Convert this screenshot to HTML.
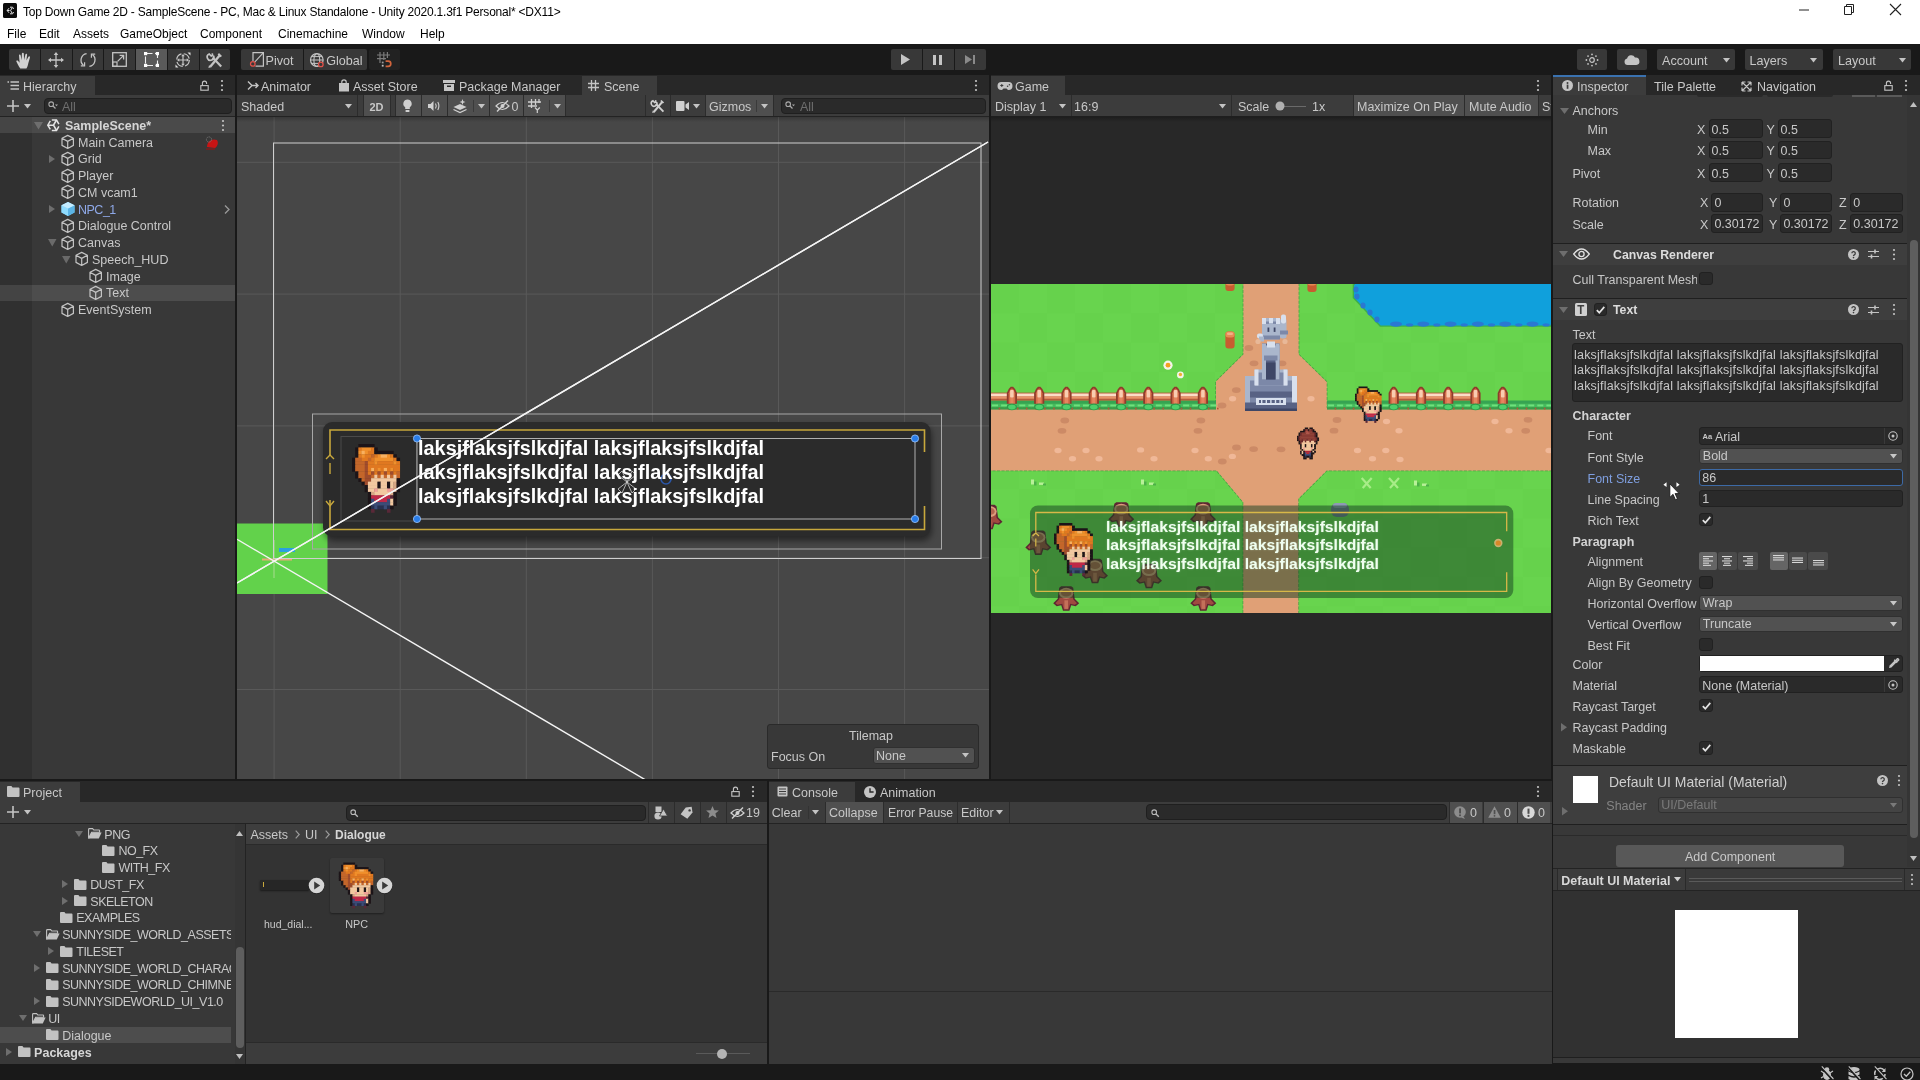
<!DOCTYPE html>
<html><head><meta charset="utf-8"><title>Unity</title>
<style>
html,body{margin:0;padding:0;background:#191919;}
body{width:1920px;height:1080px;position:relative;overflow:hidden;font-family:"Liberation Sans",sans-serif;font-size:13px;color:#c8c8c8;}
.a{position:absolute;box-sizing:border-box;}
.t{position:absolute;white-space:nowrap;line-height:16px;height:16px;transform:scaleY(1.045);transform-origin:0 50%;}
svg{overflow:visible}
</style></head><body>
<div class="a" style="left:0px;top:0px;width:1920px;height:44px;background:#ffffff;"></div>
<svg class="a" style="left:3px;top:3px;" width="14" height="15" viewBox="0 0 14 15"><rect width="14" height="15" rx="1.5" fill="#0c0c0c"/><path d="M4.2 7.5H6.6 M7.6 7.5L9 5 M7.6 7.5L9 10 M6 5.2L4.2 7.5L6 9.8 M7 4.2H9.6L10.6 6 M7 10.8H9.6L10.6 9" fill="none" stroke="#e8e8e8" stroke-width="1"/></svg>
<div class="t" style="left:23px;top:3.50px;font-size:12px;color:#000;letter-spacing:-0.21px;">Top Down Game 2D - SampleScene - PC, Mac &amp; Linux Standalone - Unity 2020.1.3f1 Personal* &lt;DX11&gt;</div>
<svg class="a" style="left:1799px;top:5px;" width="10" height="10" viewBox="0 0 10 10"><path d="M0 5H10" stroke="#222" stroke-width="1"/></svg>
<svg class="a" style="left:1844px;top:4px;" width="10" height="11" viewBox="0 0 10 11"><path d="M0.5 2.5H7.5V10.5H0.5Z M2.5 2.5V0.5H9.5V8.5H7.5" fill="none" stroke="#222" stroke-width="1"/></svg>
<svg class="a" style="left:1890px;top:4px;" width="11" height="11" viewBox="0 0 11 11"><path d="M0 0L11 11M11 0L0 11" stroke="#222" stroke-width="1.1"/></svg>
<div class="t" style="left:7px;top:25.50px;font-size:12px;color:#000;">File</div>
<div class="t" style="left:39px;top:25.50px;font-size:12px;color:#000;">Edit</div>
<div class="t" style="left:73px;top:25.50px;font-size:12px;color:#000;">Assets</div>
<div class="t" style="left:120px;top:25.50px;font-size:12px;color:#000;">GameObject</div>
<div class="t" style="left:200px;top:25.50px;font-size:12px;color:#000;">Component</div>
<div class="t" style="left:278px;top:25.50px;font-size:12px;color:#000;">Cinemachine</div>
<div class="t" style="left:362px;top:25.50px;font-size:12px;color:#000;">Window</div>
<div class="t" style="left:420px;top:25.50px;font-size:12px;color:#000;">Help</div>
<div class="a" style="left:0px;top:44px;width:1920px;height:31px;background:#191919;"></div>
<div class="a" style="left:9.0px;top:49px;width:30.75px;height:21px;background:#383838;border-radius:2px 0 0 2px"></div>
<div class="a" style="left:40.75px;top:49px;width:30.75px;height:21px;background:#383838;border-radius:0"></div>
<div class="a" style="left:72.5px;top:49px;width:30.75px;height:21px;background:#383838;border-radius:0"></div>
<div class="a" style="left:104.25px;top:49px;width:30.75px;height:21px;background:#383838;border-radius:0"></div>
<div class="a" style="left:136.0px;top:49px;width:30.75px;height:21px;background:#5a5a5a;border-radius:0"></div>
<div class="a" style="left:167.75px;top:49px;width:30.75px;height:21px;background:#383838;border-radius:0"></div>
<div class="a" style="left:199.5px;top:49px;width:30.75px;height:21px;background:#383838;border-radius:0 2px 2px 0"></div>
<div class="a" style="left:241px;top:49px;width:62px;height:21px;background:#383838;border-radius:2px 0 0 2px"></div>
<div class="a" style="left:304px;top:49px;width:63px;height:21px;background:#383838;border-radius:0 2px 2px 0"></div>
<div class="a" style="left:368.6px;top:49px;width:31.4px;height:21px;background:#222222;border-radius:2px"></div>
<div class="t" style="left:265.5px;top:52.50px;font-size:12.6px;color:#c8c8c8;">Pivot</div>
<div class="t" style="left:326.2px;top:52.50px;font-size:12.6px;color:#c8c8c8;">Global</div>
<div class="a" style="left:890.5px;top:49px;width:31px;height:21px;background:#383838;border-radius:2px 0 0 2px"></div>
<div class="a" style="left:922.5px;top:49px;width:31px;height:21px;background:#383838;border-radius:0"></div>
<div class="a" style="left:954.5px;top:49px;width:31px;height:21px;background:#383838;border-radius:0 2px 2px 0"></div>
<svg class="a" style="left:900px;top:54px;" width="11" height="11" viewBox="0 0 11 11"><path d="M1 0L10 5.5L1 11Z" fill="#c4c4c4"/></svg>
<svg class="a" style="left:933px;top:54.5px;" width="9" height="10" viewBox="0 0 9 10"><path d="M0 0H3V10H0ZM6 0H9V10H6Z" fill="#c4c4c4"/></svg>
<svg class="a" style="left:965px;top:55px;" width="10" height="9" viewBox="0 0 10 9"><path d="M0 0L7 4.5L0 9Z" fill="#8a8a8a"/><rect x="8" y="0" width="2" height="9" fill="#8a8a8a"/></svg>
<div class="a" style="left:1577px;top:49px;width:30px;height:21px;background:#383838;border-radius:2px"></div>
<div class="a" style="left:1617px;top:49px;width:30px;height:21px;background:#383838;border-radius:2px"></div>
<div class="a" style="left:1657px;top:49px;width:78px;height:21px;background:#383838;border-radius:2px"></div>
<div class="t" style="left:1662px;top:53.10px;font-size:12.6px;color:#c8c8c8;">Account</div>
<svg class="a" style="left:1722.5px;top:57.75px;" width="7" height="4.5" viewBox="0 0 7 4.5"><path d="M0 0H7L3.5 4.5Z" fill="#c4c4c4"/></svg>
<div class="a" style="left:1744.5px;top:49px;width:78px;height:21px;background:#383838;border-radius:2px"></div>
<div class="t" style="left:1749.5px;top:53.10px;font-size:12.6px;color:#c8c8c8;">Layers</div>
<svg class="a" style="left:1810.0px;top:57.75px;" width="7" height="4.5" viewBox="0 0 7 4.5"><path d="M0 0H7L3.5 4.5Z" fill="#c4c4c4"/></svg>
<div class="a" style="left:1833px;top:49px;width:78px;height:21px;background:#383838;border-radius:2px"></div>
<div class="t" style="left:1838px;top:53.10px;font-size:12.6px;color:#c8c8c8;">Layout</div>
<svg class="a" style="left:1898.5px;top:57.75px;" width="7" height="4.5" viewBox="0 0 7 4.5"><path d="M0 0H7L3.5 4.5Z" fill="#c4c4c4"/></svg>
<svg class="a" style="left:1584px;top:52px;" width="16" height="16" viewBox="0 0 16 16"><circle cx="8" cy="8" r="2.3" fill="none" stroke="#c4c4c4" stroke-width="1.2"/><circle cx="13.60" cy="8.00" r="0.9" fill="#c4c4c4"/><circle cx="11.96" cy="11.96" r="0.9" fill="#c4c4c4"/><circle cx="8.00" cy="13.60" r="0.9" fill="#c4c4c4"/><circle cx="4.04" cy="11.96" r="0.9" fill="#c4c4c4"/><circle cx="2.40" cy="8.00" r="0.9" fill="#c4c4c4"/><circle cx="4.04" cy="4.04" r="0.9" fill="#c4c4c4"/><circle cx="8.00" cy="2.40" r="0.9" fill="#c4c4c4"/><circle cx="11.96" cy="4.04" r="0.9" fill="#c4c4c4"/></svg>
<svg class="a" style="left:1624px;top:54px;" width="16" height="11" viewBox="0 0 16 11"><path d="M3.5 11a3.3 3.3 0 0 1-.4-6.5A4.2 4.2 0 0 1 11 3.6a3.7 3.7 0 0 1 1.3 7.4Z" fill="#c4c4c4"/></svg>
<div class="a" style="left:0px;top:1062px;width:1920px;height:18px;background:#191919;"></div>
<svg class="a" style="left:16.4px;top:51.5px;" width="16" height="17" viewBox="0 0 16 17"><path d="M4.3 16.5C2.6 14.2 1.2 11.6 0.4 9.6C0 8.6 1.2 7.9 2 8.8L3.6 10.8L3 3.6C2.9 2.4 4.5 2.2 4.7 3.4L5.6 8.2L5.9 1.6C6 0.3 7.7 0.3 7.8 1.6L8.1 8.1L9.4 2.4C9.7 1.2 11.3 1.5 11.1 2.8L10.4 8.6L12.3 4.9C12.9 3.8 14.3 4.5 13.9 5.7L12.3 11.2C11.9 13.4 11.3 15 10.4 16.5Z" fill="#d2d2d2"/></svg>
<svg class="a" style="left:48.15px;top:51.5px;" width="16" height="16" viewBox="0 0 16 16"><path d="M8 1V15M1 8H15" stroke="#c4c4c4" stroke-width="1.3" fill="none"/><path d="M8 0L10.3 3H5.7Z M8 16L10.3 13H5.7Z M0 8L3 5.7V10.3Z M16 8L13 5.7V10.3Z" fill="#c4c4c4"/></svg>
<svg class="a" style="left:79.9px;top:51.5px;" width="16" height="16" viewBox="0 0 16 16"><path d="M3.4 13.2A6.6 6.6 0 0 1 6.6 1.6 M12.6 2.8A6.6 6.6 0 0 1 9.4 14.4" fill="none" stroke="#c4c4c4" stroke-width="1.3"/><path d="M0.8 13.9H4.6V10.2" fill="none" stroke="#c4c4c4" stroke-width="1.2"/><path d="M15.2 2.1H11.4V5.8" fill="none" stroke="#c4c4c4" stroke-width="1.2"/></svg>
<svg class="a" style="left:112.15px;top:52px;" width="15" height="15" viewBox="0 0 15 15"><rect x="0.7" y="0.7" width="13.6" height="13.6" fill="none" stroke="#c4c4c4" stroke-width="1.3"/><rect x="0.7" y="10" width="4.3" height="4.3" fill="none" stroke="#c4c4c4" stroke-width="1.2"/><path d="M5.6 9.4L11.4 3.6 M7.6 3.4H11.6V7.4" fill="none" stroke="#c4c4c4" stroke-width="1.3"/></svg>
<svg class="a" style="left:143.9px;top:52px;" width="15" height="15" viewBox="0 0 15 15"><path d="M1.5 1.5H13.5V13.5H1.5Z" fill="none" stroke="#f0f0f0" stroke-width="1.1" stroke-dasharray="7 2.5 0 0"/><rect x="0" y="0" width="3.2" height="3.2" fill="#fff"/><rect x="11.8" y="0" width="3.2" height="3.2" fill="#fff"/><rect x="0" y="11.8" width="3.2" height="3.2" fill="#fff"/><rect x="11.8" y="11.8" width="3.2" height="3.2" fill="#fff"/></svg>
<svg class="a" style="left:175.15px;top:51.5px;" width="16" height="16" viewBox="0 0 16 16"><circle cx="8" cy="8" r="6.3" fill="none" stroke="#c4c4c4" stroke-width="1.2" stroke-dasharray="7.5 2.4"/><path d="M8 3.4V12.6M3.4 8H12.6" stroke="#c4c4c4" stroke-width="1.2"/><path d="M8 2L9.8 4.3H6.2Z M8 14L9.8 11.7H6.2Z M2 8L4.3 6.2V9.8Z M14 8L11.7 6.2V9.8Z" fill="#c4c4c4"/><path d="M12.5 0.5H15.5V3.5Z M0.5 12.5V15.5H3.5Z" fill="#e0e0e0"/></svg>
<svg class="a" style="left:206.9px;top:51.5px;" width="16" height="16" viewBox="0 0 16 16"><path d="M3.2 14.8L12.6 3.6" stroke="#c4c4c4" stroke-width="2.4"/><path d="M12 1L15 4L13.4 5.2L10.6 2.4Z" fill="#c4c4c4"/><path d="M1.4 16L2 13.2L4.2 15.2Z" fill="#c4c4c4"/><path d="M5.6 5.6L14.2 14.4" stroke="#c4c4c4" stroke-width="2.2"/><path d="M6.6 3.8A3.3 3.3 0 1 1 2.2 2L4.2 4L5.6 3.4L5.2 1.4" fill="none" stroke="#c4c4c4" stroke-width="1.7"/></svg>
<svg class="a" style="left:250px;top:52px;" width="15" height="15" viewBox="0 0 15 15"><path d="M3 9V0.7H13.4V14.2H5.5" fill="none" stroke="#c4c4c4" stroke-width="1.2"/><path d="M4.4 10.4L13 1.2" stroke="#c4c4c4" stroke-width="1.1"/><circle cx="2.8" cy="11.9" r="2.3" fill="#383838" stroke="#e0524a" stroke-width="1.3"/></svg>
<svg class="a" style="left:310px;top:52.5px;" width="15" height="15" viewBox="0 0 15 15"><circle cx="6.8" cy="7" r="6.3" fill="none" stroke="#c4c4c4" stroke-width="1.2"/><ellipse cx="6.8" cy="7" rx="2.9" ry="6.3" fill="none" stroke="#c4c4c4" stroke-width="1.1"/><path d="M0.5 7H13.1M1.6 3.6H12M1.6 10.4H12" stroke="#c4c4c4" stroke-width="1"/><circle cx="10.8" cy="11.4" r="2.3" fill="#383838" stroke="#e0524a" stroke-width="1.3"/></svg>
<svg class="a" style="left:376.5px;top:52px;" width="15" height="16" viewBox="0 0 15 16"><path d="M3 0V11M6.8 0V8M10.4 0V6M0 3H13M0 6.6H9" stroke="#7c7c7c" stroke-width="1.2" fill="none"/><rect x="4.8" y="9.6" width="1.8" height="1.8" fill="#9a9a9a"/><rect x="4.8" y="12.8" width="1.8" height="1.8" fill="#c0c0c0"/><path d="M8.6 9.2H11.2A2.6 2.6 0 0 1 11.2 14.4H8.6" fill="none" stroke="#d0643c" stroke-width="1.7"/></svg>
<div class="a" style="left:0px;top:75px;width:235px;height:704px;background:#383838;"></div>
<div class="a" style="left:0px;top:75px;width:235px;height:20px;background:#282828;"></div>
<div class="a" style="left:0px;top:76px;width:95px;height:19px;background:#3c3c3c;"></div>
<svg class="a" style="left:7px;top:81px;" width="12" height="10" viewBox="0 0 12 10"><path d="M0.5 1H2 M3.5 1H12 M3.5 4.5H12 M3.5 8H12" stroke="#c4c4c4" stroke-width="1.4"/></svg>
<div class="t" style="left:23px;top:79.00px;font-size:12.5px;color:#c8c8c8;">Hierarchy</div>
<svg class="a" style="left:200.0px;top:80.0px;" width="9" height="11" viewBox="0 0 9 11"><rect x="0.8" y="5.6" width="7.4" height="4.6" fill="none" stroke="#c4c4c4" stroke-width="1.1"/><path d="M2.4 5.6V3.2a2.1 2.1 0 0 1 4.2 0V4" fill="none" stroke="#c4c4c4" stroke-width="1.1"/></svg>
<svg class="a" style="left:220px;top:79.0px;" width="4" height="13.0" viewBox="0 0 4 13.0"><circle cx="2" cy="2.0" r="1.1" fill="#c4c4c4"/><circle cx="2" cy="6.5" r="1.1" fill="#c4c4c4"/><circle cx="2" cy="11.0" r="1.1" fill="#c4c4c4"/></svg>
<div class="a" style="left:0px;top:95px;width:235px;height:21.5px;background:#3c3c3c;"></div>
<div class="a" style="left:0px;top:116px;width:235px;height:1px;background:#232323;"></div>
<svg class="a" style="left:7px;top:100px;" width="12" height="12" viewBox="0 0 12 12"><path d="M6 0V12M0 6H12" stroke="#c4c4c4" stroke-width="1.6"/></svg>
<svg class="a" style="left:23.5px;top:103.75px;" width="7" height="4.5" viewBox="0 0 7 4.5"><path d="M0 0H7L3.5 4.5Z" fill="#c4c4c4"/></svg>
<div class="a" style="left:44px;top:97.5px;width:188px;height:16.5px;background:#2a2a2a;border-radius:4px;border:1px solid #1f1f1f;"></div>
<svg class="a" style="left:48px;top:101px;" width="10" height="9" viewBox="0 0 10 9"><circle cx="3.2" cy="3.2" r="2.3" fill="none" stroke="#aaa" stroke-width="1.1"/><path d="M5 5L7.5 7.5" stroke="#aaa" stroke-width="1.2"/><path d="M7 3.5H10L8.5 5.2Z" fill="#aaa"/></svg>
<div class="t" style="left:62px;top:98.50px;font-size:12.5px;color:#6e6e6e;">All</div>
<div class="a" style="left:0px;top:133px;width:32px;height:646px;background:#303030;"></div>
<div class="a" style="left:0px;top:117px;width:235px;height:16px;background:#4a4a4a;"></div>
<div class="a" style="left:0px;top:117px;width:32px;height:16px;background:#454545;"></div>
<svg class="a" style="left:34.0px;top:122.05px;" width="9" height="7.5" viewBox="0 0 9 7.5"><path d="M0 0H9L4.5 7.5Z" fill="#6e6e6e"/></svg>
<svg class="a" style="left:47.2px;top:119.2px;" width="13" height="12.4" viewBox="0 0 13 12.4"><path d="M6.5 6.2L0.8 6.2 M6.5 6.2L9.5 1 M6.5 6.2L9.5 11.4" fill="none" stroke="#e4e4e4" stroke-width="1.6"/><path d="M3.3 1.9L0.8 6.2L3.3 10.5 M4.8 1H9.5L11.9 5.1 M4.8 11.4H9.5L11.9 7.3" fill="none" stroke="#e4e4e4" stroke-width="1.5" stroke-linejoin="miter"/></svg>
<div class="t" style="left:65px;top:117.80px;font-size:12.5px;color:#d6d6d6;font-weight:700;">SampleScene*</div>
<svg class="a" style="left:221px;top:119.0px;" width="4" height="13.0" viewBox="0 0 4 13.0"><circle cx="2" cy="2.0" r="1.1" fill="#c4c4c4"/><circle cx="2" cy="6.5" r="1.1" fill="#c4c4c4"/><circle cx="2" cy="11.0" r="1.1" fill="#c4c4c4"/></svg>
<svg class="a" style="left:60px;top:134.2px;" width="16" height="16" viewBox="0 0 16 16"><path d="M7.7 1.4L13.4 4.3V11.4L7.7 14.5 2 11.4V4.3Z M7.7 7.4V14.5 M7.7 7.4L2 4.3 M7.7 7.4L13.4 4.3" fill="none" stroke="#c4c4c4" stroke-width="1.2" stroke-linejoin="round"/></svg>
<div class="t" style="left:78px;top:134.70px;font-size:12.5px;color:#c8c8c8;">Main Camera</div>
<svg class="a" style="left:60px;top:150.92999999999998px;" width="16" height="16" viewBox="0 0 16 16"><path d="M7.7 1.4L13.4 4.3V11.4L7.7 14.5 2 11.4V4.3Z M7.7 7.4V14.5 M7.7 7.4L2 4.3 M7.7 7.4L13.4 4.3" fill="none" stroke="#c4c4c4" stroke-width="1.2" stroke-linejoin="round"/></svg>
<div class="t" style="left:78px;top:151.43px;font-size:12.5px;color:#c8c8c8;">Grid</div>
<svg class="a" style="left:49.0px;top:154.92999999999998px;" width="6" height="8" viewBox="0 0 6 8"><path d="M0 0L6 4.0L0 8Z" fill="#6e6e6e"/></svg>
<svg class="a" style="left:60px;top:167.66px;" width="16" height="16" viewBox="0 0 16 16"><path d="M7.7 1.4L13.4 4.3V11.4L7.7 14.5 2 11.4V4.3Z M7.7 7.4V14.5 M7.7 7.4L2 4.3 M7.7 7.4L13.4 4.3" fill="none" stroke="#c4c4c4" stroke-width="1.2" stroke-linejoin="round"/></svg>
<div class="t" style="left:78px;top:168.16px;font-size:12.5px;color:#c8c8c8;">Player</div>
<svg class="a" style="left:60px;top:184.39px;" width="16" height="16" viewBox="0 0 16 16"><path d="M7.7 1.4L13.4 4.3V11.4L7.7 14.5 2 11.4V4.3Z M7.7 7.4V14.5 M7.7 7.4L2 4.3 M7.7 7.4L13.4 4.3" fill="none" stroke="#c4c4c4" stroke-width="1.2" stroke-linejoin="round"/></svg>
<div class="t" style="left:78px;top:184.89px;font-size:12.5px;color:#c8c8c8;">CM vcam1</div>
<svg class="a" style="left:60px;top:201.12px;" width="16" height="16" viewBox="0 0 16 16"><path d="M8 1L14.5 4.2V11.6L8 15 1.5 11.6V4.2Z" fill="#7fd6fd"/><path d="M8 7.6L14.5 4.2V11.6L8 15Z" fill="#5bb4e6"/><path d="M8 7.6L1.5 4.2V11.6L8 15Z" fill="#8fdcff"/><path d="M8 1L14.5 4.2 8 7.6 1.5 4.2Z" fill="#c4ecff"/></svg>
<div class="t" style="left:78px;top:201.62px;font-size:12.5px;color:#8ea8e8;letter-spacing:-0.5px;">NPC_1</div>
<svg class="a" style="left:49.0px;top:205.12px;" width="6" height="8" viewBox="0 0 6 8"><path d="M0 0L6 4.0L0 8Z" fill="#6e6e6e"/></svg>
<svg class="a" style="left:60px;top:217.85px;" width="16" height="16" viewBox="0 0 16 16"><path d="M7.7 1.4L13.4 4.3V11.4L7.7 14.5 2 11.4V4.3Z M7.7 7.4V14.5 M7.7 7.4L2 4.3 M7.7 7.4L13.4 4.3" fill="none" stroke="#c4c4c4" stroke-width="1.2" stroke-linejoin="round"/></svg>
<div class="t" style="left:78px;top:218.35px;font-size:12.5px;color:#c8c8c8;">Dialogue Control</div>
<svg class="a" style="left:60px;top:234.57999999999998px;" width="16" height="16" viewBox="0 0 16 16"><path d="M7.7 1.4L13.4 4.3V11.4L7.7 14.5 2 11.4V4.3Z M7.7 7.4V14.5 M7.7 7.4L2 4.3 M7.7 7.4L13.4 4.3" fill="none" stroke="#c4c4c4" stroke-width="1.2" stroke-linejoin="round"/></svg>
<div class="t" style="left:78px;top:235.08px;font-size:12.5px;color:#c8c8c8;">Canvas</div>
<svg class="a" style="left:47.75px;top:239.32999999999998px;" width="8.5" height="7.5" viewBox="0 0 8.5 7.5"><path d="M0 0H8.5L4.25 7.5Z" fill="#6a6a6a"/></svg>
<svg class="a" style="left:74px;top:251.31px;" width="16" height="16" viewBox="0 0 16 16"><path d="M7.7 1.4L13.4 4.3V11.4L7.7 14.5 2 11.4V4.3Z M7.7 7.4V14.5 M7.7 7.4L2 4.3 M7.7 7.4L13.4 4.3" fill="none" stroke="#c4c4c4" stroke-width="1.2" stroke-linejoin="round"/></svg>
<div class="t" style="left:92px;top:251.81px;font-size:12.5px;color:#c8c8c8;">Speech_HUD</div>
<svg class="a" style="left:61.75px;top:256.06px;" width="8.5" height="7.5" viewBox="0 0 8.5 7.5"><path d="M0 0H8.5L4.25 7.5Z" fill="#6a6a6a"/></svg>
<svg class="a" style="left:88px;top:268.03999999999996px;" width="16" height="16" viewBox="0 0 16 16"><path d="M7.7 1.4L13.4 4.3V11.4L7.7 14.5 2 11.4V4.3Z M7.7 7.4V14.5 M7.7 7.4L2 4.3 M7.7 7.4L13.4 4.3" fill="none" stroke="#c4c4c4" stroke-width="1.2" stroke-linejoin="round"/></svg>
<div class="t" style="left:106px;top:268.54px;font-size:12.5px;color:#c8c8c8;">Image</div>
<div class="a" style="left:0px;top:284.57px;width:235px;height:16.6px;background:#4d4d4d;"></div>
<div class="a" style="left:0px;top:284.57px;width:32px;height:16.6px;background:#444444;"></div>
<svg class="a" style="left:88px;top:284.77px;" width="16" height="16" viewBox="0 0 16 16"><path d="M7.7 1.4L13.4 4.3V11.4L7.7 14.5 2 11.4V4.3Z M7.7 7.4V14.5 M7.7 7.4L2 4.3 M7.7 7.4L13.4 4.3" fill="none" stroke="#c4c4c4" stroke-width="1.2" stroke-linejoin="round"/></svg>
<div class="t" style="left:106px;top:285.27px;font-size:12.5px;color:#c8c8c8;">Text</div>
<svg class="a" style="left:60px;top:301.5px;" width="16" height="16" viewBox="0 0 16 16"><path d="M7.7 1.4L13.4 4.3V11.4L7.7 14.5 2 11.4V4.3Z M7.7 7.4V14.5 M7.7 7.4L2 4.3 M7.7 7.4L13.4 4.3" fill="none" stroke="#c4c4c4" stroke-width="1.2" stroke-linejoin="round"/></svg>
<div class="t" style="left:78px;top:302.00px;font-size:12.5px;color:#c8c8c8;">EventSystem</div>
<svg class="a" style="left:224px;top:204.5px;" width="6" height="9" viewBox="0 0 6 9"><path d="M1 0.5L5 4.5L1 8.5" fill="none" stroke="#9a9a9a" stroke-width="1.3"/></svg>
<svg class="a" style="left:204px;top:135px;" width="16" height="15" viewBox="0 0 16 15"><path d="M3 12C3 6 8 3 13 5C15 8 13 12 11 13Z" fill="#c81414"/><path d="M2 14H11" stroke="#a01010" stroke-width="1"/><circle cx="5" cy="4.5" r="2.6" fill="none" stroke="#777" stroke-width="1" stroke-dasharray="1.3 1"/></svg>
<div class="a" style="left:237px;top:75px;width:752px;height:704px;background:#474747;"></div>
<div class="a" style="left:237px;top:75px;width:752px;height:20px;background:#282828;"></div>
<div class="a" style="left:581.5px;top:76px;width:75.5px;height:19px;background:#3c3c3c;"></div>
<svg class="a" style="left:247px;top:80px;" width="12" height="11" viewBox="0 0 12 11"><path d="M1 1.5L5 5.5L1 9.5 M5 5.5H11 M8.5 3L11 5.5L8.5 8" fill="none" stroke="#c4c4c4" stroke-width="1.4"/></svg>
<div class="t" style="left:261px;top:79.00px;font-size:12.5px;color:#c8c8c8;">Animator</div>
<svg class="a" style="left:338px;top:79px;" width="12" height="13" viewBox="0 0 12 13"><path d="M1 4H11V12.5H1Z" fill="#c4c4c4"/><path d="M3.8 5V3a2.2 2.2 0 0 1 4.4 0V5" fill="none" stroke="#c4c4c4" stroke-width="1.2"/></svg>
<div class="t" style="left:353px;top:79.00px;font-size:12.5px;color:#c8c8c8;">Asset Store</div>
<svg class="a" style="left:443px;top:80px;" width="12" height="11" viewBox="0 0 12 11"><path d="M0 0H12V3H0Z M1 4H11V11H1Z" fill="#c4c4c4"/><rect x="4" y="5.5" width="4" height="1.5" fill="#282828"/></svg>
<div class="t" style="left:459px;top:79.00px;font-size:12.5px;color:#c8c8c8;">Package Manager</div>
<svg class="a" style="left:588px;top:80px;" width="11" height="11" viewBox="0 0 11 11"><path d="M3.5 0V11 M7.5 0V11 M0 3.5H11 M0 7.5H11" stroke="#c4c4c4" stroke-width="1.3"/></svg>
<div class="t" style="left:604px;top:79.00px;font-size:12.5px;color:#c8c8c8;">Scene</div>
<svg class="a" style="left:974px;top:79.0px;" width="4" height="13.0" viewBox="0 0 4 13.0"><circle cx="2" cy="2.0" r="1.1" fill="#c4c4c4"/><circle cx="2" cy="6.5" r="1.1" fill="#c4c4c4"/><circle cx="2" cy="11.0" r="1.1" fill="#c4c4c4"/></svg>
<div class="a" style="left:237px;top:95px;width:752px;height:21.5px;background:#3c3c3c;"></div>
<div class="a" style="left:237px;top:116px;width:752px;height:1px;background:#232323;"></div>
<div class="t" style="left:241px;top:99.30px;font-size:12.5px;color:#c8c8c8;">Shaded</div>
<svg class="a" style="left:345.0px;top:103.75px;" width="7" height="4.5" viewBox="0 0 7 4.5"><path d="M0 0H7L3.5 4.5Z" fill="#c4c4c4"/></svg>
<div class="a" style="left:357px;top:95px;width:1px;height:21px;background:#2c2c2c;"></div>
<div class="a" style="left:364px;top:95px;width:25.5px;height:21px;background:#4f4f4f;"></div>
<div class="a" style="left:363px;top:95px;width:1px;height:21px;background:#2c2c2c;"></div>
<div class="a" style="left:389.5px;top:95px;width:1px;height:21px;background:#2c2c2c;"></div>
<div class="t" style="left:369.5px;top:99.30px;font-size:11px;color:#c8c8c8;font-weight:700;">2D</div>
<div class="a" style="left:396px;top:95px;width:25px;height:21px;background:#4f4f4f;"></div>
<div class="a" style="left:395px;top:95px;width:1px;height:21px;background:#2c2c2c;"></div>
<div class="a" style="left:421px;top:95px;width:1px;height:21px;background:#2c2c2c;"></div>
<svg class="a" style="left:402px;top:99px;" width="11" height="14" viewBox="0 0 11 14"><path d="M5.5 0.5a4.2 4.2 0 0 1 2.3 7.7V10H3.2V8.2A4.2 4.2 0 0 1 5.5 0.5Z" fill="#d0d0d0"/><rect x="3.6" y="11" width="3.8" height="2" fill="#d0d0d0"/></svg>
<div class="a" style="left:422px;top:95px;width:25px;height:21px;background:#4f4f4f;"></div>
<div class="a" style="left:447px;top:95px;width:1px;height:21px;background:#2c2c2c;"></div>
<svg class="a" style="left:428px;top:100px;" width="13" height="12" viewBox="0 0 13 12"><path d="M0 4H2.5L5.5 1V11L2.5 8H0Z" fill="#d0d0d0"/><path d="M7.5 3.5Q9 6 7.5 8.5 M9.8 2Q12 6 9.8 10" fill="none" stroke="#d0d0d0" stroke-width="1.1"/></svg>
<div class="a" style="left:448px;top:95px;width:41px;height:21px;background:#4f4f4f;"></div>
<div class="a" style="left:489px;top:95px;width:1px;height:21px;background:#2c2c2c;"></div>
<div class="a" style="left:473px;top:100px;width:1px;height:12px;background:#3a3a3a;"></div>
<svg class="a" style="left:453px;top:99px;" width="14" height="14" viewBox="0 0 14 14"><path d="M0.5 8L7 5 13.5 8 7 11Z" fill="#d0d0d0"/><path d="M0.5 10.5L7 13.5 13.5 10.5" fill="none" stroke="#d0d0d0" stroke-width="1.2"/><path d="M9.5 0L10.3 2.2 12.5 3 10.3 3.8 9.5 6 8.7 3.8 6.5 3 8.7 2.2Z" fill="#d0d0d0"/></svg>
<svg class="a" style="left:477.5px;top:103.75px;" width="7" height="4.5" viewBox="0 0 7 4.5"><path d="M0 0H7L3.5 4.5Z" fill="#c4c4c4"/></svg>
<div class="a" style="left:490px;top:95px;width:33px;height:21px;background:#4f4f4f;"></div>
<div class="a" style="left:523px;top:95px;width:1px;height:21px;background:#2c2c2c;"></div>
<svg class="a" style="left:495px;top:100px;" width="15" height="12" viewBox="0 0 15 12"><path d="M1 6Q7.5 -1 14 6Q7.5 13 1 6Z" fill="none" stroke="#d0d0d0" stroke-width="1.2"/><circle cx="7.5" cy="6" r="2" fill="#d0d0d0"/><path d="M2 11.5L13 0.5" stroke="#d0d0d0" stroke-width="1.4"/></svg>
<div class="t" style="left:511.5px;top:99.00px;font-size:12.5px;color:#c8c8c8;">0</div>
<div class="a" style="left:524px;top:95px;width:41px;height:21px;background:#4f4f4f;"></div>
<div class="a" style="left:565px;top:95px;width:1px;height:21px;background:#2c2c2c;"></div>
<div class="a" style="left:548.5px;top:100px;width:1px;height:12px;background:#3a3a3a;"></div>
<svg class="a" style="left:528px;top:99px;" width="13" height="14" viewBox="0 0 13 14"><path d="M3.5 0V9 M7.5 0V6 M11 0V4 M0 3H13 M0 7H9" stroke="#d0d0d0" stroke-width="1.3" fill="none"/><path d="M7 8.5L9.3 11V14 M11.8 8.5L9.4 11" stroke="#d0d0d0" stroke-width="1.2" fill="none"/></svg>
<svg class="a" style="left:553.5px;top:103.75px;" width="7" height="4.5" viewBox="0 0 7 4.5"><path d="M0 0H7L3.5 4.5Z" fill="#c4c4c4"/></svg>
<div class="a" style="left:644.5px;top:95px;width:1px;height:21px;background:#2c2c2c;"></div>
<div class="a" style="left:645.5px;top:95px;width:24.5px;height:21px;background:#3c3c3c;"></div>
<div class="a" style="left:670px;top:95px;width:1px;height:21px;background:#2c2c2c;"></div>
<svg class="a" style="left:650.5px;top:98.5px;" width="14" height="14" viewBox="0 0 16 16"><path d="M3.2 14.8L12.6 3.6" stroke="#d0d0d0" stroke-width="2.4"/><path d="M12 1L15 4L13.4 5.2L10.6 2.4Z" fill="#d0d0d0"/><path d="M1.4 16L2 13.2L4.2 15.2Z" fill="#d0d0d0"/><path d="M5.6 5.6L14.2 14.4" stroke="#d0d0d0" stroke-width="2.2"/><path d="M6.6 3.8A3.3 3.3 0 1 1 2.2 2L4.2 4L5.6 3.4L5.2 1.4" fill="none" stroke="#d0d0d0" stroke-width="1.7"/></svg>
<div class="a" style="left:671px;top:95px;width:34px;height:21px;background:#3c3c3c;"></div>
<div class="a" style="left:705px;top:95px;width:1px;height:21px;background:#2c2c2c;"></div>
<svg class="a" style="left:675.5px;top:101px;" width="14" height="10" viewBox="0 0 14 10"><rect x="0" y="0" width="8.5" height="10" rx="1" fill="#d0d0d0"/><path d="M9.5 3.5L13 1V9L9.5 6.5Z" fill="#d0d0d0"/></svg>
<svg class="a" style="left:693.0px;top:103.75px;" width="7" height="4.5" viewBox="0 0 7 4.5"><path d="M0 0H7L3.5 4.5Z" fill="#c4c4c4"/></svg>
<div class="a" style="left:706px;top:95px;width:67px;height:21px;background:#4f4f4f;"></div>
<div class="a" style="left:773px;top:95px;width:1px;height:21px;background:#2c2c2c;"></div>
<div class="a" style="left:755.5px;top:100px;width:1px;height:12px;background:#3a3a3a;"></div>
<div class="t" style="left:709px;top:99.40px;font-size:12.5px;color:#c8c8c8;">Gizmos</div>
<svg class="a" style="left:761.0px;top:103.75px;" width="7" height="4.5" viewBox="0 0 7 4.5"><path d="M0 0H7L3.5 4.5Z" fill="#c4c4c4"/></svg>
<div class="a" style="left:781px;top:97.5px;width:205px;height:16.5px;background:#2a2a2a;border-radius:4px;border:1px solid #1f1f1f;"></div>
<svg class="a" style="left:785px;top:101px;" width="10" height="9" viewBox="0 0 10 9"><circle cx="3.2" cy="3.2" r="2.3" fill="none" stroke="#aaa" stroke-width="1.1"/><path d="M5 5L7.5 7.5" stroke="#aaa" stroke-width="1.2"/><path d="M7 3.5H10L8.5 5.2Z" fill="#aaa"/></svg>
<div class="t" style="left:800px;top:98.50px;font-size:12.5px;color:#6e6e6e;">All</div>
<svg class="a" style="left:237px;top:117px;overflow:hidden;" width="752" height="662" viewBox="0 0 752 662"><path d="M37.10000000000002 0V662" stroke="#595959" stroke-width="1"/><path d="M163.2 0V662" stroke="#595959" stroke-width="1"/><path d="M289.29999999999995 0V662" stroke="#595959" stroke-width="1"/><path d="M415.4 0V662" stroke="#595959" stroke-width="1"/><path d="M541.5 0V662" stroke="#595959" stroke-width="1"/><path d="M667.6 0V662" stroke="#595959" stroke-width="1"/><path d="M0 45.30000000000001H752" stroke="#595959" stroke-width="1"/><path d="M0 177.10000000000002H752" stroke="#595959" stroke-width="1"/><path d="M0 308.9H752" stroke="#595959" stroke-width="1"/><path d="M0 440.70000000000005H752" stroke="#595959" stroke-width="1"/><path d="M0 572.5H752" stroke="#595959" stroke-width="1"/><rect x="0" y="406.5" width="90.5" height="70.5" rx="0" fill="#62d24b" stroke="none" stroke-width="0" /><rect x="42" y="431" width="16" height="4" fill="#2aa0e0"/><path d="M25 442.5H55" stroke="#e8a878" stroke-width="2"/><path d="M37 423V461" stroke="#a8dc90" stroke-width="1"/><rect x="36.5" y="26" width="707.5" height="415.5" rx="0" fill="none" stroke="#cfcfcf" stroke-width="1" /><rect x="75.5" y="297" width="629.0" height="135" rx="0" fill="none" stroke="#a8a8a8" stroke-width="1" /><defs><filter id="sh" x="-5%" y="-15%" width="110%" height="140%"><feGaussianBlur stdDeviation="3"/></filter></defs><rect x="87" y="308" width="608" height="116" rx="10" fill="rgba(0,0,0,0.45)" stroke="none" stroke-width="0" filter="url(#sh)"/><rect x="86" y="305" width="607.5" height="114.5" rx="9" fill="#2b2b2b" stroke="none" stroke-width="0" /><path d="M93 339V313H687.5V335 M687.5 389V412.5H93V383" fill="none" stroke="#c8a83c" stroke-width="1.6"/><path d="M89 342L93 338L97 342 M93 346V357 M89 384L93 389L97 384" fill="none" stroke="#c8a83c" stroke-width="1.4"/><rect x="104" y="319.5" width="75.5" height="84.5" rx="0" fill="none" stroke="#4a4a4a" stroke-width="1" /><rect x="121.36" y="327.00" width="16.25" height="3.77" fill="#1c1418"/><rect x="118.18" y="330.42" width="3.53" height="3.77" fill="#1c1418"/><rect x="121.36" y="330.42" width="3.53" height="3.77" fill="#e07820"/><rect x="124.54" y="330.42" width="9.89" height="3.77" fill="#f0902c"/><rect x="134.08" y="330.42" width="3.53" height="3.77" fill="#e07820"/><rect x="137.26" y="330.42" width="3.53" height="3.77" fill="#1c1418"/><rect x="118.18" y="333.84" width="3.53" height="3.77" fill="#1c1418"/><rect x="121.36" y="333.84" width="3.53" height="3.77" fill="#f0902c"/><rect x="124.54" y="333.84" width="3.53" height="3.77" fill="#f8b060"/><rect x="127.72" y="333.84" width="3.53" height="3.77" fill="#f0902c"/><rect x="130.90" y="333.84" width="6.71" height="3.77" fill="#e07820"/><rect x="137.26" y="333.84" width="19.43" height="3.77" fill="#1c1418"/><rect x="118.18" y="337.26" width="3.53" height="3.77" fill="#1c1418"/><rect x="121.36" y="337.26" width="3.53" height="3.77" fill="#e07820"/><rect x="124.54" y="337.26" width="3.53" height="3.77" fill="#f0902c"/><rect x="127.72" y="337.26" width="6.71" height="3.77" fill="#e07820"/><rect x="134.08" y="337.26" width="3.53" height="3.77" fill="#c4662a"/><rect x="137.26" y="337.26" width="3.53" height="3.77" fill="#e07820"/><rect x="140.44" y="337.26" width="3.53" height="3.77" fill="#f0902c"/><rect x="143.62" y="337.26" width="6.71" height="3.77" fill="#f8b060"/><rect x="149.98" y="337.26" width="3.53" height="3.77" fill="#f0902c"/><rect x="153.16" y="337.26" width="3.53" height="3.77" fill="#e07820"/><rect x="156.34" y="337.26" width="3.53" height="3.77" fill="#1c1418"/><rect x="115.00" y="340.68" width="3.53" height="3.77" fill="#1c1418"/><rect x="118.18" y="340.68" width="6.71" height="3.77" fill="#c4662a"/><rect x="124.54" y="340.68" width="6.71" height="3.77" fill="#e07820"/><rect x="130.90" y="340.68" width="3.53" height="3.77" fill="#c4662a"/><rect x="134.08" y="340.68" width="3.53" height="3.77" fill="#e07820"/><rect x="137.26" y="340.68" width="19.43" height="3.77" fill="#f0902c"/><rect x="156.34" y="340.68" width="3.53" height="3.77" fill="#e07820"/><rect x="159.52" y="340.68" width="3.53" height="3.77" fill="#1c1418"/><rect x="115.00" y="344.10" width="3.53" height="3.77" fill="#1c1418"/><rect x="118.18" y="344.10" width="9.89" height="3.77" fill="#c4662a"/><rect x="127.72" y="344.10" width="3.53" height="3.77" fill="#a04c2c"/><rect x="130.90" y="344.10" width="6.71" height="3.77" fill="#e07820"/><rect x="137.26" y="344.10" width="3.53" height="3.77" fill="#f0902c"/><rect x="140.44" y="344.10" width="16.25" height="3.77" fill="#e07820"/><rect x="156.34" y="344.10" width="3.53" height="3.77" fill="#f0902c"/><rect x="159.52" y="344.10" width="3.53" height="3.77" fill="#e07820"/><rect x="115.00" y="347.52" width="3.53" height="3.77" fill="#1c1418"/><rect x="118.18" y="347.52" width="9.89" height="3.77" fill="#c4662a"/><rect x="127.72" y="347.52" width="3.53" height="3.77" fill="#a04c2c"/><rect x="130.90" y="347.52" width="32.15" height="3.77" fill="#e07820"/><rect x="115.00" y="350.94" width="3.53" height="3.77" fill="#1c1418"/><rect x="118.18" y="350.94" width="9.89" height="3.77" fill="#c4662a"/><rect x="127.72" y="350.94" width="3.53" height="3.77" fill="#a04c2c"/><rect x="130.90" y="350.94" width="3.53" height="3.77" fill="#e07820"/><rect x="134.08" y="350.94" width="3.53" height="3.77" fill="#f8b060"/><rect x="137.26" y="350.94" width="3.53" height="3.77" fill="#e07820"/><rect x="140.44" y="350.94" width="3.53" height="3.77" fill="#f0902c"/><rect x="143.62" y="350.94" width="3.53" height="3.77" fill="#e07820"/><rect x="146.80" y="350.94" width="3.53" height="3.77" fill="#f8b060"/><rect x="149.98" y="350.94" width="3.53" height="3.77" fill="#e07820"/><rect x="153.16" y="350.94" width="3.53" height="3.77" fill="#f0902c"/><rect x="156.34" y="350.94" width="6.71" height="3.77" fill="#e07820"/><rect x="118.18" y="354.36" width="3.53" height="3.77" fill="#1c1418"/><rect x="121.36" y="354.36" width="6.71" height="3.77" fill="#c4662a"/><rect x="127.72" y="354.36" width="3.53" height="3.77" fill="#a04c2c"/><rect x="130.90" y="354.36" width="3.53" height="3.77" fill="#e07820"/><rect x="134.08" y="354.36" width="3.53" height="3.77" fill="#a04c2c"/><rect x="137.26" y="354.36" width="3.53" height="3.77" fill="#e07820"/><rect x="140.44" y="354.36" width="3.53" height="3.77" fill="#a04c2c"/><rect x="143.62" y="354.36" width="3.53" height="3.77" fill="#e07820"/><rect x="146.80" y="354.36" width="3.53" height="3.77" fill="#a04c2c"/><rect x="149.98" y="354.36" width="3.53" height="3.77" fill="#e07820"/><rect x="153.16" y="354.36" width="3.53" height="3.77" fill="#a04c2c"/><rect x="156.34" y="354.36" width="3.53" height="3.77" fill="#e07820"/><rect x="159.52" y="354.36" width="3.53" height="3.77" fill="#c4662a"/><rect x="118.18" y="357.78" width="3.53" height="3.77" fill="#1c1418"/><rect x="121.36" y="357.78" width="6.71" height="3.77" fill="#c4662a"/><rect x="127.72" y="357.78" width="6.71" height="3.77" fill="#a04c2c"/><rect x="134.08" y="357.78" width="3.53" height="3.77" fill="#c4662a"/><rect x="137.26" y="357.78" width="3.53" height="3.77" fill="#f2c8a0"/><rect x="140.44" y="357.78" width="3.53" height="3.77" fill="#c4662a"/><rect x="143.62" y="357.78" width="3.53" height="3.77" fill="#f2c8a0"/><rect x="146.80" y="357.78" width="3.53" height="3.77" fill="#c4662a"/><rect x="149.98" y="357.78" width="3.53" height="3.77" fill="#f2c8a0"/><rect x="153.16" y="357.78" width="3.53" height="3.77" fill="#c4662a"/><rect x="156.34" y="357.78" width="3.53" height="3.77" fill="#f2c8a0"/><rect x="159.52" y="357.78" width="3.53" height="3.77" fill="#c4662a"/><rect x="121.36" y="361.20" width="3.53" height="3.77" fill="#1c1418"/><rect x="124.54" y="361.20" width="3.53" height="3.77" fill="#c4662a"/><rect x="127.72" y="361.20" width="6.71" height="3.77" fill="#a04c2c"/><rect x="134.08" y="361.20" width="25.79" height="3.77" fill="#f2c8a0"/><rect x="159.52" y="361.20" width="3.53" height="3.77" fill="#1c1418"/><rect x="124.54" y="364.62" width="3.53" height="3.77" fill="#1c1418"/><rect x="127.72" y="364.62" width="3.53" height="3.77" fill="#a04c2c"/><rect x="130.90" y="364.62" width="9.89" height="3.77" fill="#f2c8a0"/><rect x="140.44" y="364.62" width="3.53" height="3.77" fill="#1e1418"/><rect x="143.62" y="364.62" width="6.71" height="3.77" fill="#f2c8a0"/><rect x="149.98" y="364.62" width="3.53" height="3.77" fill="#1e1418"/><rect x="153.16" y="364.62" width="3.53" height="3.77" fill="#f2c8a0"/><rect x="156.34" y="364.62" width="3.53" height="3.77" fill="#d8a684"/><rect x="159.52" y="364.62" width="3.53" height="3.77" fill="#1c1418"/><rect x="127.72" y="368.04" width="3.53" height="3.77" fill="#1c1418"/><rect x="130.90" y="368.04" width="9.89" height="3.77" fill="#f2c8a0"/><rect x="140.44" y="368.04" width="3.53" height="3.77" fill="#1e1418"/><rect x="143.62" y="368.04" width="6.71" height="3.77" fill="#f2c8a0"/><rect x="149.98" y="368.04" width="3.53" height="3.77" fill="#1e1418"/><rect x="153.16" y="368.04" width="3.53" height="3.77" fill="#f2c8a0"/><rect x="156.34" y="368.04" width="3.53" height="3.77" fill="#d8a684"/><rect x="159.52" y="368.04" width="3.53" height="3.77" fill="#1c1418"/><rect x="127.72" y="371.46" width="3.53" height="3.77" fill="#1c1418"/><rect x="130.90" y="371.46" width="6.71" height="3.77" fill="#f2c8a0"/><rect x="137.26" y="371.46" width="3.53" height="3.77" fill="#f0a098"/><rect x="140.44" y="371.46" width="9.89" height="3.77" fill="#f2c8a0"/><rect x="149.98" y="371.46" width="6.71" height="3.77" fill="#f0a098"/><rect x="156.34" y="371.46" width="3.53" height="3.77" fill="#d8a684"/><rect x="159.52" y="371.46" width="3.53" height="3.77" fill="#1c1418"/><rect x="130.90" y="374.88" width="3.53" height="3.77" fill="#1c1418"/><rect x="134.08" y="374.88" width="3.53" height="3.77" fill="#d8a684"/><rect x="137.26" y="374.88" width="16.25" height="3.77" fill="#f2c8a0"/><rect x="153.16" y="374.88" width="3.53" height="3.77" fill="#d8a684"/><rect x="156.34" y="374.88" width="3.53" height="3.77" fill="#1c1418"/><rect x="130.90" y="378.30" width="3.53" height="3.77" fill="#1c1418"/><rect x="134.08" y="378.30" width="19.43" height="3.77" fill="#c02848"/><rect x="153.16" y="378.30" width="3.53" height="3.77" fill="#5a2838"/><rect x="156.34" y="378.30" width="3.53" height="3.77" fill="#1c1418"/><rect x="130.90" y="381.72" width="3.53" height="3.77" fill="#1c1418"/><rect x="134.08" y="381.72" width="3.53" height="3.77" fill="#3c4c78"/><rect x="137.26" y="381.72" width="13.07" height="3.77" fill="#c02848"/><rect x="149.98" y="381.72" width="3.53" height="3.77" fill="#3c4c78"/><rect x="153.16" y="381.72" width="3.53" height="3.77" fill="#f2c8a0"/><rect x="156.34" y="381.72" width="3.53" height="3.77" fill="#1c1418"/><rect x="130.90" y="385.14" width="3.53" height="3.77" fill="#1c1418"/><rect x="134.08" y="385.14" width="19.43" height="3.77" fill="#3c4c78"/><rect x="153.16" y="385.14" width="3.53" height="3.77" fill="#f2c8a0"/><rect x="156.34" y="385.14" width="3.53" height="3.77" fill="#1c1418"/><rect x="130.90" y="388.56" width="3.53" height="3.77" fill="#1c1418"/><rect x="134.08" y="388.56" width="3.53" height="3.77" fill="#283050"/><rect x="137.26" y="388.56" width="3.53" height="3.77" fill="#3c4c78"/><rect x="140.44" y="388.56" width="6.71" height="3.77" fill="#283050"/><rect x="146.80" y="388.56" width="3.53" height="3.77" fill="#3c4c78"/><rect x="149.98" y="388.56" width="3.53" height="3.77" fill="#283050"/><rect x="153.16" y="388.56" width="3.53" height="3.77" fill="#1c1418"/><rect x="134.08" y="391.98" width="3.53" height="3.77" fill="#5a2838"/><rect x="149.98" y="391.98" width="3.53" height="3.77" fill="#5a2838"/><rect x="180" y="321.5" width="498" height="80.5" rx="0" fill="none" stroke="#b0b0b0" stroke-width="1" /><path d="M0 466L751 25" stroke="#f4f4f4" stroke-width="1.4"/><path d="M0 422.29999999999995L408 662.6" stroke="#f4f4f4" stroke-width="1.4"/><circle cx="180" cy="321.5" r="3.6" fill="#2a7de8" stroke="#9cc6ff" stroke-width="0.8"/><circle cx="678" cy="321.5" r="3.6" fill="#2a7de8" stroke="#9cc6ff" stroke-width="0.8"/><circle cx="180" cy="402" r="3.6" fill="#2a7de8" stroke="#9cc6ff" stroke-width="0.8"/><circle cx="678" cy="402" r="3.6" fill="#2a7de8" stroke="#9cc6ff" stroke-width="0.8"/><circle cx="429" cy="362" r="5" fill="none" stroke="#2a62c8" stroke-width="1.6" opacity="0.8"/><path d="M390 365L381 358L385 354Z M390 365L399 358L395 354Z M390 365L381 372L385 376Z M390 365L399 372L395 376Z" fill="none" stroke="#d8d8d8" stroke-width="0.9" opacity="0.85"/></svg>
<div class="t" style="left:418px;top:435.60px;font-size:19.9px;color:#ffffff;font-weight:700;line-height:24px;height:24px;">laksjflaksjfslkdjfal laksjflaksjfslkdjfal</div>
<div class="t" style="left:418px;top:459.70px;font-size:19.9px;color:#ffffff;font-weight:700;line-height:24px;height:24px;">laksjflaksjfslkdjfal laksjflaksjfslkdjfal</div>
<div class="t" style="left:418px;top:483.70px;font-size:19.9px;color:#ffffff;font-weight:700;line-height:24px;height:24px;">laksjflaksjfslkdjfal laksjflaksjfslkdjfal</div>
<svg class="a" style="left:237px;top:117px;overflow:hidden;" width="752" height="662" viewBox="0 0 752 662"><path d="M0 466L751 25" stroke="#f4f4f4" stroke-width="1.4"/></svg>
<div class="a" style="left:767px;top:723.5px;width:211.5px;height:45px;background:#383838;border-radius:3px;border:1px solid #2a2a2a;"></div>
<div class="t" style="left:849px;top:728.00px;font-size:12.5px;color:#c8c8c8;">Tilemap</div>
<div class="t" style="left:771px;top:748.50px;font-size:12.5px;color:#c8c8c8;">Focus On</div>
<div class="a" style="left:872.5px;top:747px;width:102px;height:17px;background:#515151;border-radius:3px;border:1px solid #303030;"></div>
<div class="t" style="left:876px;top:748.00px;font-size:12.5px;color:#c8c8c8;">None</div>
<svg class="a" style="left:961.5px;top:753.25px;" width="7" height="4.5" viewBox="0 0 7 4.5"><path d="M0 0H7L3.5 4.5Z" fill="#c4c4c4"/></svg>
<div class="a" style="left:991px;top:75px;width:560px;height:704px;background:#282828;"></div>
<div class="a" style="left:991px;top:75px;width:560px;height:20px;background:#282828;"></div>
<div class="a" style="left:991px;top:76px;width:73.5px;height:19px;background:#3c3c3c;"></div>
<svg class="a" style="left:998px;top:81px;" width="14" height="10" viewBox="0 0 14 10"><path d="M3.5 1H10.5a3.5 3.5 0 0 1 0 8H10L8.5 7.5H5.5L4 9H3.5a3.5 3.5 0 0 1 0-8Z" fill="#c4c4c4"/><path d="M3.8 3V6M2.3 4.5H5.3" stroke="#3c3c3c" stroke-width="1"/><circle cx="9.6" cy="5.2" r="0.8" fill="#3c3c3c"/><circle cx="11.4" cy="3.8" r="0.8" fill="#3c3c3c"/></svg>
<div class="t" style="left:1015px;top:79.00px;font-size:12.5px;color:#c8c8c8;">Game</div>
<svg class="a" style="left:1536px;top:79.0px;" width="4" height="13.0" viewBox="0 0 4 13.0"><circle cx="2" cy="2.0" r="1.1" fill="#c4c4c4"/><circle cx="2" cy="6.5" r="1.1" fill="#c4c4c4"/><circle cx="2" cy="11.0" r="1.1" fill="#c4c4c4"/></svg>
<div class="a" style="left:991px;top:95px;width:560px;height:21.5px;background:#3c3c3c;"></div>
<div class="a" style="left:991px;top:116px;width:560px;height:1px;background:#1e1e1e;"></div>
<div class="t" style="left:995px;top:99.40px;font-size:12.5px;color:#c8c8c8;">Display 1</div>
<svg class="a" style="left:1059.0px;top:103.75px;" width="7" height="4.5" viewBox="0 0 7 4.5"><path d="M0 0H7L3.5 4.5Z" fill="#c4c4c4"/></svg>
<div class="a" style="left:1070.5px;top:95px;width:1px;height:21px;background:#2c2c2c;"></div>
<div class="t" style="left:1074px;top:99.40px;font-size:12.5px;color:#c8c8c8;">16:9</div>
<svg class="a" style="left:1219.0px;top:103.75px;" width="7" height="4.5" viewBox="0 0 7 4.5"><path d="M0 0H7L3.5 4.5Z" fill="#c4c4c4"/></svg>
<div class="a" style="left:1231px;top:95px;width:1px;height:21px;background:#2c2c2c;"></div>
<div class="t" style="left:1238px;top:99.40px;font-size:12.5px;color:#c8c8c8;">Scale</div>
<div class="a" style="left:1276px;top:105.5px;width:30px;height:1.5px;background:#6a6a6a;"></div>
<svg class="a" style="left:1275px;top:101px;" width="10" height="10" viewBox="0 0 10 10"><circle cx="5" cy="5" r="4.5" fill="#b0b0b0"/></svg>
<div class="t" style="left:1312px;top:99.40px;font-size:12.5px;color:#c8c8c8;">1x</div>
<div class="a" style="left:1353px;top:95px;width:1px;height:21px;background:#2c2c2c;"></div>
<div class="a" style="left:1354px;top:95px;width:110px;height:21px;background:#4f4f4f;"></div>
<div class="a" style="left:1464px;top:95px;width:1px;height:21px;background:#2c2c2c;"></div>
<div class="t" style="left:1357px;top:99.40px;font-size:12.5px;color:#c8c8c8;">Maximize On Play</div>
<div class="a" style="left:1465px;top:95px;width:72.5px;height:21px;background:#4f4f4f;"></div>
<div class="a" style="left:1537.5px;top:95px;width:1px;height:21px;background:#2c2c2c;"></div>
<div class="t" style="left:1469px;top:99.40px;font-size:12.5px;color:#c8c8c8;">Mute Audio</div>
<div class="a" style="left:1542px;top:96px;width:9px;height:20px;overflow:hidden;"><div class="t" style="left:0px;top:2.9px;font-size:12.5px;color:#c8c8c8;">Stats</div></div>
<svg class="a" style="left:991px;top:283.5px;overflow:hidden;" width="560.3" height="329.8" viewBox="0 0 560.3 329.8"><rect x="0.00" y="0.00" width="560.30" height="329.80" rx="0" fill="#68d44e" /><rect x="0.00" y="0.00" width="28.00" height="29.30" rx="0" fill="#66d24c" /><rect x="0.00" y="58.60" width="28.00" height="29.30" rx="0" fill="#66d24c" /><rect x="0.00" y="117.20" width="28.00" height="29.30" rx="0" fill="#66d24c" /><rect x="0.00" y="175.80" width="28.00" height="29.30" rx="0" fill="#66d24c" /><rect x="0.00" y="234.40" width="28.00" height="29.30" rx="0" fill="#66d24c" /><rect x="0.00" y="293.00" width="28.00" height="29.30" rx="0" fill="#66d24c" /><rect x="28.00" y="29.30" width="28.00" height="29.30" rx="0" fill="#66d24c" /><rect x="28.00" y="87.90" width="28.00" height="29.30" rx="0" fill="#66d24c" /><rect x="28.00" y="146.50" width="28.00" height="29.30" rx="0" fill="#66d24c" /><rect x="28.00" y="205.10" width="28.00" height="29.30" rx="0" fill="#66d24c" /><rect x="28.00" y="263.70" width="28.00" height="29.30" rx="0" fill="#66d24c" /><rect x="28.00" y="322.30" width="28.00" height="29.30" rx="0" fill="#66d24c" /><rect x="56.00" y="0.00" width="28.00" height="29.30" rx="0" fill="#66d24c" /><rect x="56.00" y="58.60" width="28.00" height="29.30" rx="0" fill="#66d24c" /><rect x="56.00" y="117.20" width="28.00" height="29.30" rx="0" fill="#66d24c" /><rect x="56.00" y="175.80" width="28.00" height="29.30" rx="0" fill="#66d24c" /><rect x="56.00" y="234.40" width="28.00" height="29.30" rx="0" fill="#66d24c" /><rect x="56.00" y="293.00" width="28.00" height="29.30" rx="0" fill="#66d24c" /><rect x="84.00" y="29.30" width="28.00" height="29.30" rx="0" fill="#66d24c" /><rect x="84.00" y="87.90" width="28.00" height="29.30" rx="0" fill="#66d24c" /><rect x="84.00" y="146.50" width="28.00" height="29.30" rx="0" fill="#66d24c" /><rect x="84.00" y="205.10" width="28.00" height="29.30" rx="0" fill="#66d24c" /><rect x="84.00" y="263.70" width="28.00" height="29.30" rx="0" fill="#66d24c" /><rect x="84.00" y="322.30" width="28.00" height="29.30" rx="0" fill="#66d24c" /><rect x="112.00" y="0.00" width="28.00" height="29.30" rx="0" fill="#66d24c" /><rect x="112.00" y="58.60" width="28.00" height="29.30" rx="0" fill="#66d24c" /><rect x="112.00" y="117.20" width="28.00" height="29.30" rx="0" fill="#66d24c" /><rect x="112.00" y="175.80" width="28.00" height="29.30" rx="0" fill="#66d24c" /><rect x="112.00" y="234.40" width="28.00" height="29.30" rx="0" fill="#66d24c" /><rect x="112.00" y="293.00" width="28.00" height="29.30" rx="0" fill="#66d24c" /><rect x="140.00" y="29.30" width="28.00" height="29.30" rx="0" fill="#66d24c" /><rect x="140.00" y="87.90" width="28.00" height="29.30" rx="0" fill="#66d24c" /><rect x="140.00" y="146.50" width="28.00" height="29.30" rx="0" fill="#66d24c" /><rect x="140.00" y="205.10" width="28.00" height="29.30" rx="0" fill="#66d24c" /><rect x="140.00" y="263.70" width="28.00" height="29.30" rx="0" fill="#66d24c" /><rect x="140.00" y="322.30" width="28.00" height="29.30" rx="0" fill="#66d24c" /><rect x="168.00" y="0.00" width="28.00" height="29.30" rx="0" fill="#66d24c" /><rect x="168.00" y="58.60" width="28.00" height="29.30" rx="0" fill="#66d24c" /><rect x="168.00" y="117.20" width="28.00" height="29.30" rx="0" fill="#66d24c" /><rect x="168.00" y="175.80" width="28.00" height="29.30" rx="0" fill="#66d24c" /><rect x="168.00" y="234.40" width="28.00" height="29.30" rx="0" fill="#66d24c" /><rect x="168.00" y="293.00" width="28.00" height="29.30" rx="0" fill="#66d24c" /><rect x="196.00" y="29.30" width="28.00" height="29.30" rx="0" fill="#66d24c" /><rect x="196.00" y="87.90" width="28.00" height="29.30" rx="0" fill="#66d24c" /><rect x="196.00" y="146.50" width="28.00" height="29.30" rx="0" fill="#66d24c" /><rect x="196.00" y="205.10" width="28.00" height="29.30" rx="0" fill="#66d24c" /><rect x="196.00" y="263.70" width="28.00" height="29.30" rx="0" fill="#66d24c" /><rect x="196.00" y="322.30" width="28.00" height="29.30" rx="0" fill="#66d24c" /><rect x="224.00" y="0.00" width="28.00" height="29.30" rx="0" fill="#66d24c" /><rect x="224.00" y="58.60" width="28.00" height="29.30" rx="0" fill="#66d24c" /><rect x="224.00" y="117.20" width="28.00" height="29.30" rx="0" fill="#66d24c" /><rect x="224.00" y="175.80" width="28.00" height="29.30" rx="0" fill="#66d24c" /><rect x="224.00" y="234.40" width="28.00" height="29.30" rx="0" fill="#66d24c" /><rect x="224.00" y="293.00" width="28.00" height="29.30" rx="0" fill="#66d24c" /><rect x="252.00" y="29.30" width="28.00" height="29.30" rx="0" fill="#66d24c" /><rect x="252.00" y="87.90" width="28.00" height="29.30" rx="0" fill="#66d24c" /><rect x="252.00" y="146.50" width="28.00" height="29.30" rx="0" fill="#66d24c" /><rect x="252.00" y="205.10" width="28.00" height="29.30" rx="0" fill="#66d24c" /><rect x="252.00" y="263.70" width="28.00" height="29.30" rx="0" fill="#66d24c" /><rect x="252.00" y="322.30" width="28.00" height="29.30" rx="0" fill="#66d24c" /><rect x="280.00" y="0.00" width="28.00" height="29.30" rx="0" fill="#66d24c" /><rect x="280.00" y="58.60" width="28.00" height="29.30" rx="0" fill="#66d24c" /><rect x="280.00" y="117.20" width="28.00" height="29.30" rx="0" fill="#66d24c" /><rect x="280.00" y="175.80" width="28.00" height="29.30" rx="0" fill="#66d24c" /><rect x="280.00" y="234.40" width="28.00" height="29.30" rx="0" fill="#66d24c" /><rect x="280.00" y="293.00" width="28.00" height="29.30" rx="0" fill="#66d24c" /><rect x="308.00" y="29.30" width="28.00" height="29.30" rx="0" fill="#66d24c" /><rect x="308.00" y="87.90" width="28.00" height="29.30" rx="0" fill="#66d24c" /><rect x="308.00" y="146.50" width="28.00" height="29.30" rx="0" fill="#66d24c" /><rect x="308.00" y="205.10" width="28.00" height="29.30" rx="0" fill="#66d24c" /><rect x="308.00" y="263.70" width="28.00" height="29.30" rx="0" fill="#66d24c" /><rect x="308.00" y="322.30" width="28.00" height="29.30" rx="0" fill="#66d24c" /><rect x="336.00" y="0.00" width="28.00" height="29.30" rx="0" fill="#66d24c" /><rect x="336.00" y="58.60" width="28.00" height="29.30" rx="0" fill="#66d24c" /><rect x="336.00" y="117.20" width="28.00" height="29.30" rx="0" fill="#66d24c" /><rect x="336.00" y="175.80" width="28.00" height="29.30" rx="0" fill="#66d24c" /><rect x="336.00" y="234.40" width="28.00" height="29.30" rx="0" fill="#66d24c" /><rect x="336.00" y="293.00" width="28.00" height="29.30" rx="0" fill="#66d24c" /><rect x="364.00" y="29.30" width="28.00" height="29.30" rx="0" fill="#66d24c" /><rect x="364.00" y="87.90" width="28.00" height="29.30" rx="0" fill="#66d24c" /><rect x="364.00" y="146.50" width="28.00" height="29.30" rx="0" fill="#66d24c" /><rect x="364.00" y="205.10" width="28.00" height="29.30" rx="0" fill="#66d24c" /><rect x="364.00" y="263.70" width="28.00" height="29.30" rx="0" fill="#66d24c" /><rect x="364.00" y="322.30" width="28.00" height="29.30" rx="0" fill="#66d24c" /><rect x="392.00" y="0.00" width="28.00" height="29.30" rx="0" fill="#66d24c" /><rect x="392.00" y="58.60" width="28.00" height="29.30" rx="0" fill="#66d24c" /><rect x="392.00" y="117.20" width="28.00" height="29.30" rx="0" fill="#66d24c" /><rect x="392.00" y="175.80" width="28.00" height="29.30" rx="0" fill="#66d24c" /><rect x="392.00" y="234.40" width="28.00" height="29.30" rx="0" fill="#66d24c" /><rect x="392.00" y="293.00" width="28.00" height="29.30" rx="0" fill="#66d24c" /><rect x="420.00" y="29.30" width="28.00" height="29.30" rx="0" fill="#66d24c" /><rect x="420.00" y="87.90" width="28.00" height="29.30" rx="0" fill="#66d24c" /><rect x="420.00" y="146.50" width="28.00" height="29.30" rx="0" fill="#66d24c" /><rect x="420.00" y="205.10" width="28.00" height="29.30" rx="0" fill="#66d24c" /><rect x="420.00" y="263.70" width="28.00" height="29.30" rx="0" fill="#66d24c" /><rect x="420.00" y="322.30" width="28.00" height="29.30" rx="0" fill="#66d24c" /><rect x="448.00" y="0.00" width="28.00" height="29.30" rx="0" fill="#66d24c" /><rect x="448.00" y="58.60" width="28.00" height="29.30" rx="0" fill="#66d24c" /><rect x="448.00" y="117.20" width="28.00" height="29.30" rx="0" fill="#66d24c" /><rect x="448.00" y="175.80" width="28.00" height="29.30" rx="0" fill="#66d24c" /><rect x="448.00" y="234.40" width="28.00" height="29.30" rx="0" fill="#66d24c" /><rect x="448.00" y="293.00" width="28.00" height="29.30" rx="0" fill="#66d24c" /><rect x="476.00" y="29.30" width="28.00" height="29.30" rx="0" fill="#66d24c" /><rect x="476.00" y="87.90" width="28.00" height="29.30" rx="0" fill="#66d24c" /><rect x="476.00" y="146.50" width="28.00" height="29.30" rx="0" fill="#66d24c" /><rect x="476.00" y="205.10" width="28.00" height="29.30" rx="0" fill="#66d24c" /><rect x="476.00" y="263.70" width="28.00" height="29.30" rx="0" fill="#66d24c" /><rect x="476.00" y="322.30" width="28.00" height="29.30" rx="0" fill="#66d24c" /><rect x="504.00" y="0.00" width="28.00" height="29.30" rx="0" fill="#66d24c" /><rect x="504.00" y="58.60" width="28.00" height="29.30" rx="0" fill="#66d24c" /><rect x="504.00" y="117.20" width="28.00" height="29.30" rx="0" fill="#66d24c" /><rect x="504.00" y="175.80" width="28.00" height="29.30" rx="0" fill="#66d24c" /><rect x="504.00" y="234.40" width="28.00" height="29.30" rx="0" fill="#66d24c" /><rect x="504.00" y="293.00" width="28.00" height="29.30" rx="0" fill="#66d24c" /><rect x="532.00" y="29.30" width="28.00" height="29.30" rx="0" fill="#66d24c" /><rect x="532.00" y="87.90" width="28.00" height="29.30" rx="0" fill="#66d24c" /><rect x="532.00" y="146.50" width="28.00" height="29.30" rx="0" fill="#66d24c" /><rect x="532.00" y="205.10" width="28.00" height="29.30" rx="0" fill="#66d24c" /><rect x="532.00" y="263.70" width="28.00" height="29.30" rx="0" fill="#66d24c" /><rect x="532.00" y="322.30" width="28.00" height="29.30" rx="0" fill="#66d24c" /><polygon points="252.4,0.0 307.6,0.0 307.6,70.5 335.7,98.0 335.7,124.0 560.3,124.0 560.3,186.5 335.7,186.5 307.3,214.8 307.3,329.8 252.3,329.8 252.3,218.2 225.7,186.5 0.0,186.5 0.0,124.0 225.0,124.0 225.0,97.5 252.4,70.5" fill="#e0a076" stroke="#46a444" stroke-width="1.6" stroke-dasharray="3 1.5"/><polygon points="252.4,0.0 307.6,0.0 307.6,70.5 335.7,98.0 335.7,124.0 560.3,124.0 560.3,186.5 335.7,186.5 307.3,214.8 307.3,329.8 252.3,329.8 252.3,218.2 225.7,186.5 0.0,186.5 0.0,124.0 225.0,124.0 225.0,97.5 252.4,70.5" fill="#e0a076" /><rect x="0.00" y="116.50" width="225.00" height="3.40" rx="0" fill="#36a452" /><rect x="0.00" y="119.80" width="225.00" height="3.50" rx="0" fill="#46ba5e" /><rect x="0.00" y="123.20" width="225.00" height="2.40" rx="0" fill="#3a9c4a" /><rect x="1.00" y="120.50" width="6.00" height="1.90" rx="0" fill="#6ee27c" /><rect x="7.60" y="123.70" width="1.60" height="1.70" rx="0" fill="#b4543a" /><rect x="10.10" y="120.50" width="6.00" height="1.90" rx="0" fill="#6ee27c" /><rect x="16.70" y="123.70" width="1.60" height="1.70" rx="0" fill="#b4543a" /><rect x="19.20" y="120.50" width="6.00" height="1.90" rx="0" fill="#6ee27c" /><rect x="25.80" y="123.70" width="1.60" height="1.70" rx="0" fill="#b4543a" /><rect x="28.30" y="120.50" width="6.00" height="1.90" rx="0" fill="#6ee27c" /><rect x="34.90" y="123.70" width="1.60" height="1.70" rx="0" fill="#b4543a" /><rect x="37.40" y="120.50" width="6.00" height="1.90" rx="0" fill="#6ee27c" /><rect x="44.00" y="123.70" width="1.60" height="1.70" rx="0" fill="#b4543a" /><rect x="46.50" y="120.50" width="6.00" height="1.90" rx="0" fill="#6ee27c" /><rect x="53.10" y="123.70" width="1.60" height="1.70" rx="0" fill="#b4543a" /><rect x="55.60" y="120.50" width="6.00" height="1.90" rx="0" fill="#6ee27c" /><rect x="62.20" y="123.70" width="1.60" height="1.70" rx="0" fill="#b4543a" /><rect x="64.70" y="120.50" width="6.00" height="1.90" rx="0" fill="#6ee27c" /><rect x="71.30" y="123.70" width="1.60" height="1.70" rx="0" fill="#b4543a" /><rect x="73.80" y="120.50" width="6.00" height="1.90" rx="0" fill="#6ee27c" /><rect x="80.40" y="123.70" width="1.60" height="1.70" rx="0" fill="#b4543a" /><rect x="82.90" y="120.50" width="6.00" height="1.90" rx="0" fill="#6ee27c" /><rect x="89.50" y="123.70" width="1.60" height="1.70" rx="0" fill="#b4543a" /><rect x="92.00" y="120.50" width="6.00" height="1.90" rx="0" fill="#6ee27c" /><rect x="98.60" y="123.70" width="1.60" height="1.70" rx="0" fill="#b4543a" /><rect x="101.10" y="120.50" width="6.00" height="1.90" rx="0" fill="#6ee27c" /><rect x="107.70" y="123.70" width="1.60" height="1.70" rx="0" fill="#b4543a" /><rect x="110.20" y="120.50" width="6.00" height="1.90" rx="0" fill="#6ee27c" /><rect x="116.80" y="123.70" width="1.60" height="1.70" rx="0" fill="#b4543a" /><rect x="119.30" y="120.50" width="6.00" height="1.90" rx="0" fill="#6ee27c" /><rect x="125.90" y="123.70" width="1.60" height="1.70" rx="0" fill="#b4543a" /><rect x="128.40" y="120.50" width="6.00" height="1.90" rx="0" fill="#6ee27c" /><rect x="135.00" y="123.70" width="1.60" height="1.70" rx="0" fill="#b4543a" /><rect x="137.50" y="120.50" width="6.00" height="1.90" rx="0" fill="#6ee27c" /><rect x="144.10" y="123.70" width="1.60" height="1.70" rx="0" fill="#b4543a" /><rect x="146.60" y="120.50" width="6.00" height="1.90" rx="0" fill="#6ee27c" /><rect x="153.20" y="123.70" width="1.60" height="1.70" rx="0" fill="#b4543a" /><rect x="155.70" y="120.50" width="6.00" height="1.90" rx="0" fill="#6ee27c" /><rect x="162.30" y="123.70" width="1.60" height="1.70" rx="0" fill="#b4543a" /><rect x="164.80" y="120.50" width="6.00" height="1.90" rx="0" fill="#6ee27c" /><rect x="171.40" y="123.70" width="1.60" height="1.70" rx="0" fill="#b4543a" /><rect x="173.90" y="120.50" width="6.00" height="1.90" rx="0" fill="#6ee27c" /><rect x="180.50" y="123.70" width="1.60" height="1.70" rx="0" fill="#b4543a" /><rect x="183.00" y="120.50" width="6.00" height="1.90" rx="0" fill="#6ee27c" /><rect x="189.60" y="123.70" width="1.60" height="1.70" rx="0" fill="#b4543a" /><rect x="192.10" y="120.50" width="6.00" height="1.90" rx="0" fill="#6ee27c" /><rect x="198.70" y="123.70" width="1.60" height="1.70" rx="0" fill="#b4543a" /><rect x="201.20" y="120.50" width="6.00" height="1.90" rx="0" fill="#6ee27c" /><rect x="207.80" y="123.70" width="1.60" height="1.70" rx="0" fill="#b4543a" /><rect x="210.30" y="120.50" width="6.00" height="1.90" rx="0" fill="#6ee27c" /><rect x="216.90" y="123.70" width="1.60" height="1.70" rx="0" fill="#b4543a" /><rect x="219.40" y="120.50" width="6.00" height="1.90" rx="0" fill="#6ee27c" /><rect x="226.00" y="123.70" width="1.60" height="1.70" rx="0" fill="#b4543a" /><rect x="336.00" y="116.50" width="224.30" height="3.40" rx="0" fill="#36a452" /><rect x="336.00" y="119.80" width="224.30" height="3.50" rx="0" fill="#46ba5e" /><rect x="336.00" y="123.20" width="224.30" height="2.40" rx="0" fill="#3a9c4a" /><rect x="337.00" y="120.50" width="6.00" height="1.90" rx="0" fill="#6ee27c" /><rect x="343.60" y="123.70" width="1.60" height="1.70" rx="0" fill="#b4543a" /><rect x="346.10" y="120.50" width="6.00" height="1.90" rx="0" fill="#6ee27c" /><rect x="352.70" y="123.70" width="1.60" height="1.70" rx="0" fill="#b4543a" /><rect x="355.20" y="120.50" width="6.00" height="1.90" rx="0" fill="#6ee27c" /><rect x="361.80" y="123.70" width="1.60" height="1.70" rx="0" fill="#b4543a" /><rect x="364.30" y="120.50" width="6.00" height="1.90" rx="0" fill="#6ee27c" /><rect x="370.90" y="123.70" width="1.60" height="1.70" rx="0" fill="#b4543a" /><rect x="373.40" y="120.50" width="6.00" height="1.90" rx="0" fill="#6ee27c" /><rect x="380.00" y="123.70" width="1.60" height="1.70" rx="0" fill="#b4543a" /><rect x="382.50" y="120.50" width="6.00" height="1.90" rx="0" fill="#6ee27c" /><rect x="389.10" y="123.70" width="1.60" height="1.70" rx="0" fill="#b4543a" /><rect x="391.60" y="120.50" width="6.00" height="1.90" rx="0" fill="#6ee27c" /><rect x="398.20" y="123.70" width="1.60" height="1.70" rx="0" fill="#b4543a" /><rect x="400.70" y="120.50" width="6.00" height="1.90" rx="0" fill="#6ee27c" /><rect x="407.30" y="123.70" width="1.60" height="1.70" rx="0" fill="#b4543a" /><rect x="409.80" y="120.50" width="6.00" height="1.90" rx="0" fill="#6ee27c" /><rect x="416.40" y="123.70" width="1.60" height="1.70" rx="0" fill="#b4543a" /><rect x="418.90" y="120.50" width="6.00" height="1.90" rx="0" fill="#6ee27c" /><rect x="425.50" y="123.70" width="1.60" height="1.70" rx="0" fill="#b4543a" /><rect x="428.00" y="120.50" width="6.00" height="1.90" rx="0" fill="#6ee27c" /><rect x="434.60" y="123.70" width="1.60" height="1.70" rx="0" fill="#b4543a" /><rect x="437.10" y="120.50" width="6.00" height="1.90" rx="0" fill="#6ee27c" /><rect x="443.70" y="123.70" width="1.60" height="1.70" rx="0" fill="#b4543a" /><rect x="446.20" y="120.50" width="6.00" height="1.90" rx="0" fill="#6ee27c" /><rect x="452.80" y="123.70" width="1.60" height="1.70" rx="0" fill="#b4543a" /><rect x="455.30" y="120.50" width="6.00" height="1.90" rx="0" fill="#6ee27c" /><rect x="461.90" y="123.70" width="1.60" height="1.70" rx="0" fill="#b4543a" /><rect x="464.40" y="120.50" width="6.00" height="1.90" rx="0" fill="#6ee27c" /><rect x="471.00" y="123.70" width="1.60" height="1.70" rx="0" fill="#b4543a" /><rect x="473.50" y="120.50" width="6.00" height="1.90" rx="0" fill="#6ee27c" /><rect x="480.10" y="123.70" width="1.60" height="1.70" rx="0" fill="#b4543a" /><rect x="482.60" y="120.50" width="6.00" height="1.90" rx="0" fill="#6ee27c" /><rect x="489.20" y="123.70" width="1.60" height="1.70" rx="0" fill="#b4543a" /><rect x="491.70" y="120.50" width="6.00" height="1.90" rx="0" fill="#6ee27c" /><rect x="498.30" y="123.70" width="1.60" height="1.70" rx="0" fill="#b4543a" /><rect x="500.80" y="120.50" width="6.00" height="1.90" rx="0" fill="#6ee27c" /><rect x="507.40" y="123.70" width="1.60" height="1.70" rx="0" fill="#b4543a" /><rect x="509.90" y="120.50" width="6.00" height="1.90" rx="0" fill="#6ee27c" /><rect x="516.50" y="123.70" width="1.60" height="1.70" rx="0" fill="#b4543a" /><rect x="519.00" y="120.50" width="6.00" height="1.90" rx="0" fill="#6ee27c" /><rect x="525.60" y="123.70" width="1.60" height="1.70" rx="0" fill="#b4543a" /><rect x="528.10" y="120.50" width="6.00" height="1.90" rx="0" fill="#6ee27c" /><rect x="534.70" y="123.70" width="1.60" height="1.70" rx="0" fill="#b4543a" /><rect x="537.20" y="120.50" width="6.00" height="1.90" rx="0" fill="#6ee27c" /><rect x="543.80" y="123.70" width="1.60" height="1.70" rx="0" fill="#b4543a" /><rect x="546.30" y="120.50" width="6.00" height="1.90" rx="0" fill="#6ee27c" /><rect x="552.90" y="123.70" width="1.60" height="1.70" rx="0" fill="#b4543a" /><rect x="555.40" y="120.50" width="6.00" height="1.90" rx="0" fill="#6ee27c" /><rect x="562.00" y="123.70" width="1.60" height="1.70" rx="0" fill="#b4543a" /><ellipse cx="73.8" cy="136.5" rx="4.4" ry="2.9" fill="#cc8a66"/><ellipse cx="71.0" cy="146.8" rx="4.4" ry="2.9" fill="#cc8a66"/><ellipse cx="209.9" cy="136.5" rx="4.4" ry="2.9" fill="#cc8a66"/><ellipse cx="207.0" cy="146.8" rx="4.4" ry="2.9" fill="#cc8a66"/><ellipse cx="257.9" cy="64.0" rx="4.4" ry="2.9" fill="#cc8a66"/><ellipse cx="263.0" cy="79.3" rx="4.4" ry="2.9" fill="#cc8a66"/><ellipse cx="291.0" cy="79.3" rx="4.4" ry="2.9" fill="#cc8a66"/><ellipse cx="245.3" cy="106.1" rx="4.4" ry="2.9" fill="#cc8a66"/><ellipse cx="231.0" cy="121.5" rx="4.4" ry="2.9" fill="#cc8a66"/><ellipse cx="245.5" cy="163.5" rx="4.4" ry="2.9" fill="#cc8a66"/><ellipse cx="262.6" cy="165.1" rx="4.4" ry="2.9" fill="#cc8a66"/><ellipse cx="290.0" cy="165.3" rx="4.4" ry="2.9" fill="#cc8a66"/><ellipse cx="231.3" cy="177.5" rx="4.4" ry="2.9" fill="#cc8a66"/><ellipse cx="346.0" cy="136.0" rx="4.4" ry="2.9" fill="#cc8a66"/><ellipse cx="343.0" cy="146.7" rx="4.4" ry="2.9" fill="#cc8a66"/><ellipse cx="537.0" cy="135.8" rx="4.4" ry="2.9" fill="#cc8a66"/><ellipse cx="534.7" cy="146.8" rx="4.4" ry="2.9" fill="#cc8a66"/><ellipse cx="67.0" cy="166.5" rx="3.6" ry="2.7" fill="#f0b898"/><ellipse cx="95.0" cy="166.5" rx="3.6" ry="2.7" fill="#f0b898"/><ellipse cx="81.5" cy="174.8" rx="3.6" ry="2.7" fill="#f0b898"/><ellipse cx="108.0" cy="174.8" rx="3.6" ry="2.7" fill="#f0b898"/><ellipse cx="149.6" cy="165.9" rx="3.6" ry="2.7" fill="#f0b898"/><ellipse cx="163.0" cy="174.8" rx="3.6" ry="2.7" fill="#f0b898"/><ellipse cx="204.0" cy="166.5" rx="3.6" ry="2.7" fill="#f0b898"/><ellipse cx="217.3" cy="174.8" rx="3.6" ry="2.7" fill="#f0b898"/><ellipse cx="241.4" cy="172.4" rx="3.6" ry="2.7" fill="#f0b898"/><ellipse cx="241.6" cy="114.7" rx="3.6" ry="2.7" fill="#f0b898"/><ellipse cx="320.0" cy="114.7" rx="3.6" ry="2.7" fill="#f0b898"/><ellipse cx="366.5" cy="166.5" rx="3.6" ry="2.7" fill="#f0b898"/><ellipse cx="394.8" cy="166.5" rx="3.6" ry="2.7" fill="#f0b898"/><ellipse cx="381.5" cy="174.8" rx="3.6" ry="2.7" fill="#f0b898"/><ellipse cx="409.0" cy="175.5" rx="3.6" ry="2.7" fill="#f0b898"/><ellipse cx="395.5" cy="137.5" rx="3.6" ry="2.7" fill="#f0b898"/><ellipse cx="408.0" cy="146.8" rx="3.6" ry="2.7" fill="#f0b898"/><ellipse cx="504.0" cy="137.5" rx="3.6" ry="2.7" fill="#f0b898"/><ellipse cx="518.0" cy="146.8" rx="3.6" ry="2.7" fill="#f0b898"/><ellipse cx="558.0" cy="166.5" rx="3.6" ry="2.7" fill="#f0b898"/><polygon points="362.4,0.0 362.4,13.8 389.2,42.1 560.3,42.1 560.3,0.0" fill="#10a0dc" stroke="#3fae4a" stroke-width="1.4" /><polygon points="364.0,0.0 364.0,13.1 390.0,40.5 560.3,40.5 560.3,0.0" fill="#10a0dc" /><ellipse cx="405.0" cy="40.1" rx="6" ry="2.6" fill="#2a78d2"/><ellipse cx="432.3" cy="40.1" rx="6" ry="2.6" fill="#2a78d2"/><ellipse cx="459.6" cy="40.1" rx="6" ry="2.6" fill="#2a78d2"/><ellipse cx="486.9" cy="40.1" rx="6" ry="2.6" fill="#2a78d2"/><ellipse cx="514.2" cy="40.1" rx="6" ry="2.6" fill="#2a78d2"/><ellipse cx="541.5" cy="40.1" rx="6" ry="2.6" fill="#2a78d2"/><ellipse cx="568.8" cy="40.1" rx="6" ry="2.6" fill="#2a78d2"/><ellipse cx="418.6" cy="40.9" rx="3.6" ry="1.6" fill="#2a78d2"/><ellipse cx="445.9" cy="40.9" rx="3.6" ry="1.6" fill="#2a78d2"/><ellipse cx="473.2" cy="40.9" rx="3.6" ry="1.6" fill="#2a78d2"/><ellipse cx="500.5" cy="40.9" rx="3.6" ry="1.6" fill="#2a78d2"/><ellipse cx="527.8" cy="40.9" rx="3.6" ry="1.6" fill="#2a78d2"/><ellipse cx="555.1" cy="40.9" rx="3.6" ry="1.6" fill="#2a78d2"/><ellipse cx="365" cy="5.5" rx="2.6" ry="3" fill="#2a78d2"/><ellipse cx="366" cy="12.5" rx="2.6" ry="3" fill="#2a78d2"/><ellipse cx="372" cy="21.5" rx="2.6" ry="3" fill="#2a78d2"/><ellipse cx="379" cy="28.5" rx="2.6" ry="3" fill="#2a78d2"/><ellipse cx="386" cy="35.5" rx="2.6" ry="3" fill="#2a78d2"/><rect x="0.00" y="108.60" width="211.60" height="8.00" rx="0" fill="#b65a3c" /><rect x="0.00" y="109.50" width="211.60" height="3.00" rx="0" fill="#fcdcc6" /><rect x="0.00" y="112.50" width="211.60" height="2.20" rx="0" fill="#e8946a" /><polygon points="15.8,109.1 17.7,105.1 19.7,102.8 22.1,102.8 24.1,105.1 26.0,109.1 26.0,119.8 15.8,119.8" fill="#8e3c2c" /><polygon points="17.6,109.3 19.1,105.7 20.9,104.2 22.7,105.7 24.2,109.3 24.2,119.8 17.6,119.8" fill="#d66e4a" /><rect x="19.10" y="106.10" width="3.60" height="7.60" rx="1" fill="#f9ccb0" /><rect x="19.30" y="113.70" width="3.20" height="6.10" rx="0" fill="#e48660" /><ellipse cx="20.9" cy="122.9" rx="5.2" ry="3.4" fill="#2f9a4a"/><ellipse cx="20.9" cy="123.1" rx="3.8" ry="2.3" fill="#4cd06a"/><polygon points="43.1,109.1 45.0,105.1 47.0,102.8 49.4,102.8 51.4,105.1 53.3,109.1 53.3,119.8 43.1,119.8" fill="#8e3c2c" /><polygon points="44.9,109.3 46.4,105.7 48.2,104.2 50.0,105.7 51.5,109.3 51.5,119.8 44.9,119.8" fill="#d66e4a" /><rect x="46.39" y="106.10" width="3.60" height="7.60" rx="1" fill="#f9ccb0" /><rect x="46.59" y="113.70" width="3.20" height="6.10" rx="0" fill="#e48660" /><ellipse cx="48.2" cy="122.9" rx="5.2" ry="3.4" fill="#2f9a4a"/><ellipse cx="48.2" cy="123.1" rx="3.8" ry="2.3" fill="#4cd06a"/><polygon points="70.4,109.1 72.3,105.1 74.3,102.8 76.7,102.8 78.7,105.1 80.6,109.1 80.6,119.8 70.4,119.8" fill="#8e3c2c" /><polygon points="72.2,109.3 73.7,105.7 75.5,104.2 77.3,105.7 78.8,109.3 78.8,119.8 72.2,119.8" fill="#d66e4a" /><rect x="73.68" y="106.10" width="3.60" height="7.60" rx="1" fill="#f9ccb0" /><rect x="73.88" y="113.70" width="3.20" height="6.10" rx="0" fill="#e48660" /><ellipse cx="75.5" cy="122.9" rx="5.2" ry="3.4" fill="#2f9a4a"/><ellipse cx="75.5" cy="123.1" rx="3.8" ry="2.3" fill="#4cd06a"/><polygon points="97.7,109.1 99.6,105.1 101.6,102.8 104.0,102.8 106.0,105.1 107.9,109.1 107.9,119.8 97.7,119.8" fill="#8e3c2c" /><polygon points="99.5,109.3 101.0,105.7 102.8,104.2 104.6,105.7 106.1,109.3 106.1,119.8 99.5,119.8" fill="#d66e4a" /><rect x="100.97" y="106.10" width="3.60" height="7.60" rx="1" fill="#f9ccb0" /><rect x="101.17" y="113.70" width="3.20" height="6.10" rx="0" fill="#e48660" /><ellipse cx="102.8" cy="122.9" rx="5.2" ry="3.4" fill="#2f9a4a"/><ellipse cx="102.8" cy="123.1" rx="3.8" ry="2.3" fill="#4cd06a"/><polygon points="125.0,109.1 126.9,105.1 128.9,102.8 131.3,102.8 133.3,105.1 135.2,109.1 135.2,119.8 125.0,119.8" fill="#8e3c2c" /><polygon points="126.8,109.3 128.3,105.7 130.1,104.2 131.9,105.7 133.4,109.3 133.4,119.8 126.8,119.8" fill="#d66e4a" /><rect x="128.26" y="106.10" width="3.60" height="7.60" rx="1" fill="#f9ccb0" /><rect x="128.46" y="113.70" width="3.20" height="6.10" rx="0" fill="#e48660" /><ellipse cx="130.1" cy="122.9" rx="5.2" ry="3.4" fill="#2f9a4a"/><ellipse cx="130.1" cy="123.1" rx="3.8" ry="2.3" fill="#4cd06a"/><polygon points="152.2,109.1 154.1,105.1 156.1,102.8 158.5,102.8 160.5,105.1 162.4,109.1 162.4,119.8 152.2,119.8" fill="#8e3c2c" /><polygon points="154.0,109.3 155.5,105.7 157.3,104.2 159.1,105.7 160.6,109.3 160.6,119.8 154.0,119.8" fill="#d66e4a" /><rect x="155.55" y="106.10" width="3.60" height="7.60" rx="1" fill="#f9ccb0" /><rect x="155.75" y="113.70" width="3.20" height="6.10" rx="0" fill="#e48660" /><ellipse cx="157.3" cy="122.9" rx="5.2" ry="3.4" fill="#2f9a4a"/><ellipse cx="157.3" cy="123.1" rx="3.8" ry="2.3" fill="#4cd06a"/><polygon points="179.5,109.1 181.4,105.1 183.4,102.8 185.8,102.8 187.8,105.1 189.7,109.1 189.7,119.8 179.5,119.8" fill="#8e3c2c" /><polygon points="181.3,109.3 182.8,105.7 184.6,104.2 186.4,105.7 187.9,109.3 187.9,119.8 181.3,119.8" fill="#d66e4a" /><rect x="182.84" y="106.10" width="3.60" height="7.60" rx="1" fill="#f9ccb0" /><rect x="183.04" y="113.70" width="3.20" height="6.10" rx="0" fill="#e48660" /><ellipse cx="184.6" cy="122.9" rx="5.2" ry="3.4" fill="#2f9a4a"/><ellipse cx="184.6" cy="123.1" rx="3.8" ry="2.3" fill="#4cd06a"/><polygon points="206.8,109.1 208.7,105.1 210.7,102.8 213.1,102.8 215.1,105.1 217.0,109.1 217.0,119.8 206.8,119.8" fill="#8e3c2c" /><polygon points="208.6,109.3 210.1,105.7 211.9,104.2 213.7,105.7 215.2,109.3 215.2,119.8 208.6,119.8" fill="#d66e4a" /><rect x="210.13" y="106.10" width="3.60" height="7.60" rx="1" fill="#f9ccb0" /><rect x="210.33" y="113.70" width="3.20" height="6.10" rx="0" fill="#e48660" /><ellipse cx="211.9" cy="122.9" rx="5.2" ry="3.4" fill="#2f9a4a"/><ellipse cx="211.9" cy="123.1" rx="3.8" ry="2.3" fill="#4cd06a"/><rect x="402.50" y="108.60" width="81.70" height="8.00" rx="0" fill="#b65a3c" /><rect x="402.50" y="109.50" width="81.70" height="3.00" rx="0" fill="#fcdcc6" /><rect x="402.50" y="112.50" width="81.70" height="2.20" rx="0" fill="#e8946a" /><polygon points="397.6,109.1 399.5,105.1 401.5,102.8 403.9,102.8 405.9,105.1 407.8,109.1 407.8,119.8 397.6,119.8" fill="#8e3c2c" /><polygon points="399.4,109.3 400.9,105.7 402.7,104.2 404.5,105.7 406.0,109.3 406.0,119.8 399.4,119.8" fill="#d66e4a" /><rect x="400.90" y="106.10" width="3.60" height="7.60" rx="1" fill="#f9ccb0" /><rect x="401.10" y="113.70" width="3.20" height="6.10" rx="0" fill="#e48660" /><ellipse cx="402.7" cy="122.9" rx="5.2" ry="3.4" fill="#2f9a4a"/><ellipse cx="402.7" cy="123.1" rx="3.8" ry="2.3" fill="#4cd06a"/><polygon points="424.9,109.1 426.8,105.1 428.8,102.8 431.2,102.8 433.2,105.1 435.1,109.1 435.1,119.8 424.9,119.8" fill="#8e3c2c" /><polygon points="426.7,109.3 428.2,105.7 430.0,104.2 431.8,105.7 433.3,109.3 433.3,119.8 426.7,119.8" fill="#d66e4a" /><rect x="428.17" y="106.10" width="3.60" height="7.60" rx="1" fill="#f9ccb0" /><rect x="428.37" y="113.70" width="3.20" height="6.10" rx="0" fill="#e48660" /><ellipse cx="430.0" cy="122.9" rx="5.2" ry="3.4" fill="#2f9a4a"/><ellipse cx="430.0" cy="123.1" rx="3.8" ry="2.3" fill="#4cd06a"/><polygon points="452.1,109.1 454.0,105.1 456.0,102.8 458.4,102.8 460.4,105.1 462.3,109.1 462.3,119.8 452.1,119.8" fill="#8e3c2c" /><polygon points="453.9,109.3 455.4,105.7 457.2,104.2 459.0,105.7 460.5,109.3 460.5,119.8 453.9,119.8" fill="#d66e4a" /><rect x="455.44" y="106.10" width="3.60" height="7.60" rx="1" fill="#f9ccb0" /><rect x="455.64" y="113.70" width="3.20" height="6.10" rx="0" fill="#e48660" /><ellipse cx="457.2" cy="122.9" rx="5.2" ry="3.4" fill="#2f9a4a"/><ellipse cx="457.2" cy="123.1" rx="3.8" ry="2.3" fill="#4cd06a"/><polygon points="479.4,109.1 481.3,105.1 483.3,102.8 485.7,102.8 487.7,105.1 489.6,109.1 489.6,119.8 479.4,119.8" fill="#8e3c2c" /><polygon points="481.2,109.3 482.7,105.7 484.5,104.2 486.3,105.7 487.8,109.3 487.8,119.8 481.2,119.8" fill="#d66e4a" /><rect x="482.71" y="106.10" width="3.60" height="7.60" rx="1" fill="#f9ccb0" /><rect x="482.91" y="113.70" width="3.20" height="6.10" rx="0" fill="#e48660" /><ellipse cx="484.5" cy="122.9" rx="5.2" ry="3.4" fill="#2f9a4a"/><ellipse cx="484.5" cy="123.1" rx="3.8" ry="2.3" fill="#4cd06a"/><polygon points="506.7,109.1 508.6,105.1 510.6,102.8 513.0,102.8 515.0,105.1 516.9,109.1 516.9,119.8 506.7,119.8" fill="#8e3c2c" /><polygon points="508.5,109.3 510.0,105.7 511.8,104.2 513.6,105.7 515.1,109.3 515.1,119.8 508.5,119.8" fill="#d66e4a" /><rect x="509.98" y="106.10" width="3.60" height="7.60" rx="1" fill="#f9ccb0" /><rect x="510.18" y="113.70" width="3.20" height="6.10" rx="0" fill="#e48660" /><ellipse cx="511.8" cy="122.9" rx="5.2" ry="3.4" fill="#2f9a4a"/><ellipse cx="511.8" cy="123.1" rx="3.8" ry="2.3" fill="#4cd06a"/><rect x="234.40" y="47.50" width="9.20" height="17.00" rx="3" fill="#c85c30" /><rect x="234.40" y="47.50" width="9.20" height="6.00" rx="3" fill="#e88a54" /><rect x="236.00" y="48.50" width="6.00" height="2.60" rx="1.3" fill="#f4b088" /><rect x="234.40" y="-4.50" width="9.20" height="11.50" rx="3" fill="#c85c30" /><rect x="234.40" y="-4.50" width="9.20" height="6.00" rx="3" fill="#e88a54" /><rect x="236.00" y="-3.50" width="6.00" height="2.60" rx="1.3" fill="#f4b088" /><rect x="316.40" y="-4.50" width="9.20" height="12.50" rx="3" fill="#c85c30" /><rect x="316.40" y="-4.50" width="9.20" height="6.00" rx="3" fill="#e88a54" /><rect x="318.00" y="-3.50" width="6.00" height="2.60" rx="1.3" fill="#f4b088" /><circle cx="177.00" cy="81.20" r="4.6" fill="#f4f4e8" /><circle cx="177.00" cy="81.20" r="2.4" fill="#f0a020" /><circle cx="189.40" cy="90.90" r="3.4" fill="#f4f4e8" /><circle cx="189.40" cy="90.50" r="1.7" fill="#f0b030" /><rect x="40.00" y="195.50" width="3.00" height="5.00" rx="0" fill="#b8f098" /><rect x="43.00" y="197.50" width="2.50" height="4.00" rx="0" fill="#4cb048" /><rect x="48.00" y="198.50" width="5.00" height="2.40" rx="0" fill="#b8f098" /><rect x="52.00" y="199.50" width="3.00" height="2.00" rx="0" fill="#4cb048" /><rect x="150.00" y="195.50" width="3.00" height="5.00" rx="0" fill="#b8f098" /><rect x="153.00" y="197.50" width="2.50" height="4.00" rx="0" fill="#4cb048" /><rect x="158.00" y="198.50" width="5.00" height="2.40" rx="0" fill="#b8f098" /><rect x="162.00" y="199.50" width="3.00" height="2.00" rx="0" fill="#4cb048" /><rect x="423.00" y="196.50" width="3.00" height="5.00" rx="0" fill="#b8f098" /><rect x="426.00" y="198.50" width="2.50" height="4.00" rx="0" fill="#4cb048" /><rect x="431.00" y="199.50" width="5.00" height="2.40" rx="0" fill="#b8f098" /><rect x="435.00" y="200.50" width="3.00" height="2.00" rx="0" fill="#4cb048" /><path d="M370.7 194.0L379.7 204.0 M380.7 194.0L371.7 204.0" stroke="#a8ec88" stroke-width="2.2"/><path d="M398.0 194.0L407.0 204.0 M408.0 194.0L399.0 204.0" stroke="#a8ec88" stroke-width="2.2"/><rect x="254.00" y="92.00" width="52.00" height="35.00" rx="1" fill="#7c88a8" /><rect x="254.00" y="92.00" width="52.00" height="5.00" rx="0" fill="#aab6cc" /><rect x="254.00" y="92.00" width="5.00" height="30.00" rx="0" fill="#aab6cc" /><rect x="301.00" y="92.00" width="5.00" height="30.00" rx="0" fill="#d8e0ee" /><rect x="259.00" y="96.50" width="42.00" height="14.00" rx="0" fill="#7c88a8" /><rect x="259.00" y="107.50" width="42.00" height="6.00" rx="0" fill="#586284" /><rect x="254.00" y="118.50" width="52.00" height="8.50" rx="0" fill="#586284" /><rect x="254.00" y="124.50" width="52.00" height="2.50" rx="0" fill="#3e4666" /><rect x="265.00" y="114.00" width="30.00" height="7.00" rx="0" fill="#d8e0ee" /><rect x="268.00" y="116.00" width="24.00" height="3.00" rx="0" fill="#586284" /><rect x="270.00" y="116.00" width="1.40" height="3.00" rx="0" fill="#d8e0ee" /><rect x="274.60" y="116.00" width="1.40" height="3.00" rx="0" fill="#d8e0ee" /><rect x="279.20" y="116.00" width="1.40" height="3.00" rx="0" fill="#d8e0ee" /><rect x="283.80" y="116.00" width="1.40" height="3.00" rx="0" fill="#d8e0ee" /><rect x="288.40" y="116.00" width="1.40" height="3.00" rx="0" fill="#d8e0ee" /><rect x="263.50" y="85.50" width="33.00" height="16.00" rx="1" fill="#aab6cc" /><rect x="267.00" y="88.50" width="26.00" height="13.00" rx="0" fill="#7c88a8" /><rect x="263.50" y="85.50" width="4.00" height="16.00" rx="0" fill="#d8e0ee" /><rect x="292.50" y="85.50" width="4.00" height="16.00" rx="0" fill="#d8e0ee" /><rect x="271.00" y="59.50" width="17.50" height="36.00" rx="0" fill="#586284" /><rect x="271.00" y="59.50" width="4.00" height="36.00" rx="0" fill="#aab6cc" /><rect x="284.50" y="59.50" width="4.00" height="36.00" rx="0" fill="#aab6cc" /><rect x="275.00" y="78.50" width="9.50" height="17.00" rx="0" fill="#3e4666" /><rect x="271.00" y="61.50" width="17.50" height="14.00" rx="0" fill="#aab6cc" /><rect x="273.00" y="71.50" width="13.50" height="5.00" rx="0" fill="#7c88a8" /><rect x="276.00" y="57.50" width="8.00" height="6.00" rx="0" fill="#d8e0ee" /><rect x="271.00" y="34.00" width="18.00" height="21.50" rx="2" fill="#aab6cc" /><rect x="271.00" y="34.00" width="4.00" height="6.00" rx="0" fill="#d8e0ee" /><rect x="278.00" y="34.00" width="4.00" height="5.00" rx="0" fill="#d8e0ee" /><rect x="285.00" y="34.00" width="4.00" height="6.00" rx="0" fill="#d8e0ee" /><rect x="275.00" y="37.50" width="3.00" height="2.40" rx="0" fill="#7c88a8" /><rect x="282.00" y="37.50" width="3.00" height="2.40" rx="0" fill="#7c88a8" /><rect x="276.50" y="43.50" width="1.80" height="4.40" rx="0" fill="#3e4666" /><rect x="282.70" y="43.50" width="1.80" height="4.40" rx="0" fill="#3e4666" /><rect x="271.00" y="51.50" width="18.00" height="4.00" rx="0" fill="#7c88a8" /><rect x="289.00" y="34.50" width="6.50" height="20.00" rx="2" fill="#aab6cc" /><rect x="290.00" y="30.50" width="5.00" height="9.00" rx="2" fill="#d8e0ee" /><rect x="289.00" y="46.50" width="8.00" height="4.00" rx="0" fill="#7c88a8" /><rect x="266.00" y="49.50" width="6.00" height="5.00" rx="2" fill="#d8e0ee" /><rect x="268.00" y="52.50" width="5.00" height="5.00" rx="0" fill="#aab6cc" /><circle cx="267.00" cy="57.50" r="2.6" fill="#e8b898" /><circle cx="294.00" cy="57.50" r="2.6" fill="#e8b898" /><rect x="367.50" y="102.50" width="9.10" height="2.15" fill="#1c1418"/><rect x="365.75" y="104.30" width="2.10" height="2.15" fill="#1c1418"/><rect x="367.50" y="104.30" width="2.10" height="2.15" fill="#e07820"/><rect x="369.25" y="104.30" width="5.60" height="2.15" fill="#f0902c"/><rect x="374.50" y="104.30" width="2.10" height="2.15" fill="#e07820"/><rect x="376.25" y="104.30" width="2.10" height="2.15" fill="#1c1418"/><rect x="365.75" y="106.10" width="2.10" height="2.15" fill="#1c1418"/><rect x="367.50" y="106.10" width="2.10" height="2.15" fill="#f0902c"/><rect x="369.25" y="106.10" width="2.10" height="2.15" fill="#f8b060"/><rect x="371.00" y="106.10" width="2.10" height="2.15" fill="#f0902c"/><rect x="372.75" y="106.10" width="3.85" height="2.15" fill="#e07820"/><rect x="376.25" y="106.10" width="10.85" height="2.15" fill="#1c1418"/><rect x="365.75" y="107.90" width="2.10" height="2.15" fill="#1c1418"/><rect x="367.50" y="107.90" width="2.10" height="2.15" fill="#e07820"/><rect x="369.25" y="107.90" width="2.10" height="2.15" fill="#f0902c"/><rect x="371.00" y="107.90" width="3.85" height="2.15" fill="#e07820"/><rect x="374.50" y="107.90" width="2.10" height="2.15" fill="#c4662a"/><rect x="376.25" y="107.90" width="2.10" height="2.15" fill="#e07820"/><rect x="378.00" y="107.90" width="2.10" height="2.15" fill="#f0902c"/><rect x="379.75" y="107.90" width="3.85" height="2.15" fill="#f8b060"/><rect x="383.25" y="107.90" width="2.10" height="2.15" fill="#f0902c"/><rect x="385.00" y="107.90" width="2.10" height="2.15" fill="#e07820"/><rect x="386.75" y="107.90" width="2.10" height="2.15" fill="#1c1418"/><rect x="364.00" y="109.70" width="2.10" height="2.15" fill="#1c1418"/><rect x="365.75" y="109.70" width="3.85" height="2.15" fill="#c4662a"/><rect x="369.25" y="109.70" width="3.85" height="2.15" fill="#e07820"/><rect x="372.75" y="109.70" width="2.10" height="2.15" fill="#c4662a"/><rect x="374.50" y="109.70" width="2.10" height="2.15" fill="#e07820"/><rect x="376.25" y="109.70" width="10.85" height="2.15" fill="#f0902c"/><rect x="386.75" y="109.70" width="2.10" height="2.15" fill="#e07820"/><rect x="388.50" y="109.70" width="2.10" height="2.15" fill="#1c1418"/><rect x="364.00" y="111.50" width="2.10" height="2.15" fill="#1c1418"/><rect x="365.75" y="111.50" width="5.60" height="2.15" fill="#c4662a"/><rect x="371.00" y="111.50" width="2.10" height="2.15" fill="#a04c2c"/><rect x="372.75" y="111.50" width="3.85" height="2.15" fill="#e07820"/><rect x="376.25" y="111.50" width="2.10" height="2.15" fill="#f0902c"/><rect x="378.00" y="111.50" width="9.10" height="2.15" fill="#e07820"/><rect x="386.75" y="111.50" width="2.10" height="2.15" fill="#f0902c"/><rect x="388.50" y="111.50" width="2.10" height="2.15" fill="#e07820"/><rect x="364.00" y="113.30" width="2.10" height="2.15" fill="#1c1418"/><rect x="365.75" y="113.30" width="5.60" height="2.15" fill="#c4662a"/><rect x="371.00" y="113.30" width="2.10" height="2.15" fill="#a04c2c"/><rect x="372.75" y="113.30" width="17.85" height="2.15" fill="#e07820"/><rect x="364.00" y="115.10" width="2.10" height="2.15" fill="#1c1418"/><rect x="365.75" y="115.10" width="5.60" height="2.15" fill="#c4662a"/><rect x="371.00" y="115.10" width="2.10" height="2.15" fill="#a04c2c"/><rect x="372.75" y="115.10" width="2.10" height="2.15" fill="#e07820"/><rect x="374.50" y="115.10" width="2.10" height="2.15" fill="#f8b060"/><rect x="376.25" y="115.10" width="2.10" height="2.15" fill="#e07820"/><rect x="378.00" y="115.10" width="2.10" height="2.15" fill="#f0902c"/><rect x="379.75" y="115.10" width="2.10" height="2.15" fill="#e07820"/><rect x="381.50" y="115.10" width="2.10" height="2.15" fill="#f8b060"/><rect x="383.25" y="115.10" width="2.10" height="2.15" fill="#e07820"/><rect x="385.00" y="115.10" width="2.10" height="2.15" fill="#f0902c"/><rect x="386.75" y="115.10" width="3.85" height="2.15" fill="#e07820"/><rect x="365.75" y="116.90" width="2.10" height="2.15" fill="#1c1418"/><rect x="367.50" y="116.90" width="3.85" height="2.15" fill="#c4662a"/><rect x="371.00" y="116.90" width="2.10" height="2.15" fill="#a04c2c"/><rect x="372.75" y="116.90" width="2.10" height="2.15" fill="#e07820"/><rect x="374.50" y="116.90" width="2.10" height="2.15" fill="#a04c2c"/><rect x="376.25" y="116.90" width="2.10" height="2.15" fill="#e07820"/><rect x="378.00" y="116.90" width="2.10" height="2.15" fill="#a04c2c"/><rect x="379.75" y="116.90" width="2.10" height="2.15" fill="#e07820"/><rect x="381.50" y="116.90" width="2.10" height="2.15" fill="#a04c2c"/><rect x="383.25" y="116.90" width="2.10" height="2.15" fill="#e07820"/><rect x="385.00" y="116.90" width="2.10" height="2.15" fill="#a04c2c"/><rect x="386.75" y="116.90" width="2.10" height="2.15" fill="#e07820"/><rect x="388.50" y="116.90" width="2.10" height="2.15" fill="#c4662a"/><rect x="365.75" y="118.70" width="2.10" height="2.15" fill="#1c1418"/><rect x="367.50" y="118.70" width="3.85" height="2.15" fill="#c4662a"/><rect x="371.00" y="118.70" width="3.85" height="2.15" fill="#a04c2c"/><rect x="374.50" y="118.70" width="2.10" height="2.15" fill="#c4662a"/><rect x="376.25" y="118.70" width="2.10" height="2.15" fill="#f2c8a0"/><rect x="378.00" y="118.70" width="2.10" height="2.15" fill="#c4662a"/><rect x="379.75" y="118.70" width="2.10" height="2.15" fill="#f2c8a0"/><rect x="381.50" y="118.70" width="2.10" height="2.15" fill="#c4662a"/><rect x="383.25" y="118.70" width="2.10" height="2.15" fill="#f2c8a0"/><rect x="385.00" y="118.70" width="2.10" height="2.15" fill="#c4662a"/><rect x="386.75" y="118.70" width="2.10" height="2.15" fill="#f2c8a0"/><rect x="388.50" y="118.70" width="2.10" height="2.15" fill="#c4662a"/><rect x="367.50" y="120.50" width="2.10" height="2.15" fill="#1c1418"/><rect x="369.25" y="120.50" width="2.10" height="2.15" fill="#c4662a"/><rect x="371.00" y="120.50" width="3.85" height="2.15" fill="#a04c2c"/><rect x="374.50" y="120.50" width="14.35" height="2.15" fill="#f2c8a0"/><rect x="388.50" y="120.50" width="2.10" height="2.15" fill="#1c1418"/><rect x="369.25" y="122.30" width="2.10" height="2.15" fill="#1c1418"/><rect x="371.00" y="122.30" width="2.10" height="2.15" fill="#a04c2c"/><rect x="372.75" y="122.30" width="5.60" height="2.15" fill="#f2c8a0"/><rect x="378.00" y="122.30" width="2.10" height="2.15" fill="#1e1418"/><rect x="379.75" y="122.30" width="3.85" height="2.15" fill="#f2c8a0"/><rect x="383.25" y="122.30" width="2.10" height="2.15" fill="#1e1418"/><rect x="385.00" y="122.30" width="2.10" height="2.15" fill="#f2c8a0"/><rect x="386.75" y="122.30" width="2.10" height="2.15" fill="#d8a684"/><rect x="388.50" y="122.30" width="2.10" height="2.15" fill="#1c1418"/><rect x="371.00" y="124.10" width="2.10" height="2.15" fill="#1c1418"/><rect x="372.75" y="124.10" width="5.60" height="2.15" fill="#f2c8a0"/><rect x="378.00" y="124.10" width="2.10" height="2.15" fill="#1e1418"/><rect x="379.75" y="124.10" width="3.85" height="2.15" fill="#f2c8a0"/><rect x="383.25" y="124.10" width="2.10" height="2.15" fill="#1e1418"/><rect x="385.00" y="124.10" width="2.10" height="2.15" fill="#f2c8a0"/><rect x="386.75" y="124.10" width="2.10" height="2.15" fill="#d8a684"/><rect x="388.50" y="124.10" width="2.10" height="2.15" fill="#1c1418"/><rect x="371.00" y="125.90" width="2.10" height="2.15" fill="#1c1418"/><rect x="372.75" y="125.90" width="3.85" height="2.15" fill="#f2c8a0"/><rect x="376.25" y="125.90" width="2.10" height="2.15" fill="#f0a098"/><rect x="378.00" y="125.90" width="5.60" height="2.15" fill="#f2c8a0"/><rect x="383.25" y="125.90" width="3.85" height="2.15" fill="#f0a098"/><rect x="386.75" y="125.90" width="2.10" height="2.15" fill="#d8a684"/><rect x="388.50" y="125.90" width="2.10" height="2.15" fill="#1c1418"/><rect x="372.75" y="127.70" width="2.10" height="2.15" fill="#1c1418"/><rect x="374.50" y="127.70" width="2.10" height="2.15" fill="#d8a684"/><rect x="376.25" y="127.70" width="9.10" height="2.15" fill="#f2c8a0"/><rect x="385.00" y="127.70" width="2.10" height="2.15" fill="#d8a684"/><rect x="386.75" y="127.70" width="2.10" height="2.15" fill="#1c1418"/><rect x="372.75" y="129.50" width="2.10" height="2.15" fill="#1c1418"/><rect x="374.50" y="129.50" width="10.85" height="2.15" fill="#c02848"/><rect x="385.00" y="129.50" width="2.10" height="2.15" fill="#5a2838"/><rect x="386.75" y="129.50" width="2.10" height="2.15" fill="#1c1418"/><rect x="372.75" y="131.30" width="2.10" height="2.15" fill="#1c1418"/><rect x="374.50" y="131.30" width="2.10" height="2.15" fill="#3c4c78"/><rect x="376.25" y="131.30" width="7.35" height="2.15" fill="#c02848"/><rect x="383.25" y="131.30" width="2.10" height="2.15" fill="#3c4c78"/><rect x="385.00" y="131.30" width="2.10" height="2.15" fill="#f2c8a0"/><rect x="386.75" y="131.30" width="2.10" height="2.15" fill="#1c1418"/><rect x="372.75" y="133.10" width="2.10" height="2.15" fill="#1c1418"/><rect x="374.50" y="133.10" width="10.85" height="2.15" fill="#3c4c78"/><rect x="385.00" y="133.10" width="2.10" height="2.15" fill="#f2c8a0"/><rect x="386.75" y="133.10" width="2.10" height="2.15" fill="#1c1418"/><rect x="372.75" y="134.90" width="2.10" height="2.15" fill="#1c1418"/><rect x="374.50" y="134.90" width="2.10" height="2.15" fill="#283050"/><rect x="376.25" y="134.90" width="2.10" height="2.15" fill="#3c4c78"/><rect x="378.00" y="134.90" width="3.85" height="2.15" fill="#283050"/><rect x="381.50" y="134.90" width="2.10" height="2.15" fill="#3c4c78"/><rect x="383.25" y="134.90" width="2.10" height="2.15" fill="#283050"/><rect x="385.00" y="134.90" width="2.10" height="2.15" fill="#1c1418"/><rect x="374.50" y="136.70" width="2.10" height="2.15" fill="#5a2838"/><rect x="383.25" y="136.70" width="2.10" height="2.15" fill="#5a2838"/><rect x="313.75" y="143.50" width="3.45" height="2.01" fill="#1c1418"/><rect x="318.40" y="143.50" width="3.45" height="2.01" fill="#1c1418"/><rect x="312.20" y="145.16" width="1.90" height="2.01" fill="#1c1418"/><rect x="313.75" y="145.16" width="1.90" height="2.01" fill="#6a2a2c"/><rect x="315.30" y="145.16" width="1.90" height="2.01" fill="#8a3c34"/><rect x="316.85" y="145.16" width="1.90" height="2.01" fill="#1c1418"/><rect x="318.40" y="145.16" width="1.90" height="2.01" fill="#8a3c34"/><rect x="319.95" y="145.16" width="1.90" height="2.01" fill="#6a2a2c"/><rect x="321.50" y="145.16" width="1.90" height="2.01" fill="#1c1418"/><rect x="309.10" y="146.82" width="5.00" height="2.01" fill="#1c1418"/><rect x="313.75" y="146.82" width="1.90" height="2.01" fill="#8a3c34"/><rect x="315.30" y="146.82" width="1.90" height="2.01" fill="#b0544a"/><rect x="316.85" y="146.82" width="5.00" height="2.01" fill="#8a3c34"/><rect x="321.50" y="146.82" width="3.45" height="2.01" fill="#1c1418"/><rect x="307.55" y="148.48" width="1.90" height="2.01" fill="#1c1418"/><rect x="309.10" y="148.48" width="1.90" height="2.01" fill="#6a2a2c"/><rect x="310.65" y="148.48" width="5.00" height="2.01" fill="#8a3c34"/><rect x="315.30" y="148.48" width="3.45" height="2.01" fill="#b0544a"/><rect x="318.40" y="148.48" width="5.00" height="2.01" fill="#8a3c34"/><rect x="323.05" y="148.48" width="1.90" height="2.01" fill="#6a2a2c"/><rect x="324.60" y="148.48" width="1.90" height="2.01" fill="#1c1418"/><rect x="307.55" y="150.14" width="1.90" height="2.01" fill="#1c1418"/><rect x="309.10" y="150.14" width="1.90" height="2.01" fill="#6a2a2c"/><rect x="310.65" y="150.14" width="12.75" height="2.01" fill="#8a3c34"/><rect x="323.05" y="150.14" width="1.90" height="2.01" fill="#6a2a2c"/><rect x="324.60" y="150.14" width="1.90" height="2.01" fill="#1c1418"/><rect x="306.00" y="151.80" width="1.90" height="2.01" fill="#1c1418"/><rect x="307.55" y="151.80" width="1.90" height="2.01" fill="#6a2a2c"/><rect x="309.10" y="151.80" width="14.30" height="2.01" fill="#8a3c34"/><rect x="323.05" y="151.80" width="1.90" height="2.01" fill="#6a2a2c"/><rect x="324.60" y="151.80" width="1.90" height="2.01" fill="#1c1418"/><rect x="306.00" y="153.46" width="1.90" height="2.01" fill="#1c1418"/><rect x="307.55" y="153.46" width="1.90" height="2.01" fill="#6a2a2c"/><rect x="309.10" y="153.46" width="15.85" height="2.01" fill="#8a3c34"/><rect x="324.60" y="153.46" width="1.90" height="2.01" fill="#6a2a2c"/><rect x="326.15" y="153.46" width="1.90" height="2.01" fill="#1c1418"/><rect x="306.00" y="155.12" width="1.90" height="2.01" fill="#1c1418"/><rect x="307.55" y="155.12" width="1.90" height="2.01" fill="#6a2a2c"/><rect x="309.10" y="155.12" width="1.90" height="2.01" fill="#8a3c34"/><rect x="310.65" y="155.12" width="1.90" height="2.01" fill="#6a2a2c"/><rect x="312.20" y="155.12" width="3.45" height="2.01" fill="#8a3c34"/><rect x="315.30" y="155.12" width="1.90" height="2.01" fill="#6a2a2c"/><rect x="316.85" y="155.12" width="3.45" height="2.01" fill="#8a3c34"/><rect x="319.95" y="155.12" width="1.90" height="2.01" fill="#6a2a2c"/><rect x="321.50" y="155.12" width="3.45" height="2.01" fill="#8a3c34"/><rect x="324.60" y="155.12" width="1.90" height="2.01" fill="#6a2a2c"/><rect x="326.15" y="155.12" width="1.90" height="2.01" fill="#1c1418"/><rect x="307.55" y="156.78" width="1.90" height="2.01" fill="#1c1418"/><rect x="309.10" y="156.78" width="3.45" height="2.01" fill="#6a2a2c"/><rect x="312.20" y="156.78" width="1.90" height="2.01" fill="#f2c8a0"/><rect x="313.75" y="156.78" width="1.90" height="2.01" fill="#6a2a2c"/><rect x="315.30" y="156.78" width="3.45" height="2.01" fill="#f2c8a0"/><rect x="318.40" y="156.78" width="1.90" height="2.01" fill="#6a2a2c"/><rect x="319.95" y="156.78" width="3.45" height="2.01" fill="#f2c8a0"/><rect x="323.05" y="156.78" width="1.90" height="2.01" fill="#6a2a2c"/><rect x="324.60" y="156.78" width="1.90" height="2.01" fill="#1c1418"/><rect x="307.55" y="158.44" width="1.90" height="2.01" fill="#1c1418"/><rect x="309.10" y="158.44" width="1.90" height="2.01" fill="#6a2a2c"/><rect x="310.65" y="158.44" width="14.30" height="2.01" fill="#f2c8a0"/><rect x="324.60" y="158.44" width="1.90" height="2.01" fill="#1c1418"/><rect x="309.10" y="160.10" width="1.90" height="2.01" fill="#1c1418"/><rect x="310.65" y="160.10" width="3.45" height="2.01" fill="#f2c8a0"/><rect x="313.75" y="160.10" width="1.90" height="2.01" fill="#1e1418"/><rect x="315.30" y="160.10" width="5.00" height="2.01" fill="#f2c8a0"/><rect x="319.95" y="160.10" width="1.90" height="2.01" fill="#1e1418"/><rect x="321.50" y="160.10" width="1.90" height="2.01" fill="#f2c8a0"/><rect x="323.05" y="160.10" width="1.90" height="2.01" fill="#1c1418"/><rect x="309.10" y="161.76" width="1.90" height="2.01" fill="#1c1418"/><rect x="310.65" y="161.76" width="3.45" height="2.01" fill="#f2c8a0"/><rect x="313.75" y="161.76" width="1.90" height="2.01" fill="#1e1418"/><rect x="315.30" y="161.76" width="5.00" height="2.01" fill="#f2c8a0"/><rect x="319.95" y="161.76" width="1.90" height="2.01" fill="#1e1418"/><rect x="321.50" y="161.76" width="1.90" height="2.01" fill="#f2c8a0"/><rect x="323.05" y="161.76" width="1.90" height="2.01" fill="#1c1418"/><rect x="309.10" y="163.42" width="1.90" height="2.01" fill="#1c1418"/><rect x="310.65" y="163.42" width="1.90" height="2.01" fill="#f2c8a0"/><rect x="312.20" y="163.42" width="1.90" height="2.01" fill="#f0a098"/><rect x="313.75" y="163.42" width="6.55" height="2.01" fill="#f2c8a0"/><rect x="319.95" y="163.42" width="1.90" height="2.01" fill="#f0a098"/><rect x="321.50" y="163.42" width="1.90" height="2.01" fill="#f2c8a0"/><rect x="323.05" y="163.42" width="1.90" height="2.01" fill="#1c1418"/><rect x="310.65" y="165.08" width="1.90" height="2.01" fill="#1c1418"/><rect x="312.20" y="165.08" width="1.90" height="2.01" fill="#d8a684"/><rect x="313.75" y="165.08" width="6.55" height="2.01" fill="#f2c8a0"/><rect x="319.95" y="165.08" width="1.90" height="2.01" fill="#d8a684"/><rect x="321.50" y="165.08" width="1.90" height="2.01" fill="#1c1418"/><rect x="309.10" y="166.74" width="1.90" height="2.01" fill="#1c1418"/><rect x="310.65" y="166.74" width="1.90" height="2.01" fill="#f2c8a0"/><rect x="312.20" y="166.74" width="1.90" height="2.01" fill="#1c1418"/><rect x="313.75" y="166.74" width="6.55" height="2.01" fill="#b02838"/><rect x="319.95" y="166.74" width="1.90" height="2.01" fill="#1c1418"/><rect x="321.50" y="166.74" width="1.90" height="2.01" fill="#f2c8a0"/><rect x="323.05" y="166.74" width="1.90" height="2.01" fill="#1c1418"/><rect x="309.10" y="168.40" width="1.90" height="2.01" fill="#1c1418"/><rect x="310.65" y="168.40" width="1.90" height="2.01" fill="#f2c8a0"/><rect x="312.20" y="168.40" width="1.90" height="2.01" fill="#1c1418"/><rect x="313.75" y="168.40" width="1.90" height="2.01" fill="#3c4c78"/><rect x="315.30" y="168.40" width="3.45" height="2.01" fill="#b02838"/><rect x="318.40" y="168.40" width="1.90" height="2.01" fill="#3c4c78"/><rect x="319.95" y="168.40" width="3.45" height="2.01" fill="#1c1418"/><rect x="310.65" y="170.06" width="3.45" height="2.01" fill="#1c1418"/><rect x="313.75" y="170.06" width="6.55" height="2.01" fill="#3c4c78"/><rect x="319.95" y="170.06" width="1.90" height="2.01" fill="#1c1418"/><rect x="312.20" y="171.72" width="1.90" height="2.01" fill="#1c1418"/><rect x="313.75" y="171.72" width="1.90" height="2.01" fill="#283050"/><rect x="315.30" y="171.72" width="3.45" height="2.01" fill="#1c1418"/><rect x="318.40" y="171.72" width="1.90" height="2.01" fill="#283050"/><rect x="319.95" y="171.72" width="1.90" height="2.01" fill="#1c1418"/><rect x="312.20" y="173.38" width="3.45" height="2.01" fill="#1c1418"/><rect x="318.40" y="173.38" width="3.45" height="2.01" fill="#1c1418"/><rect x="340.00" y="219.00" width="18.00" height="14.00" rx="6" fill="#6e7890" /><rect x="342.00" y="219.00" width="14.00" height="5.00" rx="3" fill="#8e9ab4" /><polygon points="123.3,219.7 125.3,218.2 135.3,218.2 137.3,219.7 138.8,230.7 143.3,235.2 139.8,238.2 135.3,237.2 133.5,242.7 127.1,242.7 125.3,237.2 120.8,238.2 117.3,235.2 121.8,230.7" fill="#5e2632" /><polygon points="124.3,221.7 136.3,221.7 137.3,231.2 141.1,235.2 138.9,236.7 134.3,235.7 132.5,241.3 128.1,241.3 126.3,235.7 121.7,236.7 119.5,235.2 123.3,231.2" fill="#a04a40" /><ellipse cx="130.3" cy="225.1" rx="7.2" ry="5.4" fill="#dc9c7c"/><ellipse cx="130.3" cy="224.9" rx="5.2" ry="3.6" fill="#b4644e"/><rect x="128.50" y="232.20" width="3.60" height="8.60" rx="0" fill="#c4705a" /><polygon points="205.0,219.7 207.0,218.2 217.0,218.2 219.0,219.7 220.5,230.7 225.0,235.2 221.5,238.2 217.0,237.2 215.2,242.7 208.8,242.7 207.0,237.2 202.5,238.2 199.0,235.2 203.5,230.7" fill="#5e2632" /><polygon points="206.0,221.7 218.0,221.7 219.0,231.2 222.8,235.2 220.6,236.7 216.0,235.7 214.2,241.3 209.8,241.3 208.0,235.7 203.4,236.7 201.2,235.2 205.0,231.2" fill="#a04a40" /><ellipse cx="212.0" cy="225.1" rx="7.2" ry="5.4" fill="#dc9c7c"/><ellipse cx="212.0" cy="224.9" rx="5.2" ry="3.6" fill="#b4644e"/><rect x="210.20" y="232.20" width="3.60" height="8.60" rx="0" fill="#c4705a" /><polygon points="40.3,248.0 42.3,246.5 52.3,246.5 54.3,248.0 55.8,259.0 60.3,263.5 56.8,266.5 52.3,265.5 50.5,271.0 44.1,271.0 42.3,265.5 37.8,266.5 34.3,263.5 38.8,259.0" fill="#5e2632" /><polygon points="41.3,250.0 53.3,250.0 54.3,259.5 58.1,263.5 55.9,265.0 51.3,264.0 49.5,269.6 45.1,269.6 43.3,264.0 38.7,265.0 36.5,263.5 40.3,259.5" fill="#a04a40" /><ellipse cx="47.3" cy="253.4" rx="7.2" ry="5.4" fill="#dc9c7c"/><ellipse cx="47.3" cy="253.2" rx="5.2" ry="3.6" fill="#b4644e"/><rect x="45.50" y="260.50" width="3.60" height="8.60" rx="0" fill="#c4705a" /><polygon points="97.0,276.3 99.0,274.8 109.0,274.8 111.0,276.3 112.5,287.3 117.0,291.8 113.5,294.8 109.0,293.8 107.2,299.3 100.8,299.3 99.0,293.8 94.5,294.8 91.0,291.8 95.5,287.3" fill="#5e2632" /><polygon points="98.0,278.3 110.0,278.3 111.0,287.8 114.8,291.8 112.6,293.3 108.0,292.3 106.2,297.9 101.8,297.9 100.0,292.3 95.4,293.3 93.2,291.8 97.0,287.8" fill="#a04a40" /><ellipse cx="104.0" cy="281.7" rx="7.2" ry="5.4" fill="#dc9c7c"/><ellipse cx="104.0" cy="281.5" rx="5.2" ry="3.6" fill="#b4644e"/><rect x="102.20" y="288.80" width="3.60" height="8.60" rx="0" fill="#c4705a" /><polygon points="151.0,281.3 153.0,279.8 163.0,279.8 165.0,281.3 166.5,292.3 171.0,296.8 167.5,299.8 163.0,298.8 161.2,304.3 154.8,304.3 153.0,298.8 148.5,299.8 145.0,296.8 149.5,292.3" fill="#5e2632" /><polygon points="152.0,283.3 164.0,283.3 165.0,292.8 168.8,296.8 166.6,298.3 162.0,297.3 160.2,302.9 155.8,302.9 154.0,297.3 149.4,298.3 147.2,296.8 151.0,292.8" fill="#a04a40" /><ellipse cx="158.0" cy="286.7" rx="7.2" ry="5.4" fill="#dc9c7c"/><ellipse cx="158.0" cy="286.5" rx="5.2" ry="3.6" fill="#b4644e"/><rect x="156.20" y="293.80" width="3.60" height="8.60" rx="0" fill="#c4705a" /><polygon points="68.2,303.8 70.2,302.3 80.2,302.3 82.2,303.8 83.7,314.8 88.2,319.3 84.7,322.3 80.2,321.3 78.4,326.8 72.0,326.8 70.2,321.3 65.7,322.3 62.2,319.3 66.7,314.8" fill="#5e2632" /><polygon points="69.2,305.8 81.2,305.8 82.2,315.3 86.0,319.3 83.8,320.8 79.2,319.8 77.4,325.4 73.0,325.4 71.2,319.8 66.6,320.8 64.4,319.3 68.2,315.3" fill="#a04a40" /><ellipse cx="75.2" cy="309.2" rx="7.2" ry="5.4" fill="#dc9c7c"/><ellipse cx="75.2" cy="309.0" rx="5.2" ry="3.6" fill="#b4644e"/><rect x="73.40" y="316.30" width="3.60" height="8.60" rx="0" fill="#c4705a" /><polygon points="205.3,303.8 207.3,302.3 217.3,302.3 219.3,303.8 220.8,314.8 225.3,319.3 221.8,322.3 217.3,321.3 215.5,326.8 209.1,326.8 207.3,321.3 202.8,322.3 199.3,319.3 203.8,314.8" fill="#5e2632" /><polygon points="206.3,305.8 218.3,305.8 219.3,315.3 223.1,319.3 220.9,320.8 216.3,319.8 214.5,325.4 210.1,325.4 208.3,319.8 203.7,320.8 201.5,319.3 205.3,315.3" fill="#a04a40" /><ellipse cx="212.3" cy="309.2" rx="7.2" ry="5.4" fill="#dc9c7c"/><ellipse cx="212.3" cy="309.0" rx="5.2" ry="3.6" fill="#b4644e"/><rect x="210.50" y="316.30" width="3.60" height="8.60" rx="0" fill="#c4705a" /><polygon points="-8.5,222.2 -6.5,220.7 3.5,220.7 5.5,222.2 7.0,233.2 11.5,237.7 8.0,240.7 3.5,239.7 1.7,245.2 -4.7,245.2 -6.5,239.7 -11.0,240.7 -14.5,237.7 -10.0,233.2" fill="#5e2632" /><polygon points="-7.5,224.2 4.5,224.2 5.5,233.7 9.3,237.7 7.1,239.2 2.5,238.2 0.7,243.8 -3.7,243.8 -5.5,238.2 -10.1,239.2 -12.3,237.7 -8.5,233.7" fill="#a04a40" /><ellipse cx="-1.5" cy="227.6" rx="7.2" ry="5.4" fill="#dc9c7c"/><ellipse cx="-1.5" cy="227.4" rx="5.2" ry="3.6" fill="#b4644e"/><rect x="-3.30" y="234.70" width="3.60" height="8.60" rx="0" fill="#c4705a" /><rect x="39.00" y="221.50" width="483.30" height="92.50" rx="8" fill="rgba(20,62,32,0.5)" /><path d="M44.8 248.5V228.5H515.7V247.3 M515.7 288.2V307.3H44.8V290.5" fill="none" stroke="#d8b848" stroke-width="1.3"/><path d="M41.6 252.0L44.8 249.0L48.0 252.0 M44.8 254.5V262.5 M41.6 285.5L44.8 289.5L48.0 285.5" fill="none" stroke="#d8b848" stroke-width="1.2"/><circle cx="507.30" cy="259.00" r="4.2" fill="#c8b070" /><circle cx="507.30" cy="259.00" r="2.6" fill="#d88828" /><rect x="68.14" y="239.00" width="13.20" height="2.98" fill="#1c1418"/><rect x="65.57" y="241.63" width="2.92" height="2.98" fill="#1c1418"/><rect x="68.14" y="241.63" width="2.92" height="2.98" fill="#e07820"/><rect x="70.71" y="241.63" width="8.06" height="2.98" fill="#f0902c"/><rect x="78.42" y="241.63" width="2.92" height="2.98" fill="#e07820"/><rect x="80.99" y="241.63" width="2.92" height="2.98" fill="#1c1418"/><rect x="65.57" y="244.26" width="2.92" height="2.98" fill="#1c1418"/><rect x="68.14" y="244.26" width="2.92" height="2.98" fill="#f0902c"/><rect x="70.71" y="244.26" width="2.92" height="2.98" fill="#f8b060"/><rect x="73.28" y="244.26" width="2.92" height="2.98" fill="#f0902c"/><rect x="75.85" y="244.26" width="5.49" height="2.98" fill="#e07820"/><rect x="80.99" y="244.26" width="15.77" height="2.98" fill="#1c1418"/><rect x="65.57" y="246.89" width="2.92" height="2.98" fill="#1c1418"/><rect x="68.14" y="246.89" width="2.92" height="2.98" fill="#e07820"/><rect x="70.71" y="246.89" width="2.92" height="2.98" fill="#f0902c"/><rect x="73.28" y="246.89" width="5.49" height="2.98" fill="#e07820"/><rect x="78.42" y="246.89" width="2.92" height="2.98" fill="#c4662a"/><rect x="80.99" y="246.89" width="2.92" height="2.98" fill="#e07820"/><rect x="83.56" y="246.89" width="2.92" height="2.98" fill="#f0902c"/><rect x="86.13" y="246.89" width="5.49" height="2.98" fill="#f8b060"/><rect x="91.27" y="246.89" width="2.92" height="2.98" fill="#f0902c"/><rect x="93.84" y="246.89" width="2.92" height="2.98" fill="#e07820"/><rect x="96.41" y="246.89" width="2.92" height="2.98" fill="#1c1418"/><rect x="63.00" y="249.52" width="2.92" height="2.98" fill="#1c1418"/><rect x="65.57" y="249.52" width="5.49" height="2.98" fill="#c4662a"/><rect x="70.71" y="249.52" width="5.49" height="2.98" fill="#e07820"/><rect x="75.85" y="249.52" width="2.92" height="2.98" fill="#c4662a"/><rect x="78.42" y="249.52" width="2.92" height="2.98" fill="#e07820"/><rect x="80.99" y="249.52" width="15.77" height="2.98" fill="#f0902c"/><rect x="96.41" y="249.52" width="2.92" height="2.98" fill="#e07820"/><rect x="98.98" y="249.52" width="2.92" height="2.98" fill="#1c1418"/><rect x="63.00" y="252.15" width="2.92" height="2.98" fill="#1c1418"/><rect x="65.57" y="252.15" width="8.06" height="2.98" fill="#c4662a"/><rect x="73.28" y="252.15" width="2.92" height="2.98" fill="#a04c2c"/><rect x="75.85" y="252.15" width="5.49" height="2.98" fill="#e07820"/><rect x="80.99" y="252.15" width="2.92" height="2.98" fill="#f0902c"/><rect x="83.56" y="252.15" width="13.20" height="2.98" fill="#e07820"/><rect x="96.41" y="252.15" width="2.92" height="2.98" fill="#f0902c"/><rect x="98.98" y="252.15" width="2.92" height="2.98" fill="#e07820"/><rect x="63.00" y="254.78" width="2.92" height="2.98" fill="#1c1418"/><rect x="65.57" y="254.78" width="8.06" height="2.98" fill="#c4662a"/><rect x="73.28" y="254.78" width="2.92" height="2.98" fill="#a04c2c"/><rect x="75.85" y="254.78" width="26.05" height="2.98" fill="#e07820"/><rect x="63.00" y="257.41" width="2.92" height="2.98" fill="#1c1418"/><rect x="65.57" y="257.41" width="8.06" height="2.98" fill="#c4662a"/><rect x="73.28" y="257.41" width="2.92" height="2.98" fill="#a04c2c"/><rect x="75.85" y="257.41" width="2.92" height="2.98" fill="#e07820"/><rect x="78.42" y="257.41" width="2.92" height="2.98" fill="#f8b060"/><rect x="80.99" y="257.41" width="2.92" height="2.98" fill="#e07820"/><rect x="83.56" y="257.41" width="2.92" height="2.98" fill="#f0902c"/><rect x="86.13" y="257.41" width="2.92" height="2.98" fill="#e07820"/><rect x="88.70" y="257.41" width="2.92" height="2.98" fill="#f8b060"/><rect x="91.27" y="257.41" width="2.92" height="2.98" fill="#e07820"/><rect x="93.84" y="257.41" width="2.92" height="2.98" fill="#f0902c"/><rect x="96.41" y="257.41" width="5.49" height="2.98" fill="#e07820"/><rect x="65.57" y="260.04" width="2.92" height="2.98" fill="#1c1418"/><rect x="68.14" y="260.04" width="5.49" height="2.98" fill="#c4662a"/><rect x="73.28" y="260.04" width="2.92" height="2.98" fill="#a04c2c"/><rect x="75.85" y="260.04" width="2.92" height="2.98" fill="#e07820"/><rect x="78.42" y="260.04" width="2.92" height="2.98" fill="#a04c2c"/><rect x="80.99" y="260.04" width="2.92" height="2.98" fill="#e07820"/><rect x="83.56" y="260.04" width="2.92" height="2.98" fill="#a04c2c"/><rect x="86.13" y="260.04" width="2.92" height="2.98" fill="#e07820"/><rect x="88.70" y="260.04" width="2.92" height="2.98" fill="#a04c2c"/><rect x="91.27" y="260.04" width="2.92" height="2.98" fill="#e07820"/><rect x="93.84" y="260.04" width="2.92" height="2.98" fill="#a04c2c"/><rect x="96.41" y="260.04" width="2.92" height="2.98" fill="#e07820"/><rect x="98.98" y="260.04" width="2.92" height="2.98" fill="#c4662a"/><rect x="65.57" y="262.67" width="2.92" height="2.98" fill="#1c1418"/><rect x="68.14" y="262.67" width="5.49" height="2.98" fill="#c4662a"/><rect x="73.28" y="262.67" width="5.49" height="2.98" fill="#a04c2c"/><rect x="78.42" y="262.67" width="2.92" height="2.98" fill="#c4662a"/><rect x="80.99" y="262.67" width="2.92" height="2.98" fill="#f2c8a0"/><rect x="83.56" y="262.67" width="2.92" height="2.98" fill="#c4662a"/><rect x="86.13" y="262.67" width="2.92" height="2.98" fill="#f2c8a0"/><rect x="88.70" y="262.67" width="2.92" height="2.98" fill="#c4662a"/><rect x="91.27" y="262.67" width="2.92" height="2.98" fill="#f2c8a0"/><rect x="93.84" y="262.67" width="2.92" height="2.98" fill="#c4662a"/><rect x="96.41" y="262.67" width="2.92" height="2.98" fill="#f2c8a0"/><rect x="98.98" y="262.67" width="2.92" height="2.98" fill="#c4662a"/><rect x="68.14" y="265.30" width="2.92" height="2.98" fill="#1c1418"/><rect x="70.71" y="265.30" width="2.92" height="2.98" fill="#c4662a"/><rect x="73.28" y="265.30" width="5.49" height="2.98" fill="#a04c2c"/><rect x="78.42" y="265.30" width="20.91" height="2.98" fill="#f2c8a0"/><rect x="98.98" y="265.30" width="2.92" height="2.98" fill="#1c1418"/><rect x="70.71" y="267.93" width="2.92" height="2.98" fill="#1c1418"/><rect x="73.28" y="267.93" width="2.92" height="2.98" fill="#a04c2c"/><rect x="75.85" y="267.93" width="8.06" height="2.98" fill="#f2c8a0"/><rect x="83.56" y="267.93" width="2.92" height="2.98" fill="#1e1418"/><rect x="86.13" y="267.93" width="5.49" height="2.98" fill="#f2c8a0"/><rect x="91.27" y="267.93" width="2.92" height="2.98" fill="#1e1418"/><rect x="93.84" y="267.93" width="2.92" height="2.98" fill="#f2c8a0"/><rect x="96.41" y="267.93" width="2.92" height="2.98" fill="#d8a684"/><rect x="98.98" y="267.93" width="2.92" height="2.98" fill="#1c1418"/><rect x="73.28" y="270.56" width="2.92" height="2.98" fill="#1c1418"/><rect x="75.85" y="270.56" width="8.06" height="2.98" fill="#f2c8a0"/><rect x="83.56" y="270.56" width="2.92" height="2.98" fill="#1e1418"/><rect x="86.13" y="270.56" width="5.49" height="2.98" fill="#f2c8a0"/><rect x="91.27" y="270.56" width="2.92" height="2.98" fill="#1e1418"/><rect x="93.84" y="270.56" width="2.92" height="2.98" fill="#f2c8a0"/><rect x="96.41" y="270.56" width="2.92" height="2.98" fill="#d8a684"/><rect x="98.98" y="270.56" width="2.92" height="2.98" fill="#1c1418"/><rect x="73.28" y="273.19" width="2.92" height="2.98" fill="#1c1418"/><rect x="75.85" y="273.19" width="5.49" height="2.98" fill="#f2c8a0"/><rect x="80.99" y="273.19" width="2.92" height="2.98" fill="#f0a098"/><rect x="83.56" y="273.19" width="8.06" height="2.98" fill="#f2c8a0"/><rect x="91.27" y="273.19" width="5.49" height="2.98" fill="#f0a098"/><rect x="96.41" y="273.19" width="2.92" height="2.98" fill="#d8a684"/><rect x="98.98" y="273.19" width="2.92" height="2.98" fill="#1c1418"/><rect x="75.85" y="275.82" width="2.92" height="2.98" fill="#1c1418"/><rect x="78.42" y="275.82" width="2.92" height="2.98" fill="#d8a684"/><rect x="80.99" y="275.82" width="13.20" height="2.98" fill="#f2c8a0"/><rect x="93.84" y="275.82" width="2.92" height="2.98" fill="#d8a684"/><rect x="96.41" y="275.82" width="2.92" height="2.98" fill="#1c1418"/><rect x="75.85" y="278.45" width="2.92" height="2.98" fill="#1c1418"/><rect x="78.42" y="278.45" width="15.77" height="2.98" fill="#c02848"/><rect x="93.84" y="278.45" width="2.92" height="2.98" fill="#5a2838"/><rect x="96.41" y="278.45" width="2.92" height="2.98" fill="#1c1418"/><rect x="75.85" y="281.08" width="2.92" height="2.98" fill="#1c1418"/><rect x="78.42" y="281.08" width="2.92" height="2.98" fill="#3c4c78"/><rect x="80.99" y="281.08" width="10.63" height="2.98" fill="#c02848"/><rect x="91.27" y="281.08" width="2.92" height="2.98" fill="#3c4c78"/><rect x="93.84" y="281.08" width="2.92" height="2.98" fill="#f2c8a0"/><rect x="96.41" y="281.08" width="2.92" height="2.98" fill="#1c1418"/><rect x="75.85" y="283.71" width="2.92" height="2.98" fill="#1c1418"/><rect x="78.42" y="283.71" width="15.77" height="2.98" fill="#3c4c78"/><rect x="93.84" y="283.71" width="2.92" height="2.98" fill="#f2c8a0"/><rect x="96.41" y="283.71" width="2.92" height="2.98" fill="#1c1418"/><rect x="75.85" y="286.34" width="2.92" height="2.98" fill="#1c1418"/><rect x="78.42" y="286.34" width="2.92" height="2.98" fill="#283050"/><rect x="80.99" y="286.34" width="2.92" height="2.98" fill="#3c4c78"/><rect x="83.56" y="286.34" width="5.49" height="2.98" fill="#283050"/><rect x="88.70" y="286.34" width="2.92" height="2.98" fill="#3c4c78"/><rect x="91.27" y="286.34" width="2.92" height="2.98" fill="#283050"/><rect x="93.84" y="286.34" width="2.92" height="2.98" fill="#1c1418"/><rect x="78.42" y="288.97" width="2.92" height="2.98" fill="#5a2838"/><rect x="91.27" y="288.97" width="2.92" height="2.98" fill="#5a2838"/></svg>
<div class="t" style="left:1106px;top:516.80px;font-size:14.7px;color:#f0fff0;font-weight:700;line-height:20px;height:20px;transform:scale(1.068,1.03);text-shadow:0 0 2px rgba(230,255,230,0.4);">laksjflaksjfslkdjfal laksjflaksjfslkdjfal</div>
<div class="t" style="left:1106px;top:535.30px;font-size:14.7px;color:#f0fff0;font-weight:700;line-height:20px;height:20px;transform:scale(1.068,1.03);text-shadow:0 0 2px rgba(230,255,230,0.4);">laksjflaksjfslkdjfal laksjflaksjfslkdjfal</div>
<div class="t" style="left:1106px;top:553.70px;font-size:14.7px;color:#f0fff0;font-weight:700;line-height:20px;height:20px;transform:scale(1.068,1.03);text-shadow:0 0 2px rgba(230,255,230,0.4);">laksjflaksjfslkdjfal laksjflaksjfslkdjfal</div>
<div class="a" style="left:991px;top:117px;width:560px;height:5px;background:linear-gradient(rgba(0,0,0,0.28),rgba(0,0,0,0));"></div>
<div class="a" style="left:237px;top:117px;width:752px;height:5px;background:linear-gradient(rgba(0,0,0,0.22),rgba(0,0,0,0));"></div>
<div class="a" style="left:1553px;top:75px;width:367px;height:988px;background:#383838;"></div>
<div class="a" style="left:1553px;top:75px;width:367px;height:20px;background:#282828;"></div>
<div class="a" style="left:1553px;top:76px;width:93px;height:19px;background:#3c3c3c;"></div>
<div class="a" style="left:1553px;top:75px;width:93px;height:2px;background:#3a72b0;"></div>
<svg class="a" style="left:1561.5px;top:80px;" width="11" height="11" viewBox="0 0 11 11"><circle cx="5.5" cy="5.5" r="5.5" fill="#c4c4c4"/><rect x="4.7" y="4.6" width="1.7" height="4.2" fill="#3c3c3c"/><circle cx="5.5" cy="2.9" r="1" fill="#3c3c3c"/></svg>
<div class="t" style="left:1577px;top:79.00px;font-size:12.5px;color:#c8c8c8;">Inspector</div>
<div class="t" style="left:1654px;top:79.00px;font-size:12.5px;color:#c8c8c8;">Tile Palette</div>
<svg class="a" style="left:1741px;top:80.5px;" width="11" height="11" viewBox="0 0 11 11"><path d="M1 1H4.5M1 1V4.5M1 1L10 10M10 10H6.5M10 10V6.5M10 1H6.5M10 1V4.5M10 1L1 10M1 10H4.5M1 10V6.5" stroke="#c4c4c4" stroke-width="1.2" fill="none"/></svg>
<div class="t" style="left:1757px;top:79.00px;font-size:12.5px;color:#c8c8c8;">Navigation</div>
<svg class="a" style="left:1884.0px;top:80.0px;" width="9" height="11" viewBox="0 0 9 11"><rect x="0.8" y="5.6" width="7.4" height="4.6" fill="none" stroke="#c4c4c4" stroke-width="1.1"/><path d="M2.4 5.6V3.2a2.1 2.1 0 0 1 4.2 0V4" fill="none" stroke="#c4c4c4" stroke-width="1.1"/></svg>
<svg class="a" style="left:1904px;top:79.0px;" width="4" height="13.0" viewBox="0 0 4 13.0"><circle cx="2" cy="2.0" r="1.1" fill="#c4c4c4"/><circle cx="2" cy="6.5" r="1.1" fill="#c4c4c4"/><circle cx="2" cy="11.0" r="1.1" fill="#c4c4c4"/></svg>
<div class="a" style="left:1907px;top:95px;width:13px;height:772px;background:#353535;"></div>
<svg class="a" style="left:1910px;top:101.5px;" width="7" height="5" viewBox="0 0 7 5"><path d="M0 5H7L3.5 0Z" fill="#c0c0c0"/></svg>
<svg class="a" style="left:1910px;top:856px;" width="7" height="5" viewBox="0 0 7 5"><path d="M0 0H7L3.5 5Z" fill="#c0c0c0"/></svg>
<div class="a" style="left:1909.5px;top:240px;width:8px;height:598px;background:#5e5e5e;border-radius:4px;"></div>
<div class="a" style="left:1697px;top:95px;width:66px;height:2.2px;background:#2a2a2a;border-radius:0 0 3px 3px;"></div>
<div class="a" style="left:1767px;top:95px;width:66px;height:2.2px;background:#2a2a2a;border-radius:0 0 3px 3px;"></div>
<div class="a" style="left:1852px;top:95px;width:23px;height:1.8px;background:#5a5a5a;"></div>
<div class="a" style="left:1876.5px;top:95px;width:25px;height:1.8px;background:#5a5a5a;"></div>
<svg class="a" style="left:1559.9px;top:107.5px;" width="9" height="6" viewBox="0 0 9 6"><path d="M0 0H9L4.5 6Z" fill="#6e6e6e"/></svg>
<div class="t" style="left:1572.5px;top:103.00px;font-size:12.5px;color:#c8c8c8;">Anchors</div>
<div class="t" style="left:1587.5px;top:122.30px;font-size:12.5px;color:#c8c8c8;">Min</div>
<div class="t" style="left:1697px;top:122.30px;font-size:12.5px;color:#c8c8c8;">X</div>
<div class="a" style="left:1708.6px;top:119.3px;width:54.90000000000009px;height:18.500000000000014px;background:#2a2a2a;border-radius:3px;border:1px solid #212121;"></div>
<div class="t" style="left:1711.6px;top:122.30px;font-size:12.5px;color:#c8c8c8;">0.5</div>
<div class="t" style="left:1766.5px;top:122.30px;font-size:12.5px;color:#c8c8c8;">Y</div>
<div class="a" style="left:1777.6px;top:119.3px;width:54.90000000000009px;height:18.500000000000014px;background:#2a2a2a;border-radius:3px;border:1px solid #212121;"></div>
<div class="t" style="left:1780.6px;top:122.30px;font-size:12.5px;color:#c8c8c8;">0.5</div>
<div class="t" style="left:1587.5px;top:143.20px;font-size:12.5px;color:#c8c8c8;">Max</div>
<div class="t" style="left:1697px;top:143.20px;font-size:12.5px;color:#c8c8c8;">X</div>
<div class="a" style="left:1708.6px;top:140.6px;width:54.90000000000009px;height:18.0px;background:#2a2a2a;border-radius:3px;border:1px solid #212121;"></div>
<div class="t" style="left:1711.6px;top:143.20px;font-size:12.5px;color:#c8c8c8;">0.5</div>
<div class="t" style="left:1766.5px;top:143.20px;font-size:12.5px;color:#c8c8c8;">Y</div>
<div class="a" style="left:1777.6px;top:140.6px;width:54.90000000000009px;height:18.0px;background:#2a2a2a;border-radius:3px;border:1px solid #212121;"></div>
<div class="t" style="left:1780.6px;top:143.20px;font-size:12.5px;color:#c8c8c8;">0.5</div>
<div class="t" style="left:1572.5px;top:166.10px;font-size:12.5px;color:#c8c8c8;">Pivot</div>
<div class="t" style="left:1697px;top:166.10px;font-size:12.5px;color:#c8c8c8;">X</div>
<div class="a" style="left:1708.6px;top:163.3px;width:54.90000000000009px;height:18.5px;background:#2a2a2a;border-radius:3px;border:1px solid #212121;"></div>
<div class="t" style="left:1711.6px;top:166.10px;font-size:12.5px;color:#c8c8c8;">0.5</div>
<div class="t" style="left:1766.5px;top:166.10px;font-size:12.5px;color:#c8c8c8;">Y</div>
<div class="a" style="left:1777.6px;top:163.3px;width:54.90000000000009px;height:18.5px;background:#2a2a2a;border-radius:3px;border:1px solid #212121;"></div>
<div class="t" style="left:1780.6px;top:166.10px;font-size:12.5px;color:#c8c8c8;">0.5</div>
<div class="t" style="left:1572.5px;top:195.00px;font-size:12.5px;color:#c8c8c8;">Rotation</div>
<div class="t" style="left:1700px;top:195.00px;font-size:12.5px;color:#c8c8c8;">X</div>
<div class="a" style="left:1711.4px;top:192.7px;width:52.09999999999991px;height:19.0px;background:#2a2a2a;border-radius:3px;border:1px solid #212121;"></div>
<div class="t" style="left:1714.4px;top:195.20px;font-size:12.5px;color:#c8c8c8;">0</div>
<div class="t" style="left:1769px;top:195.00px;font-size:12.5px;color:#c8c8c8;">Y</div>
<div class="a" style="left:1780.4px;top:192.7px;width:52.09999999999991px;height:19.0px;background:#2a2a2a;border-radius:3px;border:1px solid #212121;"></div>
<div class="t" style="left:1783.4px;top:195.20px;font-size:12.5px;color:#c8c8c8;">0</div>
<div class="t" style="left:1839px;top:195.00px;font-size:12.5px;color:#c8c8c8;">Z</div>
<div class="a" style="left:1850.3px;top:192.7px;width:52.299999999999955px;height:19.0px;background:#2a2a2a;border-radius:3px;border:1px solid #212121;"></div>
<div class="t" style="left:1853.3px;top:195.20px;font-size:12.5px;color:#c8c8c8;">0</div>
<div class="t" style="left:1572.5px;top:216.50px;font-size:12.5px;color:#c8c8c8;">Scale</div>
<div class="t" style="left:1700px;top:216.50px;font-size:12.5px;color:#c8c8c8;">X</div>
<div class="a" style="left:1711.4px;top:214px;width:52.09999999999991px;height:18.5px;background:#2a2a2a;border-radius:3px;border:1px solid #212121;"></div>
<div class="t" style="left:1714.4px;top:216.25px;font-size:12.5px;color:#c8c8c8;">0.30172</div>
<div class="t" style="left:1769px;top:216.50px;font-size:12.5px;color:#c8c8c8;">Y</div>
<div class="a" style="left:1780.4px;top:214px;width:52.09999999999991px;height:18.5px;background:#2a2a2a;border-radius:3px;border:1px solid #212121;"></div>
<div class="t" style="left:1783.4px;top:216.25px;font-size:12.5px;color:#c8c8c8;">0.30172</div>
<div class="t" style="left:1839px;top:216.50px;font-size:12.5px;color:#c8c8c8;">Z</div>
<div class="a" style="left:1850.3px;top:214px;width:52.299999999999955px;height:18.5px;background:#2a2a2a;border-radius:3px;border:1px solid #212121;"></div>
<div class="t" style="left:1853.3px;top:216.25px;font-size:12.5px;color:#c8c8c8;">0.30172</div>
<div class="a" style="left:1553px;top:242.5px;width:354px;height:22.0px;background:#3e3e3e;"></div>
<div class="a" style="left:1553px;top:242.5px;width:354px;height:1px;background:#1f1f1f;"></div>
<svg class="a" style="left:1559.0px;top:251.0px;" width="9" height="6" viewBox="0 0 9 6"><path d="M0 0H9L4.5 6Z" fill="#6e6e6e"/></svg>
<div class="t" style="left:1613px;top:246.50px;font-size:12.3px;color:#dcdcdc;font-weight:700;">Canvas Renderer</div>
<svg class="a" style="left:1848.0px;top:248.5px;" width="11" height="11" viewBox="0 0 11 11"><circle cx="5.5" cy="5.5" r="5.5" fill="#c4c4c4"/><path d="M3.9 4.3a1.7 1.7 0 1 1 2.4 1.5c-.6.3-.8.6-.8 1.2" fill="none" stroke="#3e3e3e" stroke-width="1.3"/><circle cx="5.5" cy="8.6" r="0.8" fill="#3e3e3e"/></svg>
<svg class="a" style="left:1868.0px;top:249.0px;" width="11" height="10" viewBox="0 0 11 10"><path d="M0 2.5H11M0 7.5H11" stroke="#c4c4c4" stroke-width="1.2"/><path d="M7 0.5V4.5M3.5 5.5V9.5" stroke="#c4c4c4" stroke-width="1.6"/></svg>
<svg class="a" style="left:1891.5px;top:247.5px;" width="4" height="13.0" viewBox="0 0 4 13.0"><circle cx="2" cy="2.0" r="1.1" fill="#c4c4c4"/><circle cx="2" cy="6.5" r="1.1" fill="#c4c4c4"/><circle cx="2" cy="11.0" r="1.1" fill="#c4c4c4"/></svg>
<svg class="a" style="left:1573px;top:247.5px;" width="17" height="12" viewBox="0 0 17 12"><path d="M0.7 6Q8.5 -4 16.3 6Q8.5 16 0.7 6Z" fill="none" stroke="#e0e0e0" stroke-width="1.3"/><circle cx="8.5" cy="6" r="2.6" fill="none" stroke="#e0e0e0" stroke-width="1.3"/></svg>
<div class="a" style="left:1572.5px;top:271px;width:124.5px;height:17px;overflow:hidden;"><div class="t" style="left:0;top:0.5px;font-size:12.5px;color:#c8c8c8;">Cull Transparent Mesh</div></div>
<div class="a" style="left:1699.3px;top:271.6px;width:13.5px;height:13.699999999999989px;background:#2a2a2a;border-radius:3px;border:1px solid #212121;"></div>
<div class="a" style="left:1553px;top:298px;width:354px;height:22px;background:#3e3e3e;"></div>
<div class="a" style="left:1553px;top:298px;width:354px;height:1px;background:#1f1f1f;"></div>
<svg class="a" style="left:1559.0px;top:306.5px;" width="9" height="6" viewBox="0 0 9 6"><path d="M0 0H9L4.5 6Z" fill="#6e6e6e"/></svg>
<div class="t" style="left:1613px;top:302.00px;font-size:12.3px;color:#dcdcdc;font-weight:700;">Text</div>
<svg class="a" style="left:1848.0px;top:304.0px;" width="11" height="11" viewBox="0 0 11 11"><circle cx="5.5" cy="5.5" r="5.5" fill="#c4c4c4"/><path d="M3.9 4.3a1.7 1.7 0 1 1 2.4 1.5c-.6.3-.8.6-.8 1.2" fill="none" stroke="#3e3e3e" stroke-width="1.3"/><circle cx="5.5" cy="8.6" r="0.8" fill="#3e3e3e"/></svg>
<svg class="a" style="left:1868.0px;top:304.5px;" width="11" height="10" viewBox="0 0 11 10"><path d="M0 2.5H11M0 7.5H11" stroke="#c4c4c4" stroke-width="1.2"/><path d="M7 0.5V4.5M3.5 5.5V9.5" stroke="#c4c4c4" stroke-width="1.6"/></svg>
<svg class="a" style="left:1891.5px;top:303.0px;" width="4" height="13.0" viewBox="0 0 4 13.0"><circle cx="2" cy="2.0" r="1.1" fill="#c4c4c4"/><circle cx="2" cy="6.5" r="1.1" fill="#c4c4c4"/><circle cx="2" cy="11.0" r="1.1" fill="#c4c4c4"/></svg>
<div class="a" style="left:1575px;top:303px;width:12px;height:12.5px;background:#d0d0d0;border-radius:1.5px;"></div>
<div class="t" style="left:1577.3px;top:301.80px;font-size:11.5px;color:#3e3e3e;font-weight:700;">T</div>
<div class="a" style="left:1593.5px;top:302.5px;width:13.0px;height:13.5px;background:#2a2a2a;border-radius:3px;border:1px solid #212121;"></div>
<svg class="a" style="left:1596.1px;top:305.7px;" width="9" height="8" viewBox="0 0 9 8"><path d="M0.8 4.2L3.3 6.7L8.3 0.9" fill="none" stroke="#e4e4e4" stroke-width="1.7"/></svg>
<div class="t" style="left:1572.5px;top:326.90px;font-size:12.5px;color:#c8c8c8;">Text</div>
<div class="a" style="left:1571.5px;top:343.2px;width:331px;height:59px;background:#2a2a2a;border-radius:3px;border:1px solid #212121;"></div>
<div class="t" style="left:1574px;top:346.50px;font-size:12.5px;color:#c8c8c8;letter-spacing:0.2px;">laksjflaksjfslkdjfal laksjflaksjfslkdjfal laksjflaksjfslkdjfal</div>
<div class="t" style="left:1574px;top:362.00px;font-size:12.5px;color:#c8c8c8;letter-spacing:0.2px;">laksjflaksjfslkdjfal laksjflaksjfslkdjfal laksjflaksjfslkdjfal</div>
<div class="t" style="left:1574px;top:377.50px;font-size:12.5px;color:#c8c8c8;letter-spacing:0.2px;">laksjflaksjfslkdjfal laksjflaksjfslkdjfal laksjflaksjfslkdjfal</div>
<div class="t" style="left:1572.5px;top:407.90px;font-size:12.5px;color:#d2d2d2;font-weight:700;">Character</div>
<div class="t" style="left:1587.5px;top:428.30px;font-size:12.5px;color:#c8c8c8;">Font</div>
<div class="a" style="left:1699.3px;top:426.5px;width:203.29999999999995px;height:18.5px;background:#2a2a2a;border-radius:3px;border:1px solid #212121;"></div>
<div class="t" style="left:1702.5px;top:428.70px;font-size:7.5px;color:#c8c8c8;font-weight:700;">Aa</div>
<div class="t" style="left:1715px;top:428.50px;font-size:12.5px;color:#c8c8c8;">Arial</div>
<div class="a" style="left:1884px;top:427.5px;width:1px;height:16.5px;background:#3a3a3a;"></div>
<svg class="a" style="left:1888px;top:430.8px;" width="10" height="10" viewBox="0 0 10 10"><circle cx="5" cy="5" r="4.2" fill="none" stroke="#c4c4c4" stroke-width="1.1"/><circle cx="5" cy="5" r="1.5" fill="#c4c4c4"/></svg>
<div class="t" style="left:1587.5px;top:449.50px;font-size:12.5px;color:#c8c8c8;">Font Style</div>
<div class="a" style="left:1699.3px;top:448px;width:203.29999999999995px;height:16.399999999999977px;background:#515151;border-radius:3px;border:1px solid #303030;"></div>
<div class="t" style="left:1702.8px;top:448.40px;font-size:12.5px;color:#c8c8c8;">Bold</div>
<svg class="a" style="left:1889.6px;top:454.25px;" width="7" height="4.5" viewBox="0 0 7 4.5"><path d="M0 0H7L3.5 4.5Z" fill="#c8c8c8"/></svg>
<div class="t" style="left:1587.5px;top:470.50px;font-size:12.5px;color:#7f9fe0;">Font Size</div>
<div class="a" style="left:1699.3px;top:468.9px;width:203.29999999999995px;height:17.30000000000001px;background:#2a2a2a;border-radius:3px;border:1px solid #3d6aa6;"></div>
<div class="t" style="left:1702.3px;top:470.35px;font-size:12.5px;color:#c8c8c8;">86</div>
<div class="t" style="left:1587.5px;top:491.50px;font-size:12.5px;color:#c8c8c8;">Line Spacing</div>
<div class="a" style="left:1699.3px;top:490.2px;width:203.29999999999995px;height:16.400000000000034px;background:#2a2a2a;border-radius:3px;border:1px solid #212121;"></div>
<div class="t" style="left:1702.3px;top:491.20px;font-size:12.5px;color:#c8c8c8;">1</div>
<div class="t" style="left:1587.5px;top:512.50px;font-size:12.5px;color:#c8c8c8;">Rich Text</div>
<div class="a" style="left:1699.3px;top:512.6px;width:13.5px;height:13.600000000000023px;background:#2a2a2a;border-radius:3px;border:1px solid #212121;"></div>
<svg class="a" style="left:1701.8999999999999px;top:515.8000000000001px;" width="9" height="8" viewBox="0 0 9 8"><path d="M0.8 4.2L3.3 6.7L8.3 0.9" fill="none" stroke="#e4e4e4" stroke-width="1.7"/></svg>
<div class="t" style="left:1572.5px;top:533.50px;font-size:12.5px;color:#d2d2d2;font-weight:700;">Paragraph</div>
<div class="t" style="left:1587.5px;top:554.20px;font-size:12.5px;color:#c8c8c8;">Alignment</div>
<div class="a" style="left:1699.3px;top:551.5px;width:17.700000000000045px;height:18.5px;background:#656565;border-radius:2px;"></div>
<svg class="a" style="left:1703.15px;top:555.5px;" width="10" height="11" viewBox="0 0 10 11"><rect x="0" y="0.0" width="10" height="1.1" fill="#d8d8d8"/><rect x="0" y="2.2" width="6" height="1.1" fill="#d8d8d8"/><rect x="0" y="4.4" width="10" height="1.1" fill="#d8d8d8"/><rect x="0" y="6.6000000000000005" width="6" height="1.1" fill="#d8d8d8"/><rect x="0" y="8.8" width="8" height="1.1" fill="#d8d8d8"/></svg>
<div class="a" style="left:1718.3px;top:551.5px;width:18.299999999999955px;height:18.5px;background:#4a4a4a;border-radius:2px;"></div>
<svg class="a" style="left:1722.4499999999998px;top:555.5px;" width="10" height="11" viewBox="0 0 10 11"><rect x="0.0" y="0.0" width="10" height="1.1" fill="#d8d8d8"/><rect x="2.0" y="2.2" width="6" height="1.1" fill="#d8d8d8"/><rect x="0.0" y="4.4" width="10" height="1.1" fill="#d8d8d8"/><rect x="2.0" y="6.6000000000000005" width="6" height="1.1" fill="#d8d8d8"/><rect x="1.0" y="8.8" width="8" height="1.1" fill="#d8d8d8"/></svg>
<div class="a" style="left:1737.8px;top:551.5px;width:19.90000000000009px;height:18.5px;background:#4a4a4a;border-radius:2px;"></div>
<svg class="a" style="left:1742.75px;top:555.5px;" width="10" height="11" viewBox="0 0 10 11"><rect x="0" y="0.0" width="10" height="1.1" fill="#d8d8d8"/><rect x="4" y="2.2" width="6" height="1.1" fill="#d8d8d8"/><rect x="0" y="4.4" width="10" height="1.1" fill="#d8d8d8"/><rect x="4" y="6.6000000000000005" width="6" height="1.1" fill="#d8d8d8"/><rect x="2" y="8.8" width="8" height="1.1" fill="#d8d8d8"/></svg>
<div class="a" style="left:1769.5px;top:551.5px;width:18.0px;height:18.5px;background:#656565;border-radius:2px;"></div>
<svg class="a" style="left:1773.0px;top:555px;" width="11" height="11" viewBox="0 0 11 11"><rect x="0" y="0.0" width="11" height="1.1" fill="#d8d8d8"/><rect x="0" y="2.2" width="11" height="1.1" fill="#d8d8d8"/><rect x="0" y="4.4" width="11" height="1.1" fill="#d8d8d8"/></svg>
<div class="a" style="left:1788.5px;top:551.5px;width:18.5px;height:18.5px;background:#4a4a4a;border-radius:2px;"></div>
<svg class="a" style="left:1792.25px;top:555px;" width="11" height="11" viewBox="0 0 11 11"><rect x="0" y="2.5" width="11" height="1.1" fill="#d8d8d8"/><rect x="0" y="4.7" width="11" height="1.1" fill="#d8d8d8"/><rect x="0" y="6.9" width="11" height="1.1" fill="#d8d8d8"/></svg>
<div class="a" style="left:1808.2px;top:551.5px;width:19.59999999999991px;height:18.5px;background:#4a4a4a;border-radius:2px;"></div>
<svg class="a" style="left:1812.5px;top:555px;" width="11" height="11" viewBox="0 0 11 11"><rect x="0" y="5.0" width="11" height="1.1" fill="#d8d8d8"/><rect x="0" y="7.2" width="11" height="1.1" fill="#d8d8d8"/><rect x="0" y="9.4" width="11" height="1.1" fill="#d8d8d8"/></svg>
<div class="t" style="left:1587.5px;top:575.20px;font-size:12.5px;color:#c8c8c8;">Align By Geometry</div>
<div class="a" style="left:1699.3px;top:575.8px;width:13.5px;height:13.400000000000091px;background:#2a2a2a;border-radius:3px;border:1px solid #212121;"></div>
<div class="a" style="left:1587.5px;top:595px;width:110px;height:17px;overflow:hidden;"><div class="t" style="left:0;top:0.6px;font-size:12.5px;color:#c8c8c8;">Horizontal Overflow</div></div>
<div class="a" style="left:1699.3px;top:595px;width:203.29999999999995px;height:16.299999999999955px;background:#515151;border-radius:3px;border:1px solid #303030;"></div>
<div class="t" style="left:1702.8px;top:595.35px;font-size:12.5px;color:#c8c8c8;">Wrap</div>
<svg class="a" style="left:1889.6px;top:601.1999999999999px;" width="7" height="4.5" viewBox="0 0 7 4.5"><path d="M0 0H7L3.5 4.5Z" fill="#c8c8c8"/></svg>
<div class="t" style="left:1587.5px;top:616.90px;font-size:12.5px;color:#c8c8c8;">Vertical Overflow</div>
<div class="a" style="left:1699.3px;top:615.8px;width:203.29999999999995px;height:16.40000000000009px;background:#515151;border-radius:3px;border:1px solid #303030;"></div>
<div class="t" style="left:1702.8px;top:616.20px;font-size:12.5px;color:#c8c8c8;">Truncate</div>
<svg class="a" style="left:1889.6px;top:622.05px;" width="7" height="4.5" viewBox="0 0 7 4.5"><path d="M0 0H7L3.5 4.5Z" fill="#c8c8c8"/></svg>
<div class="t" style="left:1587.5px;top:637.70px;font-size:12.5px;color:#c8c8c8;">Best Fit</div>
<div class="a" style="left:1699.3px;top:637.8px;width:13.5px;height:13.700000000000045px;background:#2a2a2a;border-radius:3px;border:1px solid #212121;"></div>
<div class="t" style="left:1572.5px;top:657.00px;font-size:12.5px;color:#c8c8c8;">Color</div>
<div class="a" style="left:1699.3px;top:655.2px;width:203.3px;height:17px;background:#2a2a2a;border-radius:3px;border:1px solid #212121;"></div>
<div class="a" style="left:1700px;top:656px;width:184.3px;height:15.4px;background:#ffffff;"></div>
<svg class="a" style="left:1888px;top:658px;" width="11" height="11" viewBox="0 0 11 11"><path d="M1 10L1.6 7.6 6.6 2.6 8.4 4.4 3.4 9.4Z" fill="#c4c4c4"/><path d="M6.2 1.8L9.2 4.8M7.3 3.2L9.3 0.8A1 1 0 0 1 10.6 2L8.2 4.2" stroke="#c4c4c4" stroke-width="1.5" fill="none"/></svg>
<div class="t" style="left:1572.5px;top:677.80px;font-size:12.5px;color:#c8c8c8;">Material</div>
<div class="a" style="left:1699.3px;top:676px;width:203.29999999999995px;height:17.399999999999977px;background:#2a2a2a;border-radius:3px;border:1px solid #212121;"></div>
<div class="t" style="left:1702.3px;top:677.50px;font-size:12.5px;color:#c8c8c8;">None (Material)</div>
<div class="a" style="left:1884px;top:677px;width:1px;height:15.4px;background:#3a3a3a;"></div>
<svg class="a" style="left:1888px;top:679.7px;" width="10" height="10" viewBox="0 0 10 10"><circle cx="5" cy="5" r="4.2" fill="none" stroke="#c4c4c4" stroke-width="1.1"/><circle cx="5" cy="5" r="1.5" fill="#c4c4c4"/></svg>
<div class="t" style="left:1572.5px;top:698.50px;font-size:12.5px;color:#c8c8c8;">Raycast Target</div>
<div class="a" style="left:1699.3px;top:698.6px;width:13.5px;height:13.799999999999955px;background:#2a2a2a;border-radius:3px;border:1px solid #212121;"></div>
<svg class="a" style="left:1701.8999999999999px;top:701.8000000000001px;" width="9" height="8" viewBox="0 0 9 8"><path d="M0.8 4.2L3.3 6.7L8.3 0.9" fill="none" stroke="#e4e4e4" stroke-width="1.7"/></svg>
<svg class="a" style="left:1561.4px;top:723.15px;" width="6" height="8.5" viewBox="0 0 6 8.5"><path d="M0 0L6 4.25L0 8.5Z" fill="#6e6e6e"/></svg>
<div class="t" style="left:1572.5px;top:719.90px;font-size:12.5px;color:#c8c8c8;">Raycast Padding</div>
<div class="t" style="left:1572.5px;top:740.80px;font-size:12.5px;color:#c8c8c8;">Maskable</div>
<div class="a" style="left:1699.3px;top:740.8px;width:13.5px;height:13.800000000000068px;background:#2a2a2a;border-radius:3px;border:1px solid #212121;"></div>
<svg class="a" style="left:1701.8999999999999px;top:744.0px;" width="9" height="8" viewBox="0 0 9 8"><path d="M0.8 4.2L3.3 6.7L8.3 0.9" fill="none" stroke="#e4e4e4" stroke-width="1.7"/></svg>
<div class="a" style="left:1553px;top:765px;width:354px;height:59px;background:#3e3e3e;"></div>
<div class="a" style="left:1553px;top:765px;width:354px;height:1px;background:#1f1f1f;"></div>
<div class="a" style="left:1572.7px;top:776px;width:25px;height:26.5px;background:#ffffff;"></div>
<div class="t" style="left:1609px;top:773.70px;font-size:13.95px;color:#cfcfcf;">Default UI Material (Material)</div>
<svg class="a" style="left:1877.2px;top:774.5px;" width="11" height="11" viewBox="0 0 11 11"><circle cx="5.5" cy="5.5" r="5.5" fill="#c4c4c4"/><path d="M3.9 4.3a1.7 1.7 0 1 1 2.4 1.5c-.6.3-.8.6-.8 1.2" fill="none" stroke="#3e3e3e" stroke-width="1.3"/><circle cx="5.5" cy="8.6" r="0.8" fill="#3e3e3e"/></svg>
<svg class="a" style="left:1897px;top:773.5px;" width="4" height="13.0" viewBox="0 0 4 13.0"><circle cx="2" cy="2.0" r="1.1" fill="#c4c4c4"/><circle cx="2" cy="6.5" r="1.1" fill="#c4c4c4"/><circle cx="2" cy="11.0" r="1.1" fill="#c4c4c4"/></svg>
<div class="t" style="left:1606.3px;top:798.00px;font-size:12.5px;color:#858585;">Shader</div>
<div class="a" style="left:1657.7px;top:797px;width:244.89999999999986px;height:16px;background:#444444;border-radius:3px;border:1px solid #303030;"></div>
<div class="t" style="left:1661.2px;top:797.20px;font-size:12.5px;color:#7a7a7a;">UI/Default</div>
<svg class="a" style="left:1889.6px;top:803.05px;" width="7" height="4.5" viewBox="0 0 7 4.5"><path d="M0 0H7L3.5 4.5Z" fill="#7a7a7a"/></svg>
<svg class="a" style="left:1561.5px;top:807.25px;" width="6" height="8.5" viewBox="0 0 6 8.5"><path d="M0 0L6 4.25L0 8.5Z" fill="#6e6e6e"/></svg>
<div class="a" style="left:1553px;top:823.5px;width:354px;height:1px;background:#1f1f1f;"></div>
<div class="a" style="left:1553px;top:834.5px;width:354px;height:1px;background:#2a2a2a;"></div>
<div class="a" style="left:1616.2px;top:844.8px;width:227.5px;height:22.2px;background:#585858;border-radius:3px;"></div>
<div class="t" style="left:1685px;top:848.50px;font-size:12.5px;color:#c8c8c8;">Add Component</div>
<div class="a" style="left:1553px;top:868px;width:367px;height:22px;background:#3a3a3a;"></div>
<div class="a" style="left:1553px;top:868px;width:367px;height:1px;background:#232323;"></div>
<div class="a" style="left:1553px;top:889.5px;width:367px;height:1px;background:#232323;"></div>
<div class="a" style="left:1557px;top:869px;width:128.5px;height:20.5px;background:#3c3c3c;border-left:1px solid #2a2a2a;border-right:1px solid #2a2a2a;"></div>
<div class="t" style="left:1561.3px;top:872.50px;font-size:12.5px;color:#d8d8d8;font-weight:700;">Default UI Material</div>
<svg class="a" style="left:1673.5px;top:877.25px;" width="7" height="4.5" viewBox="0 0 7 4.5"><path d="M0 0H7L3.5 4.5Z" fill="#d0d0d0"/></svg>
<div class="a" style="left:1689px;top:877.5px;width:212.5px;height:1px;background:#5a5a5a;"></div>
<div class="a" style="left:1689px;top:880.5px;width:212.5px;height:1px;background:#5a5a5a;"></div>
<div class="a" style="left:1903.5px;top:869px;width:1px;height:20.5px;background:#2a2a2a;"></div>
<svg class="a" style="left:1909.8px;top:873.0px;" width="4" height="13.0" viewBox="0 0 4 13.0"><circle cx="2" cy="2.0" r="1.1" fill="#c4c4c4"/><circle cx="2" cy="6.5" r="1.1" fill="#c4c4c4"/><circle cx="2" cy="11.0" r="1.1" fill="#c4c4c4"/></svg>
<div class="a" style="left:1553px;top:890.5px;width:367px;height:166.5px;background:#313131;"></div>
<div class="a" style="left:1675.3px;top:910.3px;width:122.7px;height:128px;background:#ffffff;"></div>
<div class="a" style="left:1553px;top:1057px;width:367px;height:1px;background:#1f1f1f;"></div>
<div class="a" style="left:1553px;top:1058px;width:367px;height:5px;background:#383838;"></div>
<svg class="a" style="left:1669.3px;top:482.6px;" width="11" height="19.5" viewBox="0 0 13 23"><path d="M1 1V17L4.8 13.4 7.6 19.8 10 18.7 7.2 12.5H12Z" fill="#fff" stroke="#151515" stroke-width="1" stroke-linejoin="round"/></svg>
<svg class="a" style="left:1663.3px;top:482.3px;" width="17" height="5.4" viewBox="0 0 18 6"><path d="M0 3L3.5 0.3V5.7Z M18 3L14.5 0.3V5.7Z" fill="#fff"/></svg>
<svg class="a" style="left:1820px;top:1066px;" width="14" height="14" viewBox="0 0 14 14"><ellipse cx="7" cy="9" rx="4" ry="5" fill="#c4c4c4"/><circle cx="7" cy="3.5" r="2.3" fill="#c4c4c4"/><path d="M1 5L4 7M13 5L10 7M1 12L3.5 10.5M13 12L10.5 10.5" stroke="#c4c4c4" stroke-width="1.2"/><path d="M1 1L13 14" stroke="#191919" stroke-width="2.4"/><path d="M1.8 0.4L13.5 13.2" stroke="#c4c4c4" stroke-width="1.1"/></svg>
<svg class="a" style="left:1846.5px;top:1066px;" width="14" height="14" viewBox="0 0 14 14"><ellipse cx="7" cy="3.5" rx="5.5" ry="2.6" fill="#c4c4c4"/><path d="M1.5 5.5V8.5Q7 12 12.5 8.5V5.5Q7 9 1.5 5.5Z M1.5 10V13Q7 16.5 12.5 13V10Q7 13.5 1.5 10Z" fill="#c4c4c4"/><path d="M1 1L13 14" stroke="#191919" stroke-width="2.4"/><path d="M1.8 0.4L13.5 13.2" stroke="#c4c4c4" stroke-width="1.1"/></svg>
<svg class="a" style="left:1873px;top:1066px;" width="14" height="14" viewBox="0 0 14 14"><path d="M2 9A5.2 5.2 0 0 1 11.5 5M12 8A5.2 5.2 0 0 1 2.8 11.5" fill="none" stroke="#c4c4c4" stroke-width="1.5"/><path d="M12.5 2V6H8.8Z M1.5 14V10H5.2Z" fill="#c4c4c4"/><path d="M1 1L13 14" stroke="#191919" stroke-width="2.4"/><path d="M1.8 0.4L13.5 13.2" stroke="#c4c4c4" stroke-width="1.1"/></svg>
<svg class="a" style="left:1899.5px;top:1066px;" width="14" height="14" viewBox="0 0 14 14"><circle cx="7" cy="8" r="6" fill="none" stroke="#c4c4c4" stroke-width="1.2"/><path d="M4 8L6.3 10.3L10.3 5.8" fill="none" stroke="#c4c4c4" stroke-width="1.3"/></svg>
<div class="a" style="left:0px;top:781px;width:767px;height:282.5px;background:#383838;"></div>
<div class="a" style="left:0px;top:781px;width:767px;height:21px;background:#282828;"></div>
<div class="a" style="left:0px;top:782px;width:80px;height:20px;background:#3c3c3c;"></div>
<svg class="a" style="left:7px;top:786.0px;" width="13" height="11" viewBox="0 0 13 11"><path d="M0 1Q0 0 1 0H4.4L5.6 1.5H11.6Q12.5 1.5 12.5 2.4V10Q12.5 11 11.5 11H1Q0 11 0 10Z" fill="#c2c2c2"/></svg>
<div class="t" style="left:23px;top:784.80px;font-size:12.5px;color:#c8c8c8;">Project</div>
<svg class="a" style="left:731.0px;top:785.8px;" width="9" height="11" viewBox="0 0 9 11"><rect x="0.8" y="5.6" width="7.4" height="4.6" fill="none" stroke="#c4c4c4" stroke-width="1.1"/><path d="M2.4 5.6V3.2a2.1 2.1 0 0 1 4.2 0V4" fill="none" stroke="#c4c4c4" stroke-width="1.1"/></svg>
<svg class="a" style="left:750.8px;top:785.0px;" width="4" height="13.0" viewBox="0 0 4 13.0"><circle cx="2" cy="2.0" r="1.1" fill="#c4c4c4"/><circle cx="2" cy="6.5" r="1.1" fill="#c4c4c4"/><circle cx="2" cy="11.0" r="1.1" fill="#c4c4c4"/></svg>
<div class="a" style="left:0px;top:802px;width:767px;height:21.5px;background:#3c3c3c;"></div>
<div class="a" style="left:0px;top:823px;width:767px;height:1px;background:#232323;"></div>
<svg class="a" style="left:7px;top:806.3px;" width="12" height="12" viewBox="0 0 12 12"><path d="M6 0V12M0 6H12" stroke="#c4c4c4" stroke-width="1.6"/></svg>
<svg class="a" style="left:23.5px;top:810.05px;" width="7" height="4.5" viewBox="0 0 7 4.5"><path d="M0 0H7L3.5 4.5Z" fill="#c4c4c4"/></svg>
<div class="a" style="left:346px;top:804.5px;width:300px;height:16px;background:#2a2a2a;border-radius:4px;border:1px solid #1f1f1f;"></div>
<svg class="a" style="left:350px;top:808.5px;" width="9" height="9" viewBox="0 0 9 9"><circle cx="3.2" cy="3.2" r="2.3" fill="none" stroke="#bbb" stroke-width="1.1"/><path d="M5 5L7.8 7.8" stroke="#bbb" stroke-width="1.3"/></svg>
<div class="a" style="left:648px;top:802px;width:1px;height:21px;background:#2c2c2c;"></div>
<div class="a" style="left:674.3px;top:802px;width:1px;height:21px;background:#2c2c2c;"></div>
<div class="a" style="left:700px;top:802px;width:1px;height:21px;background:#2c2c2c;"></div>
<div class="a" style="left:726px;top:802px;width:1px;height:21px;background:#2c2c2c;"></div>
<svg class="a" style="left:654px;top:805.5px;" width="14" height="14" viewBox="0 0 14 14"><circle cx="4" cy="10" r="3.6" fill="#c4c4c4"/><rect x="1.5" y="0.5" width="6" height="5.5" fill="#c4c4c4"/><path d="M9.5 3L13.5 10H5.5Z" fill="#c4c4c4" stroke="#3c3c3c" stroke-width="0.8"/></svg>
<svg class="a" style="left:680px;top:806.5px;" width="13" height="12" viewBox="0 0 13 12"><path d="M0.5 6.5L6.5 0.5H12.5V6.5L6.5 12Z" fill="#c4c4c4" transform="rotate(-8 6 6)"/><circle cx="9.6" cy="3.4" r="1.2" fill="#3c3c3c"/></svg>
<svg class="a" style="left:706px;top:806px;" width="13" height="12" viewBox="0 0 13 12"><path d="M6.5 0L8.3 4.2 12.9 4.6 9.4 7.6 10.5 12 6.5 9.6 2.5 12 3.6 7.6 0.1 4.6 4.7 4.2Z" fill="#8c8c8c"/></svg>
<svg class="a" style="left:730px;top:806.5px;" width="15" height="12" viewBox="0 0 15 12"><path d="M1 6Q7.5 -1 14 6Q7.5 13 1 6Z" fill="none" stroke="#d0d0d0" stroke-width="1.2"/><circle cx="7.5" cy="6" r="2" fill="#d0d0d0"/><path d="M2 11.5L13 0.5" stroke="#d0d0d0" stroke-width="1.4"/></svg>
<div class="t" style="left:746px;top:805.30px;font-size:12.5px;color:#c8c8c8;">19</div>
<div class="a" style="left:0;top:824px;width:231.3px;height:239px;overflow:hidden;">
<svg class="a" style="left:87.75px;top:4.2000000000000455px;" width="14" height="11" viewBox="0 0 14 11"><path d="M0.6 10.4V1.4Q0.6 0.6 1.4 0.6H4.6L5.8 2H11Q11.6 2 11.6 2.8V4.2H3.6L0.6 10.4Z" fill="none" stroke="#c2c2c2" stroke-width="1.1"/><path d="M3.4 4.6H13.6L10.8 10.6H0.6Z" fill="#c2c2c2"/></svg>
<div class="t" style="left:104.35px;top:2.50px;font-size:12.5px;color:#c8c8c8;letter-spacing:-0.5px;">PNG</div>
<svg class="a" style="left:74.75px;top:6.7000000000000455px;" width="8" height="6" viewBox="0 0 8 6"><path d="M0 0H8L4.0 6Z" fill="#6e6e6e"/></svg>
<svg class="a" style="left:101.80000000000001px;top:20.970000000000027px;" width="13" height="11" viewBox="0 0 13 11"><path d="M0 1Q0 0 1 0H4.4L5.6 1.5H11.6Q12.5 1.5 12.5 2.4V10Q12.5 11 11.5 11H1Q0 11 0 10Z" fill="#c2c2c2"/></svg>
<div class="t" style="left:118.4px;top:19.27px;font-size:12.5px;color:#c8c8c8;letter-spacing:-0.5px;">NO_FX</div>
<svg class="a" style="left:101.80000000000001px;top:37.74000000000001px;" width="13" height="11" viewBox="0 0 13 11"><path d="M0 1Q0 0 1 0H4.4L5.6 1.5H11.6Q12.5 1.5 12.5 2.4V10Q12.5 11 11.5 11H1Q0 11 0 10Z" fill="#c2c2c2"/></svg>
<div class="t" style="left:118.4px;top:36.04px;font-size:12.5px;color:#c8c8c8;letter-spacing:-0.5px;">WITH_FX</div>
<svg class="a" style="left:73.7px;top:54.50999999999999px;" width="13" height="11" viewBox="0 0 13 11"><path d="M0 1Q0 0 1 0H4.4L5.6 1.5H11.6Q12.5 1.5 12.5 2.4V10Q12.5 11 11.5 11H1Q0 11 0 10Z" fill="#c2c2c2"/></svg>
<div class="t" style="left:90.30000000000001px;top:52.81px;font-size:12.5px;color:#c8c8c8;letter-spacing:-0.5px;">DUST_FX</div>
<svg class="a" style="left:62.0px;top:56.00999999999999px;" width="6" height="8" viewBox="0 0 6 8"><path d="M0 0L6 4.0L0 8Z" fill="#6e6e6e"/></svg>
<svg class="a" style="left:73.7px;top:71.28000000000009px;" width="13" height="11" viewBox="0 0 13 11"><path d="M0 1Q0 0 1 0H4.4L5.6 1.5H11.6Q12.5 1.5 12.5 2.4V10Q12.5 11 11.5 11H1Q0 11 0 10Z" fill="#c2c2c2"/></svg>
<div class="t" style="left:90.30000000000001px;top:69.58px;font-size:12.5px;color:#c8c8c8;letter-spacing:-0.5px;">SKELETON</div>
<svg class="a" style="left:62.0px;top:72.78000000000009px;" width="6" height="8" viewBox="0 0 6 8"><path d="M0 0L6 4.0L0 8Z" fill="#6e6e6e"/></svg>
<svg class="a" style="left:59.650000000000006px;top:88.05000000000007px;" width="13" height="11" viewBox="0 0 13 11"><path d="M0 1Q0 0 1 0H4.4L5.6 1.5H11.6Q12.5 1.5 12.5 2.4V10Q12.5 11 11.5 11H1Q0 11 0 10Z" fill="#c2c2c2"/></svg>
<div class="t" style="left:76.25px;top:86.35px;font-size:12.5px;color:#c8c8c8;letter-spacing:-0.5px;">EXAMPLES</div>
<svg class="a" style="left:45.6px;top:104.82000000000005px;" width="14" height="11" viewBox="0 0 14 11"><path d="M0.6 10.4V1.4Q0.6 0.6 1.4 0.6H4.6L5.8 2H11Q11.6 2 11.6 2.8V4.2H3.6L0.6 10.4Z" fill="none" stroke="#c2c2c2" stroke-width="1.1"/><path d="M3.4 4.6H13.6L10.8 10.6H0.6Z" fill="#c2c2c2"/></svg>
<div class="t" style="left:62.2px;top:103.12px;font-size:12.5px;color:#c8c8c8;letter-spacing:-0.5px;">SUNNYSIDE_WORLD_ASSETS</div>
<svg class="a" style="left:32.6px;top:107.32000000000005px;" width="8" height="6" viewBox="0 0 8 6"><path d="M0 0H8L4.0 6Z" fill="#6e6e6e"/></svg>
<svg class="a" style="left:59.650000000000006px;top:121.59000000000003px;" width="13" height="11" viewBox="0 0 13 11"><path d="M0 1Q0 0 1 0H4.4L5.6 1.5H11.6Q12.5 1.5 12.5 2.4V10Q12.5 11 11.5 11H1Q0 11 0 10Z" fill="#c2c2c2"/></svg>
<div class="t" style="left:76.25px;top:119.89px;font-size:12.5px;color:#c8c8c8;letter-spacing:-0.5px;">TILESET</div>
<svg class="a" style="left:47.95px;top:123.09000000000003px;" width="6" height="8" viewBox="0 0 6 8"><path d="M0 0L6 4.0L0 8Z" fill="#6e6e6e"/></svg>
<svg class="a" style="left:45.6px;top:138.36px;" width="13" height="11" viewBox="0 0 13 11"><path d="M0 1Q0 0 1 0H4.4L5.6 1.5H11.6Q12.5 1.5 12.5 2.4V10Q12.5 11 11.5 11H1Q0 11 0 10Z" fill="#c2c2c2"/></svg>
<div class="t" style="left:62.2px;top:136.66px;font-size:12.5px;color:#c8c8c8;letter-spacing:-0.5px;">SUNNYSIDE_WORLD_CHARACTERS</div>
<svg class="a" style="left:33.900000000000006px;top:139.86px;" width="6" height="8" viewBox="0 0 6 8"><path d="M0 0L6 4.0L0 8Z" fill="#6e6e6e"/></svg>
<svg class="a" style="left:45.6px;top:155.1300000000001px;" width="13" height="11" viewBox="0 0 13 11"><path d="M0 1Q0 0 1 0H4.4L5.6 1.5H11.6Q12.5 1.5 12.5 2.4V10Q12.5 11 11.5 11H1Q0 11 0 10Z" fill="#c2c2c2"/></svg>
<div class="t" style="left:62.2px;top:153.43px;font-size:12.5px;color:#c8c8c8;letter-spacing:-0.5px;">SUNNYSIDE_WORLD_CHIMNEY</div>
<svg class="a" style="left:45.6px;top:171.9000000000001px;" width="13" height="11" viewBox="0 0 13 11"><path d="M0 1Q0 0 1 0H4.4L5.6 1.5H11.6Q12.5 1.5 12.5 2.4V10Q12.5 11 11.5 11H1Q0 11 0 10Z" fill="#c2c2c2"/></svg>
<div class="t" style="left:62.2px;top:170.20px;font-size:12.5px;color:#c8c8c8;letter-spacing:-0.5px;">SUNNYSIDEWORLD_UI_V1.0</div>
<svg class="a" style="left:33.900000000000006px;top:173.4000000000001px;" width="6" height="8" viewBox="0 0 6 8"><path d="M0 0L6 4.0L0 8Z" fill="#6e6e6e"/></svg>
<svg class="a" style="left:31.55px;top:188.67000000000007px;" width="14" height="11" viewBox="0 0 14 11"><path d="M0.6 10.4V1.4Q0.6 0.6 1.4 0.6H4.6L5.8 2H11Q11.6 2 11.6 2.8V4.2H3.6L0.6 10.4Z" fill="none" stroke="#c2c2c2" stroke-width="1.1"/><path d="M3.4 4.6H13.6L10.8 10.6H0.6Z" fill="#c2c2c2"/></svg>
<div class="t" style="left:48.150000000000006px;top:186.97px;font-size:12.5px;color:#c8c8c8;letter-spacing:-0.5px;">UI</div>
<svg class="a" style="left:18.55px;top:191.17000000000007px;" width="8" height="6" viewBox="0 0 8 6"><path d="M0 0H8L4.0 6Z" fill="#6e6e6e"/></svg>
<div class="a" style="left:0px;top:202.74000000000007px;width:235px;height:16.6px;background:#4d4d4d;"></div>
<svg class="a" style="left:45.6px;top:205.44000000000005px;" width="13" height="11" viewBox="0 0 13 11"><path d="M0 1Q0 0 1 0H4.4L5.6 1.5H11.6Q12.5 1.5 12.5 2.4V10Q12.5 11 11.5 11H1Q0 11 0 10Z" fill="#c2c2c2"/></svg>
<div class="t" style="left:62.2px;top:203.74px;font-size:12.5px;color:#c8c8c8;">Dialogue</div>
<svg class="a" style="left:17.5px;top:222.21000000000004px;" width="13" height="11" viewBox="0 0 13 11"><path d="M0 1Q0 0 1 0H4.4L5.6 1.5H11.6Q12.5 1.5 12.5 2.4V10Q12.5 11 11.5 11H1Q0 11 0 10Z" fill="#c2c2c2"/></svg>
<div class="t" style="left:34.1px;top:220.51px;font-size:12.5px;color:#d6d6d6;font-weight:700;">Packages</div>
<svg class="a" style="left:5.800000000000001px;top:223.71000000000004px;" width="6" height="8" viewBox="0 0 6 8"><path d="M0 0L6 4.0L0 8Z" fill="#6e6e6e"/></svg>
</div>
<div class="a" style="left:234.5px;top:824px;width:10px;height:239.5px;background:#353535;"></div>
<svg class="a" style="left:236px;top:830.5px;" width="7" height="5" viewBox="0 0 7 5"><path d="M0 5H7L3.5 0Z" fill="#c0c0c0"/></svg>
<svg class="a" style="left:236px;top:1053.5px;" width="7" height="5" viewBox="0 0 7 5"><path d="M0 0H7L3.5 5Z" fill="#c0c0c0"/></svg>
<div class="a" style="left:235.5px;top:947px;width:8px;height:100.5px;background:#5e5e5e;border-radius:4px;"></div>
<div class="a" style="left:244.5px;top:824px;width:1.2px;height:239.5px;background:#232323;"></div>
<div class="a" style="left:245.7px;top:824px;width:521.3px;height:218px;background:#333333;"></div>
<div class="a" style="left:245.7px;top:824px;width:521.3px;height:20.5px;background:#3e3e3e;"></div>
<div class="a" style="left:245.7px;top:844.2px;width:521.3px;height:1px;background:#2a2a2a;"></div>
<div class="t" style="left:250.4px;top:826.50px;font-size:12.5px;color:#c8c8c8;">Assets</div>
<svg class="a" style="left:294.5px;top:829.5px;" width="5" height="9" viewBox="0 0 5 9"><path d="M0.7 0.7L4.2 4.5L0.7 8.3" fill="none" stroke="#9a9a9a" stroke-width="1.2"/></svg>
<div class="t" style="left:305px;top:826.50px;font-size:12.5px;color:#c8c8c8;">UI</div>
<svg class="a" style="left:324.6px;top:829.5px;" width="5" height="9" viewBox="0 0 5 9"><path d="M0.7 0.7L4.2 4.5L0.7 8.3" fill="none" stroke="#9a9a9a" stroke-width="1.2"/></svg>
<div class="t" style="left:335.1px;top:826.50px;font-size:12px;color:#d6d6d6;font-weight:700;">Dialogue</div>
<div class="a" style="left:260px;top:879.5px;width:49px;height:10px;background:#262626;border-radius:1px;box-shadow:0 1px 2px rgba(0,0,0,.5);"></div>
<div class="a" style="left:262.5px;top:881.5px;width:1px;height:5px;background:#c8a83c;"></div>
<svg class="a" style="left:307.7px;top:877.2px;" width="17" height="17" viewBox="0 0 17 17"><circle cx="8.5" cy="9" r="8" fill="rgba(0,0,0,.35)"/><circle cx="8.5" cy="8.5" r="7.8" fill="#d6d6d6"/><path d="M6.2 4.6L12.2 8.5L6.2 12.4Z" fill="#3a3a3a"/></svg>
<div class="t" style="left:264px;top:916.30px;font-size:10.5px;color:#c8c8c8;">hud_dial...</div>
<div class="a" style="left:330.3px;top:857.7px;width:54.2px;height:55px;background:#3a3a3a;border-radius:2px;box-shadow:0 1px 2px rgba(0,0,0,.4);"></div>
<svg class="a" style="left:0px;top:0px;" width="1" height="1" viewBox="0 0 1 1"><rect x="343.34" y="862.50" width="11.70" height="2.62" fill="#1c1418"/><rect x="341.07" y="864.77" width="2.62" height="2.62" fill="#1c1418"/><rect x="343.34" y="864.77" width="2.62" height="2.62" fill="#e07820"/><rect x="345.61" y="864.77" width="7.16" height="2.62" fill="#f0902c"/><rect x="352.42" y="864.77" width="2.62" height="2.62" fill="#e07820"/><rect x="354.69" y="864.77" width="2.62" height="2.62" fill="#1c1418"/><rect x="341.07" y="867.04" width="2.62" height="2.62" fill="#1c1418"/><rect x="343.34" y="867.04" width="2.62" height="2.62" fill="#f0902c"/><rect x="345.61" y="867.04" width="2.62" height="2.62" fill="#f8b060"/><rect x="347.88" y="867.04" width="2.62" height="2.62" fill="#f0902c"/><rect x="350.15" y="867.04" width="4.89" height="2.62" fill="#e07820"/><rect x="354.69" y="867.04" width="13.97" height="2.62" fill="#1c1418"/><rect x="341.07" y="869.31" width="2.62" height="2.62" fill="#1c1418"/><rect x="343.34" y="869.31" width="2.62" height="2.62" fill="#e07820"/><rect x="345.61" y="869.31" width="2.62" height="2.62" fill="#f0902c"/><rect x="347.88" y="869.31" width="4.89" height="2.62" fill="#e07820"/><rect x="352.42" y="869.31" width="2.62" height="2.62" fill="#c4662a"/><rect x="354.69" y="869.31" width="2.62" height="2.62" fill="#e07820"/><rect x="356.96" y="869.31" width="2.62" height="2.62" fill="#f0902c"/><rect x="359.23" y="869.31" width="4.89" height="2.62" fill="#f8b060"/><rect x="363.77" y="869.31" width="2.62" height="2.62" fill="#f0902c"/><rect x="366.04" y="869.31" width="2.62" height="2.62" fill="#e07820"/><rect x="368.31" y="869.31" width="2.62" height="2.62" fill="#1c1418"/><rect x="338.80" y="871.58" width="2.62" height="2.62" fill="#1c1418"/><rect x="341.07" y="871.58" width="4.89" height="2.62" fill="#c4662a"/><rect x="345.61" y="871.58" width="4.89" height="2.62" fill="#e07820"/><rect x="350.15" y="871.58" width="2.62" height="2.62" fill="#c4662a"/><rect x="352.42" y="871.58" width="2.62" height="2.62" fill="#e07820"/><rect x="354.69" y="871.58" width="13.97" height="2.62" fill="#f0902c"/><rect x="368.31" y="871.58" width="2.62" height="2.62" fill="#e07820"/><rect x="370.58" y="871.58" width="2.62" height="2.62" fill="#1c1418"/><rect x="338.80" y="873.85" width="2.62" height="2.62" fill="#1c1418"/><rect x="341.07" y="873.85" width="7.16" height="2.62" fill="#c4662a"/><rect x="347.88" y="873.85" width="2.62" height="2.62" fill="#a04c2c"/><rect x="350.15" y="873.85" width="4.89" height="2.62" fill="#e07820"/><rect x="354.69" y="873.85" width="2.62" height="2.62" fill="#f0902c"/><rect x="356.96" y="873.85" width="11.70" height="2.62" fill="#e07820"/><rect x="368.31" y="873.85" width="2.62" height="2.62" fill="#f0902c"/><rect x="370.58" y="873.85" width="2.62" height="2.62" fill="#e07820"/><rect x="338.80" y="876.12" width="2.62" height="2.62" fill="#1c1418"/><rect x="341.07" y="876.12" width="7.16" height="2.62" fill="#c4662a"/><rect x="347.88" y="876.12" width="2.62" height="2.62" fill="#a04c2c"/><rect x="350.15" y="876.12" width="23.05" height="2.62" fill="#e07820"/><rect x="338.80" y="878.39" width="2.62" height="2.62" fill="#1c1418"/><rect x="341.07" y="878.39" width="7.16" height="2.62" fill="#c4662a"/><rect x="347.88" y="878.39" width="2.62" height="2.62" fill="#a04c2c"/><rect x="350.15" y="878.39" width="2.62" height="2.62" fill="#e07820"/><rect x="352.42" y="878.39" width="2.62" height="2.62" fill="#f8b060"/><rect x="354.69" y="878.39" width="2.62" height="2.62" fill="#e07820"/><rect x="356.96" y="878.39" width="2.62" height="2.62" fill="#f0902c"/><rect x="359.23" y="878.39" width="2.62" height="2.62" fill="#e07820"/><rect x="361.50" y="878.39" width="2.62" height="2.62" fill="#f8b060"/><rect x="363.77" y="878.39" width="2.62" height="2.62" fill="#e07820"/><rect x="366.04" y="878.39" width="2.62" height="2.62" fill="#f0902c"/><rect x="368.31" y="878.39" width="4.89" height="2.62" fill="#e07820"/><rect x="341.07" y="880.66" width="2.62" height="2.62" fill="#1c1418"/><rect x="343.34" y="880.66" width="4.89" height="2.62" fill="#c4662a"/><rect x="347.88" y="880.66" width="2.62" height="2.62" fill="#a04c2c"/><rect x="350.15" y="880.66" width="2.62" height="2.62" fill="#e07820"/><rect x="352.42" y="880.66" width="2.62" height="2.62" fill="#a04c2c"/><rect x="354.69" y="880.66" width="2.62" height="2.62" fill="#e07820"/><rect x="356.96" y="880.66" width="2.62" height="2.62" fill="#a04c2c"/><rect x="359.23" y="880.66" width="2.62" height="2.62" fill="#e07820"/><rect x="361.50" y="880.66" width="2.62" height="2.62" fill="#a04c2c"/><rect x="363.77" y="880.66" width="2.62" height="2.62" fill="#e07820"/><rect x="366.04" y="880.66" width="2.62" height="2.62" fill="#a04c2c"/><rect x="368.31" y="880.66" width="2.62" height="2.62" fill="#e07820"/><rect x="370.58" y="880.66" width="2.62" height="2.62" fill="#c4662a"/><rect x="341.07" y="882.93" width="2.62" height="2.62" fill="#1c1418"/><rect x="343.34" y="882.93" width="4.89" height="2.62" fill="#c4662a"/><rect x="347.88" y="882.93" width="4.89" height="2.62" fill="#a04c2c"/><rect x="352.42" y="882.93" width="2.62" height="2.62" fill="#c4662a"/><rect x="354.69" y="882.93" width="2.62" height="2.62" fill="#f2c8a0"/><rect x="356.96" y="882.93" width="2.62" height="2.62" fill="#c4662a"/><rect x="359.23" y="882.93" width="2.62" height="2.62" fill="#f2c8a0"/><rect x="361.50" y="882.93" width="2.62" height="2.62" fill="#c4662a"/><rect x="363.77" y="882.93" width="2.62" height="2.62" fill="#f2c8a0"/><rect x="366.04" y="882.93" width="2.62" height="2.62" fill="#c4662a"/><rect x="368.31" y="882.93" width="2.62" height="2.62" fill="#f2c8a0"/><rect x="370.58" y="882.93" width="2.62" height="2.62" fill="#c4662a"/><rect x="343.34" y="885.20" width="2.62" height="2.62" fill="#1c1418"/><rect x="345.61" y="885.20" width="2.62" height="2.62" fill="#c4662a"/><rect x="347.88" y="885.20" width="4.89" height="2.62" fill="#a04c2c"/><rect x="352.42" y="885.20" width="18.51" height="2.62" fill="#f2c8a0"/><rect x="370.58" y="885.20" width="2.62" height="2.62" fill="#1c1418"/><rect x="345.61" y="887.47" width="2.62" height="2.62" fill="#1c1418"/><rect x="347.88" y="887.47" width="2.62" height="2.62" fill="#a04c2c"/><rect x="350.15" y="887.47" width="7.16" height="2.62" fill="#f2c8a0"/><rect x="356.96" y="887.47" width="2.62" height="2.62" fill="#1e1418"/><rect x="359.23" y="887.47" width="4.89" height="2.62" fill="#f2c8a0"/><rect x="363.77" y="887.47" width="2.62" height="2.62" fill="#1e1418"/><rect x="366.04" y="887.47" width="2.62" height="2.62" fill="#f2c8a0"/><rect x="368.31" y="887.47" width="2.62" height="2.62" fill="#d8a684"/><rect x="370.58" y="887.47" width="2.62" height="2.62" fill="#1c1418"/><rect x="347.88" y="889.74" width="2.62" height="2.62" fill="#1c1418"/><rect x="350.15" y="889.74" width="7.16" height="2.62" fill="#f2c8a0"/><rect x="356.96" y="889.74" width="2.62" height="2.62" fill="#1e1418"/><rect x="359.23" y="889.74" width="4.89" height="2.62" fill="#f2c8a0"/><rect x="363.77" y="889.74" width="2.62" height="2.62" fill="#1e1418"/><rect x="366.04" y="889.74" width="2.62" height="2.62" fill="#f2c8a0"/><rect x="368.31" y="889.74" width="2.62" height="2.62" fill="#d8a684"/><rect x="370.58" y="889.74" width="2.62" height="2.62" fill="#1c1418"/><rect x="347.88" y="892.01" width="2.62" height="2.62" fill="#1c1418"/><rect x="350.15" y="892.01" width="4.89" height="2.62" fill="#f2c8a0"/><rect x="354.69" y="892.01" width="2.62" height="2.62" fill="#f0a098"/><rect x="356.96" y="892.01" width="7.16" height="2.62" fill="#f2c8a0"/><rect x="363.77" y="892.01" width="4.89" height="2.62" fill="#f0a098"/><rect x="368.31" y="892.01" width="2.62" height="2.62" fill="#d8a684"/><rect x="370.58" y="892.01" width="2.62" height="2.62" fill="#1c1418"/><rect x="350.15" y="894.28" width="2.62" height="2.62" fill="#1c1418"/><rect x="352.42" y="894.28" width="2.62" height="2.62" fill="#d8a684"/><rect x="354.69" y="894.28" width="11.70" height="2.62" fill="#f2c8a0"/><rect x="366.04" y="894.28" width="2.62" height="2.62" fill="#d8a684"/><rect x="368.31" y="894.28" width="2.62" height="2.62" fill="#1c1418"/><rect x="350.15" y="896.55" width="2.62" height="2.62" fill="#1c1418"/><rect x="352.42" y="896.55" width="13.97" height="2.62" fill="#c02848"/><rect x="366.04" y="896.55" width="2.62" height="2.62" fill="#5a2838"/><rect x="368.31" y="896.55" width="2.62" height="2.62" fill="#1c1418"/><rect x="350.15" y="898.82" width="2.62" height="2.62" fill="#1c1418"/><rect x="352.42" y="898.82" width="2.62" height="2.62" fill="#3c4c78"/><rect x="354.69" y="898.82" width="9.43" height="2.62" fill="#c02848"/><rect x="363.77" y="898.82" width="2.62" height="2.62" fill="#3c4c78"/><rect x="366.04" y="898.82" width="2.62" height="2.62" fill="#f2c8a0"/><rect x="368.31" y="898.82" width="2.62" height="2.62" fill="#1c1418"/><rect x="350.15" y="901.09" width="2.62" height="2.62" fill="#1c1418"/><rect x="352.42" y="901.09" width="13.97" height="2.62" fill="#3c4c78"/><rect x="366.04" y="901.09" width="2.62" height="2.62" fill="#f2c8a0"/><rect x="368.31" y="901.09" width="2.62" height="2.62" fill="#1c1418"/><rect x="350.15" y="903.36" width="2.62" height="2.62" fill="#1c1418"/><rect x="352.42" y="903.36" width="2.62" height="2.62" fill="#283050"/><rect x="354.69" y="903.36" width="2.62" height="2.62" fill="#3c4c78"/><rect x="356.96" y="903.36" width="4.89" height="2.62" fill="#283050"/><rect x="361.50" y="903.36" width="2.62" height="2.62" fill="#3c4c78"/><rect x="363.77" y="903.36" width="2.62" height="2.62" fill="#283050"/><rect x="366.04" y="903.36" width="2.62" height="2.62" fill="#1c1418"/><rect x="352.42" y="905.63" width="2.62" height="2.62" fill="#5a2838"/><rect x="363.77" y="905.63" width="2.62" height="2.62" fill="#5a2838"/></svg>
<svg class="a" style="left:376.0px;top:877.2px;" width="17" height="17" viewBox="0 0 17 17"><circle cx="8.5" cy="9" r="8" fill="rgba(0,0,0,.35)"/><circle cx="8.5" cy="8.5" r="7.8" fill="#d6d6d6"/><path d="M6.2 4.6L12.2 8.5L6.2 12.4Z" fill="#3a3a3a"/></svg>
<div class="t" style="left:345.3px;top:916.30px;font-size:10.8px;color:#c8c8c8;">NPC</div>
<div class="a" style="left:245.7px;top:1042px;width:521.3px;height:21.5px;background:#3c3c3c;"></div>
<div class="a" style="left:245.7px;top:1042px;width:521.3px;height:1px;background:#2a2a2a;"></div>
<div class="a" style="left:695.5px;top:1053.2px;width:54.5px;height:1.2px;background:#5a5a5a;"></div>
<svg class="a" style="left:716.8px;top:1048.7px;" width="10" height="10" viewBox="0 0 10 10"><circle cx="5" cy="5" r="5" fill="#b4b4b4"/></svg>
<div class="a" style="left:768.5px;top:781px;width:783.0px;height:282.5px;background:#383838;"></div>
<div class="a" style="left:768.5px;top:781px;width:783.0px;height:21px;background:#282828;"></div>
<div class="a" style="left:768.5px;top:782px;width:86.5px;height:20px;background:#3c3c3c;"></div>
<svg class="a" style="left:777px;top:786px;" width="11" height="11" viewBox="0 0 11 11"><rect x="0.5" y="0.5" width="10" height="10" rx="1" fill="#c4c4c4"/><path d="M2 3H9M2 5.5H9M2 8H9" stroke="#3c3c3c" stroke-width="1"/></svg>
<div class="t" style="left:792px;top:784.80px;font-size:12.5px;color:#c8c8c8;">Console</div>
<svg class="a" style="left:864px;top:786px;" width="12" height="12" viewBox="0 0 12 12"><circle cx="6" cy="6" r="6" fill="#c4c4c4"/><path d="M6 2.2V6H9.6" stroke="#282828" stroke-width="1.4" fill="none"/></svg>
<div class="t" style="left:880px;top:784.80px;font-size:12.5px;color:#c8c8c8;">Animation</div>
<svg class="a" style="left:1536px;top:785.2px;" width="4" height="13.0" viewBox="0 0 4 13.0"><circle cx="2" cy="2.0" r="1.1" fill="#c4c4c4"/><circle cx="2" cy="6.5" r="1.1" fill="#c4c4c4"/><circle cx="2" cy="11.0" r="1.1" fill="#c4c4c4"/></svg>
<div class="a" style="left:768.5px;top:802px;width:783.0px;height:21.5px;background:#3c3c3c;"></div>
<div class="a" style="left:768.5px;top:823px;width:783.0px;height:1px;background:#232323;"></div>
<div class="t" style="left:771.7px;top:805.30px;font-size:12.5px;color:#c8c8c8;">Clear</div>
<div class="a" style="left:807.5px;top:806px;width:1px;height:13px;background:#333;"></div>
<svg class="a" style="left:811.9px;top:810.05px;" width="7" height="4.5" viewBox="0 0 7 4.5"><path d="M0 0H7L3.5 4.5Z" fill="#c4c4c4"/></svg>
<div class="a" style="left:824.5px;top:802px;width:1px;height:21px;background:#2c2c2c;"></div>
<div class="a" style="left:825.5px;top:802px;width:57.5px;height:21px;background:#505050;"></div>
<div class="a" style="left:883px;top:802px;width:1px;height:21px;background:#2c2c2c;"></div>
<div class="t" style="left:829px;top:805.30px;font-size:12.5px;color:#c8c8c8;">Collapse</div>
<div class="t" style="left:888px;top:805.30px;font-size:12.2px;color:#c8c8c8;">Error Pause</div>
<div class="a" style="left:957px;top:802px;width:1px;height:21px;background:#2c2c2c;"></div>
<div class="t" style="left:961px;top:805.30px;font-size:12.5px;color:#c8c8c8;">Editor</div>
<svg class="a" style="left:996.1px;top:809.75px;" width="7" height="4.5" viewBox="0 0 7 4.5"><path d="M0 0H7L3.5 4.5Z" fill="#c4c4c4"/></svg>
<div class="a" style="left:1008.8px;top:802px;width:1px;height:21px;background:#2c2c2c;"></div>
<div class="a" style="left:1146.3px;top:804.3px;width:300.5px;height:16px;background:#2a2a2a;border-radius:4px;border:1px solid #1f1f1f;"></div>
<svg class="a" style="left:1151px;top:808.5px;" width="9" height="9" viewBox="0 0 9 9"><circle cx="3.2" cy="3.2" r="2.3" fill="none" stroke="#bbb" stroke-width="1.1"/><path d="M5 5L7.8 7.8" stroke="#bbb" stroke-width="1.3"/></svg>
<div class="a" style="left:1449.6px;top:802px;width:32.90000000000009px;height:21px;background:#4f4f4f;"></div>
<div class="a" style="left:1448.6px;top:802px;width:1px;height:21px;background:#2c2c2c;"></div>
<div class="a" style="left:1483.5px;top:802px;width:33.0px;height:21px;background:#4f4f4f;"></div>
<div class="a" style="left:1482.5px;top:802px;width:1px;height:21px;background:#2c2c2c;"></div>
<div class="a" style="left:1517.5px;top:802px;width:32.5px;height:21px;background:#4f4f4f;"></div>
<div class="a" style="left:1516.5px;top:802px;width:1px;height:21px;background:#2c2c2c;"></div>
<svg class="a" style="left:1454px;top:806px;" width="13" height="13" viewBox="0 0 13 13"><circle cx="6" cy="6" r="5.8" fill="#8c8c8c"/><rect x="5.1" y="2.4" width="1.9" height="5" fill="#4f4f4f"/><circle cx="6" cy="9.2" r="1" fill="#4f4f4f"/><path d="M7 11.5L11 13 9.5 10.5Z" fill="#8c8c8c"/></svg>
<div class="t" style="left:1470px;top:805.30px;font-size:12.5px;color:#c8c8c8;">0</div>
<svg class="a" style="left:1488px;top:806px;" width="13" height="12" viewBox="0 0 13 12"><path d="M6.5 0.3L12.8 11.7H0.2Z" fill="#8c8c8c"/><rect x="5.7" y="4" width="1.7" height="4.2" fill="#4f4f4f"/><circle cx="6.5" cy="9.8" r="0.9" fill="#4f4f4f"/></svg>
<div class="t" style="left:1504px;top:805.30px;font-size:12.5px;color:#c8c8c8;">0</div>
<svg class="a" style="left:1522px;top:805.5px;" width="13" height="13" viewBox="0 0 13 13"><circle cx="6.5" cy="6.5" r="6.2" fill="#d8d8d8"/><rect x="5.5" y="2.6" width="2" height="5.2" fill="#4f4f4f"/><circle cx="6.5" cy="9.9" r="1.1" fill="#4f4f4f"/></svg>
<div class="t" style="left:1538px;top:805.30px;font-size:12.5px;color:#c8c8c8;">0</div>
<div class="a" style="left:768.5px;top:990.5px;width:783.0px;height:1px;background:#2a2a2a;"></div>
</body></html>
